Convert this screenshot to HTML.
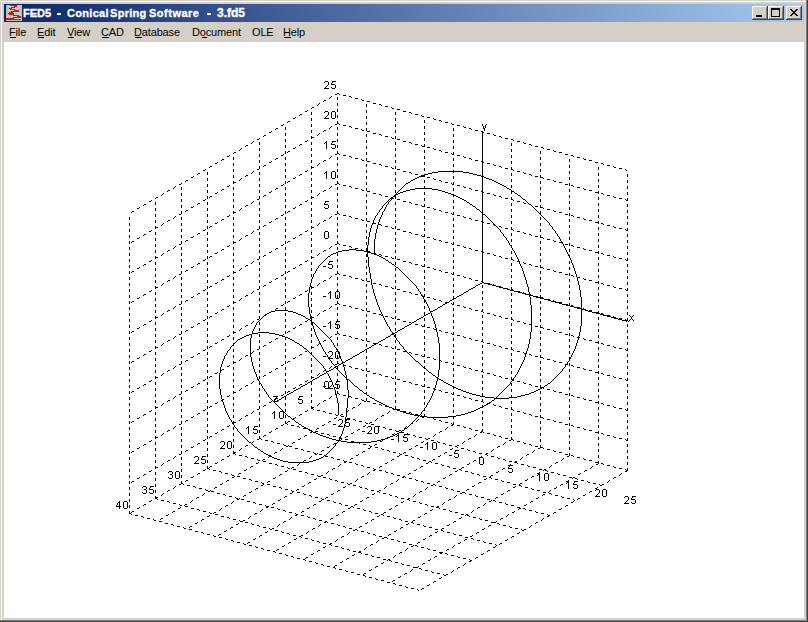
<!DOCTYPE html>
<html><head><meta charset="utf-8">
<style>
html,body{margin:0;padding:0;}
body{width:808px;height:622px;position:relative;overflow:hidden;background:#d4d0c8;font-family:"Liberation Sans",sans-serif;}
.abs{position:absolute;}
#frame{left:0;top:0;width:808px;height:622px;background:#d4d0c8;}
#title{left:4px;top:4px;width:800px;height:18px;background:linear-gradient(to right,#0a246a,#a6caf0);}
.tt{top:4px;height:18px;line-height:18px;color:#fff;font-weight:bold;font-size:11px;white-space:pre;-webkit-text-stroke:0.35px #fff;}
.btn{top:6px;width:16px;height:14px;background:#d4d0c8;box-sizing:border-box;}
#menu{left:4px;top:22px;width:800px;height:20px;background:#d4d0c8;}
.mi{top:22px;height:20px;line-height:20px;font-size:11px;color:#000;white-space:pre;letter-spacing:-0.15px;}
.mi u{text-decoration:none;border-bottom:1px solid #000;}
#client{left:4px;top:42px;width:800px;height:576px;background:#fff;}
svg{position:absolute;left:0;top:0;}
</style></head><body>
<div class="abs" id="frame"></div>
<svg width="808" height="622" shape-rendering="crispEdges">
<rect x="0" y="0" width="808" height="1" fill="#d4d0c8"/>
<rect x="1" y="1" width="805" height="1" fill="#fff"/>
<rect x="1" y="1" width="1" height="619" fill="#fff"/>
<rect x="806" y="0" width="1" height="621" fill="#808080"/>
<rect x="0" y="620" width="807" height="1" fill="#808080"/>
<rect x="807" y="0" width="1" height="622" fill="#404040"/>
<rect x="0" y="621" width="808" height="1" fill="#404040"/>
</svg>
<div class="abs" id="title"></div>
<svg width="808" height="622" shape-rendering="crispEdges" style="left:0;top:0">
<rect x="6" y="5" width="16" height="16" fill="#c0c0c0"/><rect x="8" y="6" width="6" height="1" fill="#b0dce0"/><rect x="12" y="8" width="7" height="1" fill="#b0dce0"/><rect x="8" y="10" width="6" height="1" fill="#b0dce0"/><rect x="13" y="12" width="6" height="1" fill="#b0dce0"/><rect x="14" y="14" width="5" height="1" fill="#b0dce0"/><rect x="9" y="16" width="8" height="1" fill="#b0dce0"/><rect x="14" y="18" width="6" height="1" fill="#b0dce0"/><rect x="10" y="5" width="7" height="1" fill="#ff0000"/><rect x="14" y="6" width="3" height="1" fill="#ff0000"/><rect x="11" y="7" width="4" height="1" fill="#ff0000"/><rect x="9" y="8" width="3" height="1" fill="#ff0000"/><rect x="10" y="9" width="5" height="1" fill="#ff0000"/><rect x="14" y="10" width="5" height="1" fill="#ff0000"/><rect x="11" y="11" width="8" height="1" fill="#ff0000"/><rect x="8" y="12" width="5" height="1" fill="#ff0000"/><rect x="8" y="13" width="6" height="1" fill="#ff0000"/><rect x="9" y="14" width="5" height="1" fill="#ff0000"/><rect x="13" y="15" width="6" height="1" fill="#ff0000"/><rect x="17" y="16" width="4" height="1" fill="#ff0000"/><rect x="13" y="17" width="8" height="1" fill="#ff0000"/><rect x="6" y="18" width="8" height="1" fill="#ff0000"/><rect x="6" y="19" width="15" height="1" fill="#ff0000"/><rect x="17" y="6" width="1" height="1" fill="#ffff00"/><rect x="9" y="9" width="1" height="1" fill="#ffff00"/><rect x="8" y="12" width="1" height="1" fill="#ffff00"/><rect x="19" y="14" width="1" height="1" fill="#ffff00"/><rect x="7" y="16" width="1" height="1" fill="#ffff00"/><rect x="20" y="18" width="1" height="1" fill="#ffff00"/>
</svg>
<div class="abs tt" style="left:23px">FED5</div>
<div class="abs" style="left:57px;top:13px;width:4px;height:2px;background:#fff"></div>
<div class="abs tt" style="left:67px;letter-spacing:0.3px">Conical</div><div class="abs tt" style="left:110px;letter-spacing:0.3px">Spring</div><div class="abs tt" style="left:149px;letter-spacing:0.5px">Software</div>
<div class="abs" style="left:207px;top:13px;width:4px;height:2px;background:#fff"></div>
<div class="abs tt" style="left:217px;font-size:12px">3.fd5</div>
<svg width="808" height="622" shape-rendering="crispEdges" style="position:absolute;left:0;top:0"><rect x="752" y="6" width="16" height="14" fill="#404040"/><rect x="752" y="6" width="15" height="13" fill="#fff"/><rect x="753" y="7" width="14" height="12" fill="#808080"/><rect x="753" y="7" width="13" height="11" fill="#d4d0c8"/><rect x="768" y="6" width="16" height="14" fill="#404040"/><rect x="768" y="6" width="15" height="13" fill="#fff"/><rect x="769" y="7" width="14" height="12" fill="#808080"/><rect x="769" y="7" width="13" height="11" fill="#d4d0c8"/><rect x="786" y="6" width="16" height="14" fill="#404040"/><rect x="786" y="6" width="15" height="13" fill="#fff"/><rect x="787" y="7" width="14" height="12" fill="#808080"/><rect x="787" y="7" width="13" height="11" fill="#d4d0c8"/><rect x="756" y="15" width="6" height="2" fill="#000"/><rect x="771" y="8" width="9" height="9" fill="#000"/><rect x="772" y="10" width="7" height="6" fill="#d4d0c8"/><rect x="790" y="9" width="1" height="1" fill="#000"/><rect x="791" y="9" width="1" height="1" fill="#000"/><rect x="796" y="9" width="1" height="1" fill="#000"/><rect x="797" y="9" width="1" height="1" fill="#000"/><rect x="791" y="10" width="1" height="1" fill="#000"/><rect x="792" y="10" width="1" height="1" fill="#000"/><rect x="795" y="10" width="1" height="1" fill="#000"/><rect x="796" y="10" width="1" height="1" fill="#000"/><rect x="792" y="11" width="1" height="1" fill="#000"/><rect x="793" y="11" width="1" height="1" fill="#000"/><rect x="794" y="11" width="1" height="1" fill="#000"/><rect x="795" y="11" width="1" height="1" fill="#000"/><rect x="793" y="12" width="1" height="1" fill="#000"/><rect x="794" y="12" width="1" height="1" fill="#000"/><rect x="792" y="13" width="1" height="1" fill="#000"/><rect x="793" y="13" width="1" height="1" fill="#000"/><rect x="794" y="13" width="1" height="1" fill="#000"/><rect x="795" y="13" width="1" height="1" fill="#000"/><rect x="791" y="14" width="1" height="1" fill="#000"/><rect x="792" y="14" width="1" height="1" fill="#000"/><rect x="795" y="14" width="1" height="1" fill="#000"/><rect x="796" y="14" width="1" height="1" fill="#000"/><rect x="790" y="15" width="1" height="1" fill="#000"/><rect x="791" y="15" width="1" height="1" fill="#000"/><rect x="796" y="15" width="1" height="1" fill="#000"/><rect x="797" y="15" width="1" height="1" fill="#000"/></svg>
<div class="abs" id="menu"></div>
<div class="abs mi" style="left:9px">File</div>
<div class="abs mi" style="left:37px">Edit</div>
<div class="abs mi" style="left:67px">View</div>
<div class="abs mi" style="left:101px">CAD</div>
<div class="abs mi" style="left:134px">Database</div>
<div class="abs mi" style="left:192px">Document</div>
<div class="abs mi" style="left:252px">OLE</div>
<div class="abs mi" style="left:283px">Help</div>
<div class="abs" style="left:10px;top:37px;width:6px;height:1px;background:#000"></div><div class="abs" style="left:38px;top:37px;width:6px;height:1px;background:#000"></div><div class="abs" style="left:68px;top:37px;width:6px;height:1px;background:#000"></div><div class="abs" style="left:102px;top:37px;width:7px;height:1px;background:#000"></div><div class="abs" style="left:135px;top:37px;width:7px;height:1px;background:#000"></div><div class="abs" style="left:202px;top:37px;width:5px;height:1px;background:#000"></div><div class="abs" style="left:284px;top:37px;width:7px;height:1px;background:#000"></div>
<div class="abs" id="client"></div>
<svg width="808" height="622" shape-rendering="crispEdges"><path fill="#000" d="M325 81h3v1h-3zM332 81h4v1h-4zM324 82h1v1h-1zM328 82h1v1h-1zM332 82h1v1h-1zM328 83h1v1h-1zM331 83h1v1h-1zM328 84h1v1h-1zM331 84h4v1h-4zM327 85h1v1h-1zM335 85h1v1h-1zM326 86h1v1h-1zM335 86h1v1h-1zM325 87h1v1h-1zM331 87h1v1h-1zM335 87h1v1h-1zM324 88h5v1h-5zM332 88h3v1h-3zM337 93h2v1h-2zM335 94h2v1h-2zM339 94h1v1h-1zM343 95h3v1h-3zM331 96h1v1h-1zM349 96h2v1h-2zM330 97h1v1h-1zM337 97h1v1h-1zM351 97h1v1h-1zM329 98h1v1h-1zM337 98h1v1h-1zM355 98h3v1h-3zM337 99h1v1h-1zM361 99h1v1h-1zM324 100h2v1h-2zM362 100h2v1h-2zM323 101h1v1h-1zM367 101h3v1h-3zM319 103h1v1h-1zM337 103h1v1h-1zM373 103h3v1h-3zM318 104h1v1h-1zM337 104h1v1h-1zM366 104h1v1h-1zM379 104h2v1h-2zM317 105h1v1h-1zM337 105h1v1h-1zM366 105h1v1h-1zM381 105h1v1h-1zM366 106h1v1h-1zM385 106h3v1h-3zM312 107h2v1h-2zM391 107h1v1h-1zM311 108h1v1h-1zM392 108h2v1h-2zM337 109h1v1h-1zM397 109h3v1h-3zM307 110h1v1h-1zM337 110h1v1h-1zM366 110h1v1h-1zM305 111h2v1h-2zM325 111h3v1h-3zM332 111h3v1h-3zM337 111h1v1h-1zM366 111h1v1h-1zM403 111h3v1h-3zM311 112h1v1h-1zM324 112h1v1h-1zM328 112h1v1h-1zM331 112h1v1h-1zM335 112h1v1h-1zM366 112h1v1h-1zM395 112h1v1h-1zM409 112h2v1h-2zM311 113h1v1h-1zM328 113h1v1h-1zM331 113h1v1h-1zM335 113h1v1h-1zM395 113h1v1h-1zM411 113h1v1h-1zM300 114h2v1h-2zM311 114h1v1h-1zM328 114h1v1h-1zM331 114h1v1h-1zM335 114h1v1h-1zM395 114h1v1h-1zM415 114h3v1h-3zM299 115h1v1h-1zM327 115h1v1h-1zM331 115h1v1h-1zM335 115h1v1h-1zM337 115h1v1h-1zM421 115h1v1h-1zM326 116h1v1h-1zM331 116h1v1h-1zM335 116h1v1h-1zM337 116h1v1h-1zM366 116h1v1h-1zM422 116h2v1h-2zM295 117h1v1h-1zM325 117h1v1h-1zM331 117h1v1h-1zM335 117h1v1h-1zM337 117h1v1h-1zM366 117h1v1h-1zM427 117h3v1h-3zM293 118h2v1h-2zM311 118h1v1h-1zM324 118h5v1h-5zM332 118h3v1h-3zM366 118h1v1h-1zM395 118h1v1h-1zM433 118h1v1h-1zM311 119h1v1h-1zM395 119h1v1h-1zM434 119h2v1h-2zM311 120h1v1h-1zM395 120h1v1h-1zM424 120h1v1h-1zM439 120h2v1h-2zM288 121h2v1h-2zM337 121h1v1h-1zM424 121h1v1h-1zM441 121h1v1h-1zM287 122h1v1h-1zM337 122h1v1h-1zM366 122h1v1h-1zM424 122h1v1h-1zM445 122h3v1h-3zM337 123h2v1h-2zM366 123h1v1h-1zM451 123h1v1h-1zM283 124h1v1h-1zM311 124h1v1h-1zM335 124h2v1h-2zM339 124h1v1h-1zM366 124h1v1h-1zM395 124h1v1h-1zM452 124h2v1h-2zM482 124h1v1h-1zM486 124h1v1h-1zM281 125h2v1h-2zM311 125h1v1h-1zM343 125h3v1h-3zM395 125h1v1h-1zM457 125h3v1h-3zM482 125h1v1h-1zM485 125h1v1h-1zM311 126h1v1h-1zM331 126h1v1h-1zM349 126h2v1h-2zM395 126h1v1h-1zM424 126h1v1h-1zM463 126h1v1h-1zM483 126h1v1h-1zM485 126h1v1h-1zM285 127h1v1h-1zM330 127h1v1h-1zM337 127h1v1h-1zM351 127h1v1h-1zM424 127h1v1h-1zM464 127h2v1h-2zM483 127h1v1h-1zM485 127h1v1h-1zM276 128h2v1h-2zM285 128h1v1h-1zM329 128h1v1h-1zM337 128h1v1h-1zM355 128h3v1h-3zM366 128h1v1h-1zM424 128h1v1h-1zM453 128h1v1h-1zM469 128h2v1h-2zM483 128h2v1h-2zM275 129h1v1h-1zM285 129h1v1h-1zM337 129h1v1h-1zM361 129h1v1h-1zM366 129h1v1h-1zM453 129h1v1h-1zM471 129h1v1h-1zM484 129h1v1h-1zM311 130h1v1h-1zM324 130h2v1h-2zM362 130h2v1h-2zM366 130h1v1h-1zM395 130h1v1h-1zM453 130h1v1h-1zM475 130h3v1h-3zM484 130h1v1h-1zM271 131h1v1h-1zM311 131h1v1h-1zM323 131h1v1h-1zM367 131h3v1h-3zM395 131h1v1h-1zM481 131h2v1h-2zM269 132h2v1h-2zM311 132h1v1h-1zM395 132h1v1h-1zM424 132h1v1h-1zM482 132h2v1h-2zM285 133h1v1h-1zM319 133h1v1h-1zM337 133h1v1h-1zM373 133h3v1h-3zM424 133h1v1h-1zM482 133h1v1h-1zM487 133h3v1h-3zM285 134h1v1h-1zM318 134h1v1h-1zM337 134h1v1h-1zM366 134h1v1h-1zM379 134h2v1h-2zM424 134h1v1h-1zM453 134h1v1h-1zM482 134h1v1h-1zM493 134h1v1h-1zM264 135h2v1h-2zM285 135h1v1h-1zM317 135h1v1h-1zM337 135h1v1h-1zM366 135h1v1h-1zM381 135h1v1h-1zM453 135h1v1h-1zM482 135h1v1h-1zM494 135h2v1h-2zM263 136h1v1h-1zM311 136h1v1h-1zM366 136h1v1h-1zM385 136h3v1h-3zM395 136h1v1h-1zM453 136h1v1h-1zM482 136h1v1h-1zM499 136h2v1h-2zM311 137h3v1h-3zM391 137h1v1h-1zM395 137h1v1h-1zM482 137h1v1h-1zM501 137h1v1h-1zM259 138h1v1h-1zM311 138h1v1h-1zM392 138h2v1h-2zM395 138h1v1h-1zM424 138h1v1h-1zM482 138h1v1h-1zM505 138h3v1h-3zM257 139h2v1h-2zM285 139h1v1h-1zM337 139h1v1h-1zM397 139h3v1h-3zM424 139h1v1h-1zM482 139h1v1h-1zM511 139h2v1h-2zM285 140h1v1h-1zM307 140h1v1h-1zM337 140h1v1h-1zM366 140h1v1h-1zM424 140h1v1h-1zM453 140h1v1h-1zM482 140h1v1h-1zM513 140h1v1h-1zM253 141h1v1h-1zM285 141h1v1h-1zM305 141h2v1h-2zM326 141h1v1h-1zM332 141h4v1h-4zM337 141h1v1h-1zM366 141h1v1h-1zM403 141h3v1h-3zM453 141h1v1h-1zM482 141h1v1h-1zM517 141h3v1h-3zM252 142h1v1h-1zM259 142h1v1h-1zM311 142h1v1h-1zM325 142h2v1h-2zM332 142h1v1h-1zM366 142h1v1h-1zM395 142h1v1h-1zM409 142h2v1h-2zM453 142h1v1h-1zM482 142h1v1h-1zM523 142h1v1h-1zM251 143h1v1h-1zM259 143h1v1h-1zM311 143h1v1h-1zM324 143h1v1h-1zM326 143h1v1h-1zM331 143h1v1h-1zM395 143h1v1h-1zM411 143h1v1h-1zM482 143h1v1h-1zM511 143h1v1h-1zM524 143h2v1h-2zM259 144h1v1h-1zM300 144h2v1h-2zM311 144h1v1h-1zM326 144h1v1h-1zM331 144h4v1h-4zM395 144h1v1h-1zM415 144h3v1h-3zM424 144h1v1h-1zM482 144h1v1h-1zM511 144h1v1h-1zM529 144h2v1h-2zM246 145h2v1h-2zM285 145h1v1h-1zM299 145h1v1h-1zM326 145h1v1h-1zM335 145h1v1h-1zM337 145h1v1h-1zM421 145h1v1h-1zM424 145h1v1h-1zM482 145h1v1h-1zM511 145h1v1h-1zM531 145h1v1h-1zM245 146h1v1h-1zM285 146h1v1h-1zM326 146h1v1h-1zM335 146h1v1h-1zM337 146h1v1h-1zM366 146h1v1h-1zM422 146h3v1h-3zM453 146h1v1h-1zM482 146h1v1h-1zM535 146h3v1h-3zM285 147h1v1h-1zM295 147h1v1h-1zM326 147h1v1h-1zM331 147h1v1h-1zM335 147h1v1h-1zM337 147h1v1h-1zM366 147h1v1h-1zM427 147h3v1h-3zM453 147h1v1h-1zM482 147h1v1h-1zM541 147h2v1h-2zM241 148h1v1h-1zM259 148h1v1h-1zM293 148h2v1h-2zM311 148h1v1h-1zM326 148h1v1h-1zM332 148h3v1h-3zM366 148h1v1h-1zM395 148h1v1h-1zM433 148h1v1h-1zM453 148h1v1h-1zM482 148h1v1h-1zM543 148h1v1h-1zM240 149h1v1h-1zM259 149h1v1h-1zM311 149h1v1h-1zM395 149h1v1h-1zM434 149h2v1h-2zM482 149h1v1h-1zM511 149h1v1h-1zM547 149h3v1h-3zM239 150h1v1h-1zM259 150h1v1h-1zM311 150h1v1h-1zM395 150h1v1h-1zM424 150h1v1h-1zM439 150h2v1h-2zM482 150h1v1h-1zM511 150h1v1h-1zM553 150h1v1h-1zM285 151h1v1h-1zM288 151h2v1h-2zM337 151h1v1h-1zM424 151h1v1h-1zM441 151h1v1h-1zM482 151h1v1h-1zM511 151h1v1h-1zM540 151h1v1h-1zM554 151h2v1h-2zM234 152h2v1h-2zM285 152h1v1h-1zM287 152h1v1h-1zM337 152h1v1h-1zM366 152h1v1h-1zM424 152h1v1h-1zM445 152h3v1h-3zM453 152h1v1h-1zM482 152h1v1h-1zM540 152h1v1h-1zM559 152h3v1h-3zM233 153h1v1h-1zM285 153h1v1h-1zM337 153h2v1h-2zM366 153h1v1h-1zM451 153h1v1h-1zM453 153h1v1h-1zM482 153h1v1h-1zM540 153h1v1h-1zM259 154h1v1h-1zM283 154h1v1h-1zM311 154h1v1h-1zM335 154h2v1h-2zM339 154h1v1h-1zM366 154h1v1h-1zM395 154h1v1h-1zM452 154h2v1h-2zM482 154h1v1h-1zM565 154h3v1h-3zM229 155h1v1h-1zM259 155h1v1h-1zM281 155h2v1h-2zM311 155h1v1h-1zM343 155h3v1h-3zM395 155h1v1h-1zM457 155h3v1h-3zM482 155h1v1h-1zM511 155h1v1h-1zM571 155h2v1h-2zM227 156h2v1h-2zM259 156h1v1h-1zM311 156h1v1h-1zM331 156h1v1h-1zM349 156h2v1h-2zM395 156h1v1h-1zM424 156h1v1h-1zM463 156h1v1h-1zM482 156h1v1h-1zM511 156h1v1h-1zM573 156h1v1h-1zM233 157h1v1h-1zM285 157h1v1h-1zM330 157h1v1h-1zM337 157h1v1h-1zM351 157h1v1h-1zM424 157h1v1h-1zM464 157h2v1h-2zM482 157h1v1h-1zM511 157h1v1h-1zM540 157h1v1h-1zM577 157h3v1h-3zM233 158h1v1h-1zM276 158h2v1h-2zM285 158h1v1h-1zM329 158h1v1h-1zM337 158h1v1h-1zM355 158h3v1h-3zM366 158h1v1h-1zM424 158h1v1h-1zM453 158h1v1h-1zM469 158h2v1h-2zM482 158h1v1h-1zM540 158h1v1h-1zM583 158h1v1h-1zM222 159h2v1h-2zM233 159h1v1h-1zM275 159h1v1h-1zM285 159h1v1h-1zM337 159h1v1h-1zM361 159h1v1h-1zM366 159h1v1h-1zM453 159h1v1h-1zM471 159h1v1h-1zM482 159h1v1h-1zM540 159h1v1h-1zM569 159h1v1h-1zM584 159h2v1h-2zM221 160h1v1h-1zM259 160h1v1h-1zM311 160h1v1h-1zM324 160h2v1h-2zM362 160h2v1h-2zM366 160h1v1h-1zM395 160h1v1h-1zM453 160h1v1h-1zM475 160h3v1h-3zM482 160h1v1h-1zM569 160h1v1h-1zM589 160h3v1h-3zM259 161h1v1h-1zM271 161h1v1h-1zM311 161h1v1h-1zM323 161h1v1h-1zM367 161h3v1h-3zM395 161h1v1h-1zM481 161h2v1h-2zM511 161h1v1h-1zM569 161h1v1h-1zM217 162h1v1h-1zM259 162h1v1h-1zM269 162h2v1h-2zM311 162h1v1h-1zM395 162h1v1h-1zM424 162h1v1h-1zM482 162h2v1h-2zM511 162h1v1h-1zM595 162h3v1h-3zM215 163h2v1h-2zM233 163h1v1h-1zM285 163h1v1h-1zM319 163h1v1h-1zM337 163h1v1h-1zM373 163h3v1h-3zM424 163h1v1h-1zM482 163h1v1h-1zM487 163h3v1h-3zM511 163h1v1h-1zM540 163h1v1h-1zM601 163h2v1h-2zM233 164h1v1h-1zM285 164h1v1h-1zM318 164h1v1h-1zM337 164h1v1h-1zM366 164h1v1h-1zM379 164h2v1h-2zM424 164h1v1h-1zM453 164h1v1h-1zM482 164h1v1h-1zM493 164h1v1h-1zM540 164h1v1h-1zM603 164h1v1h-1zM233 165h1v1h-1zM264 165h2v1h-2zM285 165h1v1h-1zM317 165h1v1h-1zM337 165h1v1h-1zM366 165h1v1h-1zM381 165h1v1h-1zM453 165h1v1h-1zM482 165h1v1h-1zM494 165h2v1h-2zM540 165h1v1h-1zM569 165h1v1h-1zM607 165h3v1h-3zM210 166h2v1h-2zM259 166h1v1h-1zM263 166h1v1h-1zM311 166h1v1h-1zM366 166h1v1h-1zM385 166h3v1h-3zM395 166h1v1h-1zM453 166h1v1h-1zM482 166h1v1h-1zM499 166h2v1h-2zM569 166h1v1h-1zM613 166h1v1h-1zM209 167h1v1h-1zM259 167h1v1h-1zM311 167h3v1h-3zM391 167h1v1h-1zM395 167h1v1h-1zM482 167h1v1h-1zM501 167h1v1h-1zM511 167h1v1h-1zM569 167h1v1h-1zM598 167h1v1h-1zM614 167h2v1h-2zM259 168h1v1h-1zM311 168h1v1h-1zM392 168h2v1h-2zM395 168h1v1h-1zM424 168h1v1h-1zM482 168h1v1h-1zM505 168h3v1h-3zM511 168h1v1h-1zM598 168h1v1h-1zM619 168h3v1h-3zM205 169h1v1h-1zM233 169h1v1h-1zM257 169h2v1h-2zM285 169h1v1h-1zM337 169h1v1h-1zM397 169h3v1h-3zM424 169h1v1h-1zM482 169h1v1h-1zM511 169h2v1h-2zM540 169h1v1h-1zM598 169h1v1h-1zM625 169h1v1h-1zM203 170h2v1h-2zM233 170h1v1h-1zM285 170h1v1h-1zM307 170h1v1h-1zM337 170h1v1h-1zM366 170h1v1h-1zM424 170h1v1h-1zM453 170h1v1h-1zM482 170h1v1h-1zM513 170h1v1h-1zM540 170h1v1h-1zM626 170h1v1h-1zM233 171h1v1h-1zM253 171h1v1h-1zM285 171h1v1h-1zM305 171h2v1h-2zM326 171h1v1h-1zM332 171h3v1h-3zM337 171h1v1h-1zM366 171h1v1h-1zM403 171h3v1h-3zM438 171h25v1h-25zM482 171h1v1h-1zM517 171h3v1h-3zM540 171h1v1h-1zM569 171h1v1h-1zM207 172h1v1h-1zM252 172h1v1h-1zM259 172h1v1h-1zM311 172h1v1h-1zM325 172h2v1h-2zM331 172h1v1h-1zM335 172h1v1h-1zM366 172h1v1h-1zM395 172h1v1h-1zM409 172h2v1h-2zM432 172h6v1h-6zM453 172h1v1h-1zM463 172h6v1h-6zM482 172h1v1h-1zM523 172h1v1h-1zM569 172h1v1h-1zM198 173h2v1h-2zM207 173h1v1h-1zM251 173h1v1h-1zM259 173h1v1h-1zM311 173h1v1h-1zM324 173h1v1h-1zM326 173h1v1h-1zM331 173h1v1h-1zM335 173h1v1h-1zM395 173h1v1h-1zM411 173h1v1h-1zM428 173h4v1h-4zM469 173h4v1h-4zM482 173h1v1h-1zM511 173h1v1h-1zM524 173h2v1h-2zM569 173h1v1h-1zM598 173h1v1h-1zM197 174h1v1h-1zM207 174h1v1h-1zM259 174h1v1h-1zM300 174h2v1h-2zM311 174h1v1h-1zM326 174h1v1h-1zM331 174h1v1h-1zM335 174h1v1h-1zM395 174h1v1h-1zM415 174h3v1h-3zM424 174h4v1h-4zM473 174h4v1h-4zM482 174h1v1h-1zM511 174h1v1h-1zM529 174h2v1h-2zM598 174h1v1h-1zM627 174h1v1h-1zM233 175h1v1h-1zM246 175h2v1h-2zM285 175h1v1h-1zM299 175h1v1h-1zM326 175h1v1h-1zM331 175h1v1h-1zM335 175h1v1h-1zM337 175h1v1h-1zM421 175h4v1h-4zM477 175h4v1h-4zM482 175h1v1h-1zM511 175h1v1h-1zM531 175h1v1h-1zM540 175h1v1h-1zM598 175h1v1h-1zM627 175h1v1h-1zM193 176h1v1h-1zM233 176h1v1h-1zM245 176h1v1h-1zM285 176h1v1h-1zM326 176h1v1h-1zM331 176h1v1h-1zM335 176h1v1h-1zM337 176h1v1h-1zM366 176h1v1h-1zM419 176h6v1h-6zM453 176h1v1h-1zM481 176h3v1h-3zM535 176h3v1h-3zM540 176h1v1h-1zM627 176h1v1h-1zM191 177h2v1h-2zM233 177h1v1h-1zM285 177h1v1h-1zM295 177h1v1h-1zM326 177h1v1h-1zM331 177h1v1h-1zM335 177h1v1h-1zM337 177h1v1h-1zM366 177h1v1h-1zM417 177h2v1h-2zM427 177h3v1h-3zM453 177h1v1h-1zM482 177h1v1h-1zM484 177h2v1h-2zM540 177h3v1h-3zM569 177h1v1h-1zM207 178h1v1h-1zM241 178h1v1h-1zM259 178h1v1h-1zM293 178h2v1h-2zM311 178h1v1h-1zM326 178h1v1h-1zM332 178h3v1h-3zM366 178h1v1h-1zM395 178h1v1h-1zM415 178h2v1h-2zM433 178h1v1h-1zM453 178h1v1h-1zM482 178h1v1h-1zM486 178h3v1h-3zM543 178h1v1h-1zM569 178h1v1h-1zM207 179h1v1h-1zM240 179h1v1h-1zM259 179h1v1h-1zM311 179h1v1h-1zM395 179h1v1h-1zM413 179h2v1h-2zM434 179h2v1h-2zM482 179h1v1h-1zM489 179h3v1h-3zM511 179h1v1h-1zM547 179h3v1h-3zM569 179h1v1h-1zM598 179h1v1h-1zM186 180h2v1h-2zM207 180h1v1h-1zM239 180h1v1h-1zM259 180h1v1h-1zM311 180h1v1h-1zM395 180h1v1h-1zM411 180h2v1h-2zM424 180h1v1h-1zM439 180h2v1h-2zM482 180h1v1h-1zM492 180h2v1h-2zM511 180h1v1h-1zM553 180h1v1h-1zM598 180h1v1h-1zM627 180h1v1h-1zM185 181h1v1h-1zM233 181h1v1h-1zM285 181h1v1h-1zM288 181h2v1h-2zM337 181h1v1h-1zM410 181h1v1h-1zM424 181h1v1h-1zM441 181h1v1h-1zM482 181h1v1h-1zM494 181h2v1h-2zM511 181h1v1h-1zM540 181h1v1h-1zM554 181h2v1h-2zM598 181h1v1h-1zM627 181h1v1h-1zM233 182h3v1h-3zM285 182h1v1h-1zM287 182h1v1h-1zM337 182h1v1h-1zM366 182h1v1h-1zM408 182h2v1h-2zM424 182h1v1h-1zM445 182h3v1h-3zM453 182h1v1h-1zM482 182h1v1h-1zM496 182h2v1h-2zM540 182h1v1h-1zM559 182h3v1h-3zM627 182h1v1h-1zM181 183h1v1h-1zM233 183h1v1h-1zM285 183h1v1h-1zM337 183h2v1h-2zM366 183h1v1h-1zM406 183h2v1h-2zM451 183h1v1h-1zM453 183h1v1h-1zM482 183h1v1h-1zM498 183h2v1h-2zM540 183h1v1h-1zM569 183h1v1h-1zM179 184h2v1h-2zM207 184h1v1h-1zM259 184h1v1h-1zM283 184h1v1h-1zM311 184h1v1h-1zM335 184h2v1h-2zM339 184h1v1h-1zM366 184h1v1h-1zM395 184h1v1h-1zM405 184h1v1h-1zM452 184h2v1h-2zM482 184h1v1h-1zM500 184h2v1h-2zM565 184h3v1h-3zM569 184h1v1h-1zM207 185h1v1h-1zM229 185h1v1h-1zM259 185h1v1h-1zM281 185h2v1h-2zM311 185h1v1h-1zM343 185h3v1h-3zM395 185h1v1h-1zM404 185h1v1h-1zM457 185h3v1h-3zM482 185h1v1h-1zM502 185h2v1h-2zM511 185h1v1h-1zM569 185h1v1h-1zM571 185h2v1h-2zM598 185h1v1h-1zM175 186h1v1h-1zM207 186h1v1h-1zM227 186h2v1h-2zM259 186h1v1h-1zM311 186h1v1h-1zM331 186h1v1h-1zM349 186h2v1h-2zM395 186h1v1h-1zM403 186h1v1h-1zM424 186h1v1h-1zM463 186h1v1h-1zM482 186h1v1h-1zM504 186h2v1h-2zM511 186h1v1h-1zM573 186h1v1h-1zM598 186h1v1h-1zM627 186h1v1h-1zM174 187h1v1h-1zM181 187h1v1h-1zM233 187h1v1h-1zM285 187h1v1h-1zM330 187h1v1h-1zM337 187h1v1h-1zM351 187h1v1h-1zM402 187h1v1h-1zM424 187h1v1h-1zM464 187h2v1h-2zM482 187h1v1h-1zM506 187h1v1h-1zM511 187h1v1h-1zM540 187h1v1h-1zM577 187h3v1h-3zM598 187h1v1h-1zM627 187h1v1h-1zM173 188h1v1h-1zM181 188h1v1h-1zM233 188h1v1h-1zM276 188h2v1h-2zM285 188h1v1h-1zM329 188h1v1h-1zM337 188h1v1h-1zM355 188h3v1h-3zM366 188h1v1h-1zM401 188h1v1h-1zM415 188h17v1h-17zM453 188h1v1h-1zM469 188h2v1h-2zM482 188h1v1h-1zM507 188h2v1h-2zM540 188h1v1h-1zM583 188h1v1h-1zM627 188h1v1h-1zM181 189h1v1h-1zM222 189h2v1h-2zM233 189h1v1h-1zM275 189h1v1h-1zM285 189h1v1h-1zM337 189h1v1h-1zM361 189h1v1h-1zM366 189h1v1h-1zM400 189h1v1h-1zM410 189h5v1h-5zM432 189h6v1h-6zM453 189h1v1h-1zM471 189h1v1h-1zM482 189h1v1h-1zM509 189h2v1h-2zM540 189h1v1h-1zM569 189h1v1h-1zM584 189h2v1h-2zM168 190h2v1h-2zM207 190h1v1h-1zM221 190h1v1h-1zM259 190h1v1h-1zM311 190h1v1h-1zM324 190h2v1h-2zM362 190h2v1h-2zM366 190h1v1h-1zM395 190h1v1h-1zM399 190h1v1h-1zM406 190h4v1h-4zM438 190h4v1h-4zM453 190h1v1h-1zM475 190h3v1h-3zM482 190h1v1h-1zM511 190h1v1h-1zM569 190h1v1h-1zM589 190h3v1h-3zM167 191h1v1h-1zM207 191h1v1h-1zM259 191h1v1h-1zM271 191h1v1h-1zM311 191h1v1h-1zM323 191h1v1h-1zM367 191h3v1h-3zM395 191h1v1h-1zM398 191h1v1h-1zM403 191h3v1h-3zM442 191h3v1h-3zM481 191h2v1h-2zM511 191h3v1h-3zM569 191h1v1h-1zM598 191h1v1h-1zM207 192h1v1h-1zM217 192h1v1h-1zM259 192h1v1h-1zM269 192h2v1h-2zM311 192h1v1h-1zM395 192h1v1h-1zM397 192h1v1h-1zM400 192h3v1h-3zM424 192h1v1h-1zM445 192h3v1h-3zM482 192h2v1h-2zM511 192h1v1h-1zM514 192h1v1h-1zM595 192h4v1h-4zM627 192h1v1h-1zM163 193h1v1h-1zM181 193h1v1h-1zM215 193h2v1h-2zM233 193h1v1h-1zM285 193h1v1h-1zM319 193h1v1h-1zM337 193h1v1h-1zM373 193h3v1h-3zM396 193h1v1h-1zM398 193h2v1h-2zM424 193h1v1h-1zM448 193h3v1h-3zM482 193h1v1h-1zM487 193h3v1h-3zM511 193h1v1h-1zM515 193h2v1h-2zM540 193h1v1h-1zM598 193h1v1h-1zM601 193h2v1h-2zM627 193h1v1h-1zM162 194h1v1h-1zM181 194h1v1h-1zM233 194h1v1h-1zM285 194h1v1h-1zM318 194h1v1h-1zM337 194h1v1h-1zM366 194h1v1h-1zM379 194h2v1h-2zM395 194h3v1h-3zM424 194h1v1h-1zM451 194h3v1h-3zM482 194h1v1h-1zM493 194h1v1h-1zM517 194h1v1h-1zM540 194h1v1h-1zM603 194h1v1h-1zM627 194h1v1h-1zM161 195h1v1h-1zM181 195h1v1h-1zM233 195h1v1h-1zM264 195h2v1h-2zM285 195h1v1h-1zM317 195h1v1h-1zM337 195h1v1h-1zM366 195h1v1h-1zM381 195h1v1h-1zM394 195h2v1h-2zM453 195h3v1h-3zM482 195h1v1h-1zM494 195h2v1h-2zM518 195h2v1h-2zM540 195h1v1h-1zM569 195h1v1h-1zM607 195h3v1h-3zM207 196h1v1h-1zM210 196h2v1h-2zM259 196h1v1h-1zM263 196h1v1h-1zM311 196h1v1h-1zM366 196h1v1h-1zM385 196h3v1h-3zM393 196h3v1h-3zM453 196h1v1h-1zM456 196h2v1h-2zM482 196h1v1h-1zM499 196h2v1h-2zM520 196h1v1h-1zM569 196h1v1h-1zM613 196h1v1h-1zM156 197h2v1h-2zM207 197h1v1h-1zM209 197h1v1h-1zM259 197h1v1h-1zM311 197h3v1h-3zM391 197h2v1h-2zM395 197h1v1h-1zM458 197h2v1h-2zM482 197h1v1h-1zM501 197h1v1h-1zM511 197h1v1h-1zM521 197h1v1h-1zM569 197h1v1h-1zM598 197h1v1h-1zM614 197h2v1h-2zM155 198h1v1h-1zM207 198h1v1h-1zM259 198h1v1h-1zM311 198h1v1h-1zM390 198h4v1h-4zM395 198h1v1h-1zM424 198h1v1h-1zM460 198h2v1h-2zM482 198h1v1h-1zM505 198h3v1h-3zM511 198h1v1h-1zM522 198h1v1h-1zM598 198h1v1h-1zM619 198h3v1h-3zM627 198h1v1h-1zM181 199h1v1h-1zM205 199h1v1h-1zM233 199h1v1h-1zM257 199h2v1h-2zM285 199h1v1h-1zM337 199h1v1h-1zM389 199h1v1h-1zM391 199h1v1h-1zM397 199h3v1h-3zM424 199h1v1h-1zM462 199h2v1h-2zM482 199h1v1h-1zM511 199h2v1h-2zM523 199h2v1h-2zM540 199h1v1h-1zM598 199h1v1h-1zM625 199h1v1h-1zM627 199h1v1h-1zM151 200h1v1h-1zM181 200h1v1h-1zM203 200h2v1h-2zM233 200h1v1h-1zM285 200h1v1h-1zM307 200h1v1h-1zM337 200h1v1h-1zM366 200h1v1h-1zM388 200h1v1h-1zM390 200h1v1h-1zM424 200h1v1h-1zM453 200h1v1h-1zM464 200h2v1h-2zM482 200h1v1h-1zM513 200h1v1h-1zM525 200h1v1h-1zM540 200h1v1h-1zM626 200h2v1h-2zM149 201h2v1h-2zM181 201h1v1h-1zM233 201h1v1h-1zM253 201h1v1h-1zM285 201h1v1h-1zM305 201h2v1h-2zM325 201h4v1h-4zM337 201h1v1h-1zM366 201h1v1h-1zM387 201h1v1h-1zM389 201h1v1h-1zM403 201h3v1h-3zM453 201h1v1h-1zM466 201h1v1h-1zM482 201h1v1h-1zM517 201h3v1h-3zM526 201h1v1h-1zM540 201h1v1h-1zM569 201h1v1h-1zM155 202h1v1h-1zM207 202h1v1h-1zM252 202h1v1h-1zM259 202h1v1h-1zM311 202h1v1h-1zM325 202h1v1h-1zM366 202h1v1h-1zM386 202h1v1h-1zM388 202h1v1h-1zM395 202h1v1h-1zM409 202h2v1h-2zM453 202h1v1h-1zM467 202h2v1h-2zM482 202h1v1h-1zM523 202h1v1h-1zM527 202h1v1h-1zM569 202h1v1h-1zM155 203h1v1h-1zM198 203h2v1h-2zM207 203h1v1h-1zM251 203h1v1h-1zM259 203h1v1h-1zM311 203h1v1h-1zM324 203h1v1h-1zM385 203h1v1h-1zM388 203h1v1h-1zM395 203h1v1h-1zM411 203h1v1h-1zM469 203h1v1h-1zM482 203h1v1h-1zM511 203h1v1h-1zM524 203h2v1h-2zM528 203h1v1h-1zM569 203h1v1h-1zM598 203h1v1h-1zM144 204h2v1h-2zM155 204h1v1h-1zM197 204h1v1h-1zM207 204h1v1h-1zM259 204h1v1h-1zM300 204h2v1h-2zM311 204h1v1h-1zM324 204h4v1h-4zM384 204h1v1h-1zM387 204h1v1h-1zM395 204h1v1h-1zM415 204h3v1h-3zM424 204h1v1h-1zM470 204h2v1h-2zM482 204h1v1h-1zM511 204h1v1h-1zM529 204h2v1h-2zM598 204h1v1h-1zM627 204h1v1h-1zM143 205h1v1h-1zM181 205h1v1h-1zM233 205h1v1h-1zM246 205h2v1h-2zM285 205h1v1h-1zM299 205h1v1h-1zM328 205h1v1h-1zM337 205h1v1h-1zM383 205h1v1h-1zM386 205h1v1h-1zM421 205h1v1h-1zM424 205h1v1h-1zM472 205h1v1h-1zM482 205h1v1h-1zM511 205h1v1h-1zM531 205h1v1h-1zM540 205h1v1h-1zM598 205h1v1h-1zM627 205h1v1h-1zM181 206h1v1h-1zM193 206h1v1h-1zM233 206h1v1h-1zM245 206h1v1h-1zM285 206h1v1h-1zM328 206h1v1h-1zM337 206h1v1h-1zM366 206h1v1h-1zM382 206h1v1h-1zM386 206h1v1h-1zM422 206h3v1h-3zM453 206h1v1h-1zM473 206h2v1h-2zM482 206h1v1h-1zM532 206h1v1h-1zM535 206h3v1h-3zM540 206h1v1h-1zM627 206h1v1h-1zM139 207h1v1h-1zM181 207h1v1h-1zM191 207h2v1h-2zM233 207h1v1h-1zM285 207h1v1h-1zM295 207h1v1h-1zM324 207h1v1h-1zM328 207h1v1h-1zM337 207h1v1h-1zM366 207h1v1h-1zM382 207h1v1h-1zM385 207h1v1h-1zM427 207h3v1h-3zM453 207h1v1h-1zM475 207h1v1h-1zM482 207h1v1h-1zM533 207h1v1h-1zM540 207h3v1h-3zM569 207h1v1h-1zM137 208h2v1h-2zM155 208h1v1h-1zM207 208h1v1h-1zM241 208h1v1h-1zM259 208h1v1h-1zM293 208h2v1h-2zM311 208h1v1h-1zM325 208h3v1h-3zM366 208h1v1h-1zM381 208h1v1h-1zM385 208h1v1h-1zM395 208h1v1h-1zM433 208h1v1h-1zM453 208h1v1h-1zM476 208h1v1h-1zM482 208h1v1h-1zM534 208h1v1h-1zM543 208h1v1h-1zM569 208h1v1h-1zM155 209h1v1h-1zM207 209h1v1h-1zM240 209h1v1h-1zM259 209h1v1h-1zM311 209h1v1h-1zM380 209h1v1h-1zM384 209h1v1h-1zM395 209h1v1h-1zM434 209h2v1h-2zM477 209h2v1h-2zM482 209h1v1h-1zM511 209h1v1h-1zM535 209h1v1h-1zM547 209h3v1h-3zM569 209h1v1h-1zM598 209h1v1h-1zM155 210h1v1h-1zM186 210h2v1h-2zM207 210h1v1h-1zM239 210h1v1h-1zM259 210h1v1h-1zM311 210h1v1h-1zM379 210h1v1h-1zM384 210h1v1h-1zM395 210h1v1h-1zM424 210h1v1h-1zM439 210h2v1h-2zM479 210h1v1h-1zM482 210h1v1h-1zM511 210h1v1h-1zM536 210h1v1h-1zM553 210h1v1h-1zM598 210h1v1h-1zM627 210h1v1h-1zM132 211h2v1h-2zM181 211h1v1h-1zM185 211h1v1h-1zM233 211h1v1h-1zM285 211h1v1h-1zM288 211h2v1h-2zM337 211h1v1h-1zM379 211h1v1h-1zM383 211h1v1h-1zM424 211h1v1h-1zM441 211h1v1h-1zM480 211h1v1h-1zM482 211h1v1h-1zM511 211h1v1h-1zM537 211h1v1h-1zM540 211h1v1h-1zM554 211h2v1h-2zM598 211h1v1h-1zM627 211h1v1h-1zM131 212h1v1h-1zM181 212h1v1h-1zM233 212h3v1h-3zM285 212h1v1h-1zM287 212h1v1h-1zM337 212h1v1h-1zM366 212h1v1h-1zM378 212h1v1h-1zM382 212h1v1h-1zM424 212h1v1h-1zM445 212h3v1h-3zM453 212h1v1h-1zM481 212h2v1h-2zM538 212h1v1h-1zM540 212h1v1h-1zM559 212h3v1h-3zM627 212h1v1h-1zM181 213h1v1h-1zM233 213h1v1h-1zM285 213h1v1h-1zM337 213h2v1h-2zM366 213h1v1h-1zM377 213h1v1h-1zM382 213h1v1h-1zM451 213h1v1h-1zM453 213h1v1h-1zM482 213h1v1h-1zM539 213h2v1h-2zM569 213h1v1h-1zM155 214h1v1h-1zM179 214h2v1h-2zM207 214h1v1h-1zM259 214h1v1h-1zM283 214h1v1h-1zM311 214h1v1h-1zM335 214h2v1h-2zM339 214h1v1h-1zM366 214h1v1h-1zM377 214h1v1h-1zM382 214h1v1h-1zM395 214h1v1h-1zM452 214h2v1h-2zM482 214h3v1h-3zM540 214h1v1h-1zM565 214h3v1h-3zM569 214h1v1h-1zM155 215h1v1h-1zM207 215h1v1h-1zM229 215h1v1h-1zM259 215h1v1h-1zM281 215h2v1h-2zM311 215h1v1h-1zM343 215h3v1h-3zM376 215h1v1h-1zM381 215h1v1h-1zM395 215h1v1h-1zM457 215h3v1h-3zM482 215h1v1h-1zM485 215h1v1h-1zM511 215h1v1h-1zM541 215h1v1h-1zM569 215h1v1h-1zM571 215h2v1h-2zM598 215h1v1h-1zM155 216h1v1h-1zM175 216h1v1h-1zM207 216h1v1h-1zM227 216h2v1h-2zM259 216h1v1h-1zM311 216h1v1h-1zM331 216h1v1h-1zM349 216h2v1h-2zM375 216h1v1h-1zM381 216h1v1h-1zM395 216h1v1h-1zM424 216h1v1h-1zM463 216h1v1h-1zM482 216h1v1h-1zM486 216h1v1h-1zM511 216h1v1h-1zM542 216h1v1h-1zM573 216h1v1h-1zM598 216h1v1h-1zM627 216h1v1h-1zM129 217h1v1h-1zM174 217h1v1h-1zM181 217h1v1h-1zM233 217h1v1h-1zM285 217h1v1h-1zM330 217h1v1h-1zM337 217h1v1h-1zM351 217h1v1h-1zM375 217h1v1h-1zM380 217h1v1h-1zM424 217h1v1h-1zM464 217h2v1h-2zM482 217h1v1h-1zM487 217h1v1h-1zM511 217h1v1h-1zM540 217h1v1h-1zM543 217h1v1h-1zM577 217h3v1h-3zM598 217h1v1h-1zM627 217h1v1h-1zM129 218h1v1h-1zM173 218h1v1h-1zM181 218h1v1h-1zM233 218h1v1h-1zM276 218h2v1h-2zM285 218h1v1h-1zM329 218h1v1h-1zM337 218h1v1h-1zM355 218h3v1h-3zM366 218h1v1h-1zM374 218h1v1h-1zM380 218h1v1h-1zM424 218h1v1h-1zM453 218h1v1h-1zM469 218h2v1h-2zM482 218h1v1h-1zM488 218h1v1h-1zM540 218h1v1h-1zM544 218h1v1h-1zM583 218h1v1h-1zM627 218h1v1h-1zM129 219h1v1h-1zM181 219h1v1h-1zM222 219h2v1h-2zM233 219h1v1h-1zM275 219h1v1h-1zM285 219h1v1h-1zM337 219h1v1h-1zM361 219h1v1h-1zM366 219h1v1h-1zM374 219h1v1h-1zM379 219h1v1h-1zM453 219h1v1h-1zM471 219h1v1h-1zM482 219h1v1h-1zM489 219h1v1h-1zM540 219h1v1h-1zM545 219h1v1h-1zM569 219h1v1h-1zM584 219h2v1h-2zM155 220h1v1h-1zM168 220h2v1h-2zM207 220h1v1h-1zM221 220h1v1h-1zM259 220h1v1h-1zM311 220h1v1h-1zM324 220h2v1h-2zM362 220h2v1h-2zM366 220h1v1h-1zM373 220h1v1h-1zM379 220h1v1h-1zM395 220h1v1h-1zM453 220h1v1h-1zM475 220h3v1h-3zM482 220h1v1h-1zM490 220h1v1h-1zM546 220h1v1h-1zM569 220h1v1h-1zM589 220h3v1h-3zM155 221h1v1h-1zM167 221h1v1h-1zM207 221h1v1h-1zM259 221h1v1h-1zM271 221h1v1h-1zM311 221h1v1h-1zM323 221h1v1h-1zM367 221h3v1h-3zM373 221h1v1h-1zM379 221h1v1h-1zM395 221h1v1h-1zM481 221h2v1h-2zM491 221h1v1h-1zM511 221h1v1h-1zM547 221h1v1h-1zM569 221h1v1h-1zM598 221h1v1h-1zM155 222h1v1h-1zM207 222h1v1h-1zM217 222h1v1h-1zM259 222h1v1h-1zM269 222h2v1h-2zM311 222h1v1h-1zM373 222h1v1h-1zM378 222h1v1h-1zM395 222h1v1h-1zM424 222h1v1h-1zM482 222h2v1h-2zM492 222h1v1h-1zM511 222h1v1h-1zM548 222h1v1h-1zM595 222h4v1h-4zM627 222h1v1h-1zM129 223h1v1h-1zM163 223h1v1h-1zM181 223h1v1h-1zM215 223h2v1h-2zM233 223h1v1h-1zM285 223h1v1h-1zM319 223h1v1h-1zM337 223h1v1h-1zM372 223h4v1h-4zM378 223h1v1h-1zM424 223h1v1h-1zM482 223h1v1h-1zM487 223h3v1h-3zM493 223h1v1h-1zM511 223h1v1h-1zM540 223h1v1h-1zM549 223h1v1h-1zM598 223h1v1h-1zM601 223h2v1h-2zM627 223h1v1h-1zM129 224h1v1h-1zM162 224h1v1h-1zM181 224h1v1h-1zM233 224h1v1h-1zM285 224h1v1h-1zM318 224h1v1h-1zM337 224h1v1h-1zM366 224h1v1h-1zM372 224h1v1h-1zM378 224h3v1h-3zM424 224h1v1h-1zM453 224h1v1h-1zM482 224h1v1h-1zM493 224h2v1h-2zM540 224h1v1h-1zM549 224h1v1h-1zM603 224h1v1h-1zM627 224h1v1h-1zM129 225h1v1h-1zM161 225h1v1h-1zM181 225h1v1h-1zM233 225h1v1h-1zM264 225h2v1h-2zM285 225h1v1h-1zM317 225h1v1h-1zM337 225h1v1h-1zM366 225h1v1h-1zM371 225h1v1h-1zM377 225h1v1h-1zM381 225h1v1h-1zM453 225h1v1h-1zM482 225h1v1h-1zM494 225h2v1h-2zM540 225h1v1h-1zM550 225h1v1h-1zM569 225h1v1h-1zM607 225h3v1h-3zM155 226h1v1h-1zM207 226h1v1h-1zM210 226h2v1h-2zM259 226h1v1h-1zM263 226h1v1h-1zM311 226h1v1h-1zM366 226h1v1h-1zM371 226h1v1h-1zM377 226h1v1h-1zM385 226h3v1h-3zM395 226h1v1h-1zM453 226h1v1h-1zM482 226h1v1h-1zM496 226h1v1h-1zM499 226h2v1h-2zM551 226h1v1h-1zM569 226h1v1h-1zM613 226h1v1h-1zM155 227h3v1h-3zM207 227h1v1h-1zM209 227h1v1h-1zM259 227h1v1h-1zM311 227h3v1h-3zM371 227h1v1h-1zM377 227h1v1h-1zM391 227h1v1h-1zM395 227h1v1h-1zM482 227h1v1h-1zM497 227h1v1h-1zM501 227h1v1h-1zM511 227h1v1h-1zM552 227h1v1h-1zM569 227h1v1h-1zM598 227h1v1h-1zM614 227h2v1h-2zM155 228h1v1h-1zM207 228h1v1h-1zM259 228h1v1h-1zM311 228h1v1h-1zM370 228h1v1h-1zM377 228h1v1h-1zM392 228h2v1h-2zM395 228h1v1h-1zM424 228h1v1h-1zM482 228h1v1h-1zM498 228h1v1h-1zM505 228h3v1h-3zM511 228h1v1h-1zM552 228h1v1h-1zM598 228h1v1h-1zM619 228h3v1h-3zM627 228h1v1h-1zM129 229h1v1h-1zM181 229h1v1h-1zM205 229h1v1h-1zM233 229h1v1h-1zM257 229h2v1h-2zM285 229h1v1h-1zM337 229h1v1h-1zM370 229h1v1h-1zM376 229h1v1h-1zM397 229h3v1h-3zM424 229h1v1h-1zM482 229h1v1h-1zM499 229h1v1h-1zM511 229h2v1h-2zM540 229h1v1h-1zM553 229h1v1h-1zM598 229h1v1h-1zM625 229h1v1h-1zM627 229h1v1h-1zM129 230h1v1h-1zM151 230h1v1h-1zM181 230h1v1h-1zM203 230h2v1h-2zM233 230h1v1h-1zM285 230h1v1h-1zM307 230h1v1h-1zM337 230h1v1h-1zM366 230h1v1h-1zM370 230h1v1h-1zM376 230h1v1h-1zM424 230h1v1h-1zM453 230h1v1h-1zM482 230h1v1h-1zM500 230h1v1h-1zM513 230h1v1h-1zM540 230h1v1h-1zM554 230h1v1h-1zM626 230h2v1h-2zM129 231h1v1h-1zM149 231h2v1h-2zM181 231h1v1h-1zM233 231h1v1h-1zM253 231h1v1h-1zM285 231h1v1h-1zM305 231h2v1h-2zM325 231h3v1h-3zM337 231h1v1h-1zM366 231h1v1h-1zM370 231h1v1h-1zM376 231h1v1h-1zM403 231h3v1h-3zM453 231h1v1h-1zM482 231h1v1h-1zM500 231h1v1h-1zM517 231h3v1h-3zM540 231h1v1h-1zM555 231h1v1h-1zM569 231h1v1h-1zM155 232h1v1h-1zM207 232h1v1h-1zM252 232h1v1h-1zM259 232h1v1h-1zM311 232h1v1h-1zM324 232h1v1h-1zM328 232h1v1h-1zM366 232h1v1h-1zM369 232h1v1h-1zM376 232h1v1h-1zM395 232h1v1h-1zM409 232h2v1h-2zM453 232h1v1h-1zM482 232h1v1h-1zM501 232h1v1h-1zM523 232h1v1h-1zM555 232h1v1h-1zM569 232h1v1h-1zM155 233h1v1h-1zM198 233h2v1h-2zM207 233h1v1h-1zM251 233h1v1h-1zM259 233h1v1h-1zM311 233h1v1h-1zM324 233h1v1h-1zM328 233h1v1h-1zM369 233h1v1h-1zM375 233h1v1h-1zM395 233h1v1h-1zM411 233h1v1h-1zM482 233h1v1h-1zM502 233h1v1h-1zM511 233h1v1h-1zM524 233h2v1h-2zM556 233h1v1h-1zM569 233h1v1h-1zM598 233h1v1h-1zM144 234h2v1h-2zM155 234h1v1h-1zM197 234h1v1h-1zM207 234h1v1h-1zM259 234h1v1h-1zM300 234h2v1h-2zM311 234h1v1h-1zM324 234h1v1h-1zM328 234h1v1h-1zM369 234h1v1h-1zM375 234h1v1h-1zM395 234h1v1h-1zM415 234h3v1h-3zM424 234h1v1h-1zM482 234h1v1h-1zM503 234h1v1h-1zM511 234h1v1h-1zM529 234h2v1h-2zM557 234h1v1h-1zM598 234h1v1h-1zM627 234h1v1h-1zM129 235h1v1h-1zM143 235h1v1h-1zM181 235h1v1h-1zM233 235h1v1h-1zM246 235h2v1h-2zM285 235h1v1h-1zM299 235h1v1h-1zM324 235h1v1h-1zM328 235h1v1h-1zM337 235h1v1h-1zM369 235h1v1h-1zM375 235h1v1h-1zM421 235h1v1h-1zM424 235h1v1h-1zM482 235h1v1h-1zM503 235h1v1h-1zM511 235h1v1h-1zM531 235h1v1h-1zM540 235h1v1h-1zM557 235h1v1h-1zM598 235h1v1h-1zM627 235h1v1h-1zM129 236h1v1h-1zM181 236h1v1h-1zM193 236h1v1h-1zM233 236h1v1h-1zM245 236h1v1h-1zM285 236h1v1h-1zM324 236h1v1h-1zM328 236h1v1h-1zM337 236h1v1h-1zM366 236h1v1h-1zM369 236h1v1h-1zM375 236h1v1h-1zM422 236h3v1h-3zM453 236h1v1h-1zM482 236h1v1h-1zM504 236h1v1h-1zM535 236h3v1h-3zM540 236h1v1h-1zM558 236h1v1h-1zM627 236h1v1h-1zM129 237h1v1h-1zM139 237h1v1h-1zM181 237h1v1h-1zM191 237h2v1h-2zM233 237h1v1h-1zM285 237h1v1h-1zM295 237h1v1h-1zM324 237h1v1h-1zM328 237h1v1h-1zM337 237h1v1h-1zM366 237h1v1h-1zM368 237h1v1h-1zM375 237h1v1h-1zM427 237h3v1h-3zM453 237h1v1h-1zM482 237h1v1h-1zM505 237h1v1h-1zM540 237h3v1h-3zM559 237h1v1h-1zM569 237h1v1h-1zM137 238h2v1h-2zM155 238h1v1h-1zM207 238h1v1h-1zM241 238h1v1h-1zM259 238h1v1h-1zM293 238h2v1h-2zM311 238h1v1h-1zM325 238h3v1h-3zM366 238h1v1h-1zM368 238h1v1h-1zM375 238h1v1h-1zM395 238h1v1h-1zM433 238h1v1h-1zM453 238h1v1h-1zM482 238h1v1h-1zM506 238h1v1h-1zM543 238h1v1h-1zM559 238h1v1h-1zM569 238h1v1h-1zM155 239h1v1h-1zM207 239h1v1h-1zM240 239h1v1h-1zM259 239h1v1h-1zM311 239h1v1h-1zM368 239h1v1h-1zM374 239h1v1h-1zM395 239h1v1h-1zM434 239h2v1h-2zM482 239h1v1h-1zM506 239h1v1h-1zM511 239h1v1h-1zM547 239h3v1h-3zM560 239h1v1h-1zM569 239h1v1h-1zM598 239h1v1h-1zM155 240h1v1h-1zM186 240h2v1h-2zM207 240h1v1h-1zM239 240h1v1h-1zM259 240h1v1h-1zM311 240h1v1h-1zM368 240h1v1h-1zM374 240h1v1h-1zM395 240h1v1h-1zM424 240h1v1h-1zM439 240h2v1h-2zM482 240h1v1h-1zM507 240h1v1h-1zM511 240h1v1h-1zM553 240h1v1h-1zM560 240h1v1h-1zM598 240h1v1h-1zM627 240h1v1h-1zM129 241h1v1h-1zM132 241h2v1h-2zM181 241h1v1h-1zM185 241h1v1h-1zM233 241h1v1h-1zM285 241h1v1h-1zM288 241h2v1h-2zM337 241h1v1h-1zM368 241h1v1h-1zM374 241h1v1h-1zM424 241h1v1h-1zM441 241h1v1h-1zM482 241h1v1h-1zM508 241h1v1h-1zM511 241h1v1h-1zM540 241h1v1h-1zM554 241h2v1h-2zM561 241h1v1h-1zM598 241h1v1h-1zM627 241h1v1h-1zM129 242h1v1h-1zM131 242h1v1h-1zM181 242h1v1h-1zM233 242h3v1h-3zM285 242h1v1h-1zM287 242h1v1h-1zM337 242h1v1h-1zM366 242h1v1h-1zM368 242h1v1h-1zM374 242h1v1h-1zM424 242h1v1h-1zM445 242h3v1h-3zM453 242h1v1h-1zM482 242h1v1h-1zM508 242h1v1h-1zM540 242h1v1h-1zM559 242h4v1h-4zM627 242h1v1h-1zM129 243h1v1h-1zM181 243h1v1h-1zM233 243h1v1h-1zM285 243h1v1h-1zM337 243h2v1h-2zM366 243h1v1h-1zM368 243h1v1h-1zM374 243h1v1h-1zM451 243h1v1h-1zM453 243h1v1h-1zM482 243h1v1h-1zM509 243h1v1h-1zM540 243h1v1h-1zM562 243h1v1h-1zM569 243h1v1h-1zM155 244h1v1h-1zM179 244h2v1h-2zM207 244h1v1h-1zM259 244h1v1h-1zM283 244h1v1h-1zM311 244h1v1h-1zM335 244h2v1h-2zM339 244h1v1h-1zM366 244h1v1h-1zM368 244h1v1h-1zM374 244h1v1h-1zM395 244h1v1h-1zM452 244h2v1h-2zM482 244h1v1h-1zM509 244h1v1h-1zM563 244h1v1h-1zM565 244h3v1h-3zM569 244h1v1h-1zM155 245h1v1h-1zM207 245h1v1h-1zM229 245h1v1h-1zM259 245h1v1h-1zM281 245h2v1h-2zM311 245h1v1h-1zM343 245h3v1h-3zM367 245h1v1h-1zM374 245h1v1h-1zM395 245h1v1h-1zM457 245h3v1h-3zM482 245h1v1h-1zM510 245h2v1h-2zM563 245h1v1h-1zM569 245h1v1h-1zM571 245h2v1h-2zM598 245h1v1h-1zM155 246h1v1h-1zM175 246h1v1h-1zM207 246h1v1h-1zM227 246h2v1h-2zM259 246h1v1h-1zM311 246h1v1h-1zM331 246h1v1h-1zM349 246h2v1h-2zM367 246h1v1h-1zM374 246h1v1h-1zM395 246h1v1h-1zM424 246h1v1h-1zM463 246h1v1h-1zM482 246h1v1h-1zM511 246h1v1h-1zM564 246h1v1h-1zM573 246h1v1h-1zM598 246h1v1h-1zM627 246h1v1h-1zM129 247h1v1h-1zM174 247h1v1h-1zM181 247h1v1h-1zM233 247h1v1h-1zM285 247h1v1h-1zM330 247h1v1h-1zM337 247h1v1h-1zM351 247h1v1h-1zM367 247h1v1h-1zM374 247h1v1h-1zM424 247h1v1h-1zM464 247h2v1h-2zM482 247h1v1h-1zM511 247h1v1h-1zM540 247h1v1h-1zM564 247h1v1h-1zM577 247h3v1h-3zM598 247h1v1h-1zM627 247h1v1h-1zM129 248h1v1h-1zM173 248h1v1h-1zM181 248h1v1h-1zM233 248h1v1h-1zM276 248h2v1h-2zM285 248h1v1h-1zM329 248h1v1h-1zM337 248h1v1h-1zM355 248h3v1h-3zM366 248h2v1h-2zM374 248h1v1h-1zM424 248h1v1h-1zM453 248h1v1h-1zM469 248h2v1h-2zM482 248h1v1h-1zM512 248h1v1h-1zM540 248h1v1h-1zM565 248h1v1h-1zM583 248h1v1h-1zM627 248h1v1h-1zM129 249h1v1h-1zM181 249h1v1h-1zM222 249h2v1h-2zM233 249h1v1h-1zM275 249h1v1h-1zM285 249h1v1h-1zM337 249h1v1h-1zM349 249h7v1h-7zM361 249h1v1h-1zM366 249h2v1h-2zM374 249h1v1h-1zM453 249h1v1h-1zM471 249h1v1h-1zM482 249h1v1h-1zM512 249h1v1h-1zM540 249h1v1h-1zM565 249h1v1h-1zM569 249h1v1h-1zM584 249h2v1h-2zM155 250h1v1h-1zM168 250h2v1h-2zM207 250h1v1h-1zM221 250h1v1h-1zM259 250h1v1h-1zM311 250h1v1h-1zM324 250h2v1h-2zM342 250h7v1h-7zM356 250h8v1h-8zM366 250h2v1h-2zM374 250h1v1h-1zM395 250h1v1h-1zM453 250h1v1h-1zM475 250h3v1h-3zM482 250h1v1h-1zM513 250h1v1h-1zM566 250h1v1h-1zM569 250h1v1h-1zM589 250h3v1h-3zM155 251h1v1h-1zM167 251h1v1h-1zM207 251h1v1h-1zM259 251h1v1h-1zM271 251h1v1h-1zM311 251h1v1h-1zM323 251h1v1h-1zM338 251h4v1h-4zM364 251h6v1h-6zM374 251h1v1h-1zM395 251h1v1h-1zM481 251h2v1h-2zM511 251h1v1h-1zM514 251h1v1h-1zM566 251h1v1h-1zM569 251h1v1h-1zM598 251h1v1h-1zM155 252h1v1h-1zM207 252h1v1h-1zM217 252h1v1h-1zM259 252h1v1h-1zM269 252h2v1h-2zM311 252h1v1h-1zM336 252h2v1h-2zM367 252h4v1h-4zM374 252h1v1h-1zM395 252h1v1h-1zM424 252h1v1h-1zM482 252h2v1h-2zM511 252h1v1h-1zM514 252h1v1h-1zM567 252h1v1h-1zM595 252h4v1h-4zM627 252h1v1h-1zM129 253h1v1h-1zM163 253h1v1h-1zM181 253h1v1h-1zM215 253h2v1h-2zM233 253h1v1h-1zM285 253h1v1h-1zM319 253h1v1h-1zM333 253h3v1h-3zM337 253h1v1h-1zM367 253h1v1h-1zM371 253h5v1h-5zM424 253h1v1h-1zM482 253h1v1h-1zM487 253h3v1h-3zM511 253h1v1h-1zM515 253h1v1h-1zM540 253h1v1h-1zM567 253h1v1h-1zM598 253h1v1h-1zM601 253h2v1h-2zM627 253h1v1h-1zM129 254h1v1h-1zM162 254h1v1h-1zM181 254h1v1h-1zM233 254h1v1h-1zM285 254h1v1h-1zM318 254h1v1h-1zM331 254h2v1h-2zM337 254h1v1h-1zM366 254h2v1h-2zM374 254h3v1h-3zM379 254h2v1h-2zM424 254h1v1h-1zM453 254h1v1h-1zM482 254h1v1h-1zM493 254h1v1h-1zM515 254h1v1h-1zM540 254h1v1h-1zM568 254h1v1h-1zM603 254h1v1h-1zM627 254h1v1h-1zM129 255h1v1h-1zM161 255h1v1h-1zM181 255h1v1h-1zM233 255h1v1h-1zM264 255h2v1h-2zM285 255h1v1h-1zM317 255h1v1h-1zM330 255h1v1h-1zM337 255h1v1h-1zM366 255h2v1h-2zM377 255h2v1h-2zM381 255h1v1h-1zM453 255h1v1h-1zM482 255h1v1h-1zM494 255h2v1h-2zM516 255h1v1h-1zM540 255h1v1h-1zM568 255h2v1h-2zM607 255h3v1h-3zM155 256h1v1h-1zM207 256h1v1h-1zM210 256h2v1h-2zM259 256h1v1h-1zM263 256h1v1h-1zM311 256h1v1h-1zM328 256h2v1h-2zM366 256h2v1h-2zM379 256h2v1h-2zM385 256h3v1h-3zM395 256h1v1h-1zM453 256h1v1h-1zM482 256h1v1h-1zM499 256h2v1h-2zM516 256h1v1h-1zM569 256h1v1h-1zM613 256h1v1h-1zM155 257h3v1h-3zM207 257h1v1h-1zM209 257h1v1h-1zM259 257h1v1h-1zM311 257h3v1h-3zM327 257h1v1h-1zM368 257h1v1h-1zM381 257h2v1h-2zM391 257h1v1h-1zM395 257h1v1h-1zM482 257h1v1h-1zM501 257h1v1h-1zM511 257h1v1h-1zM517 257h1v1h-1zM569 257h1v1h-1zM598 257h1v1h-1zM614 257h2v1h-2zM155 258h1v1h-1zM207 258h1v1h-1zM259 258h1v1h-1zM311 258h1v1h-1zM326 258h1v1h-1zM368 258h1v1h-1zM383 258h2v1h-2zM392 258h2v1h-2zM395 258h1v1h-1zM424 258h1v1h-1zM482 258h1v1h-1zM505 258h3v1h-3zM511 258h1v1h-1zM517 258h1v1h-1zM570 258h1v1h-1zM598 258h1v1h-1zM619 258h3v1h-3zM627 258h1v1h-1zM129 259h1v1h-1zM181 259h1v1h-1zM205 259h1v1h-1zM233 259h1v1h-1zM257 259h2v1h-2zM285 259h1v1h-1zM325 259h1v1h-1zM337 259h1v1h-1zM368 259h1v1h-1zM385 259h1v1h-1zM397 259h3v1h-3zM424 259h1v1h-1zM482 259h1v1h-1zM511 259h2v1h-2zM518 259h1v1h-1zM540 259h1v1h-1zM570 259h1v1h-1zM598 259h1v1h-1zM625 259h1v1h-1zM627 259h1v1h-1zM129 260h1v1h-1zM151 260h1v1h-1zM181 260h1v1h-1zM203 260h2v1h-2zM233 260h1v1h-1zM285 260h1v1h-1zM307 260h1v1h-1zM324 260h1v1h-1zM337 260h1v1h-1zM366 260h1v1h-1zM368 260h1v1h-1zM386 260h2v1h-2zM424 260h1v1h-1zM453 260h1v1h-1zM482 260h1v1h-1zM513 260h1v1h-1zM518 260h1v1h-1zM540 260h1v1h-1zM571 260h1v1h-1zM626 260h2v1h-2zM129 261h1v1h-1zM149 261h2v1h-2zM181 261h1v1h-1zM233 261h1v1h-1zM253 261h1v1h-1zM285 261h1v1h-1zM305 261h2v1h-2zM323 261h1v1h-1zM329 261h4v1h-4zM337 261h1v1h-1zM366 261h1v1h-1zM368 261h1v1h-1zM388 261h1v1h-1zM403 261h3v1h-3zM453 261h1v1h-1zM482 261h1v1h-1zM517 261h3v1h-3zM540 261h1v1h-1zM569 261h1v1h-1zM571 261h1v1h-1zM155 262h1v1h-1zM207 262h1v1h-1zM252 262h1v1h-1zM259 262h1v1h-1zM311 262h1v1h-1zM322 262h1v1h-1zM329 262h1v1h-1zM366 262h1v1h-1zM368 262h1v1h-1zM389 262h2v1h-2zM395 262h1v1h-1zM409 262h2v1h-2zM453 262h1v1h-1zM482 262h1v1h-1zM519 262h1v1h-1zM523 262h1v1h-1zM569 262h1v1h-1zM571 262h1v1h-1zM155 263h1v1h-1zM198 263h2v1h-2zM207 263h1v1h-1zM251 263h1v1h-1zM259 263h1v1h-1zM311 263h1v1h-1zM321 263h1v1h-1zM328 263h1v1h-1zM368 263h1v1h-1zM391 263h1v1h-1zM395 263h1v1h-1zM411 263h1v1h-1zM482 263h1v1h-1zM511 263h1v1h-1zM519 263h1v1h-1zM524 263h2v1h-2zM569 263h1v1h-1zM572 263h1v1h-1zM598 263h1v1h-1zM144 264h2v1h-2zM155 264h1v1h-1zM197 264h1v1h-1zM207 264h1v1h-1zM259 264h1v1h-1zM300 264h2v1h-2zM311 264h1v1h-1zM320 264h1v1h-1zM328 264h4v1h-4zM368 264h1v1h-1zM392 264h2v1h-2zM395 264h1v1h-1zM415 264h3v1h-3zM424 264h1v1h-1zM482 264h1v1h-1zM511 264h1v1h-1zM520 264h1v1h-1zM529 264h2v1h-2zM572 264h1v1h-1zM598 264h1v1h-1zM627 264h1v1h-1zM129 265h1v1h-1zM143 265h1v1h-1zM181 265h1v1h-1zM233 265h1v1h-1zM246 265h2v1h-2zM285 265h1v1h-1zM299 265h1v1h-1zM319 265h1v1h-1zM332 265h1v1h-1zM337 265h1v1h-1zM368 265h1v1h-1zM394 265h1v1h-1zM421 265h1v1h-1zM424 265h1v1h-1zM482 265h1v1h-1zM511 265h1v1h-1zM520 265h1v1h-1zM531 265h1v1h-1zM540 265h1v1h-1zM573 265h1v1h-1zM598 265h1v1h-1zM627 265h1v1h-1zM129 266h1v1h-1zM181 266h1v1h-1zM193 266h1v1h-1zM233 266h1v1h-1zM245 266h1v1h-1zM285 266h1v1h-1zM318 266h1v1h-1zM323 266h3v1h-3zM332 266h1v1h-1zM337 266h1v1h-1zM366 266h1v1h-1zM368 266h1v1h-1zM395 266h1v1h-1zM422 266h3v1h-3zM453 266h1v1h-1zM482 266h1v1h-1zM521 266h1v1h-1zM535 266h3v1h-3zM540 266h1v1h-1zM573 266h1v1h-1zM627 266h1v1h-1zM129 267h1v1h-1zM139 267h1v1h-1zM181 267h1v1h-1zM191 267h2v1h-2zM233 267h1v1h-1zM285 267h1v1h-1zM295 267h1v1h-1zM318 267h1v1h-1zM328 267h1v1h-1zM332 267h1v1h-1zM337 267h1v1h-1zM366 267h1v1h-1zM369 267h1v1h-1zM396 267h2v1h-2zM427 267h3v1h-3zM453 267h1v1h-1zM482 267h1v1h-1zM521 267h1v1h-1zM540 267h3v1h-3zM569 267h1v1h-1zM573 267h1v1h-1zM137 268h2v1h-2zM155 268h1v1h-1zM207 268h1v1h-1zM241 268h1v1h-1zM259 268h1v1h-1zM293 268h2v1h-2zM311 268h1v1h-1zM317 268h1v1h-1zM329 268h3v1h-3zM366 268h1v1h-1zM369 268h1v1h-1zM395 268h1v1h-1zM398 268h1v1h-1zM433 268h1v1h-1zM453 268h1v1h-1zM482 268h1v1h-1zM522 268h1v1h-1zM543 268h1v1h-1zM569 268h1v1h-1zM574 268h1v1h-1zM155 269h1v1h-1zM207 269h1v1h-1zM240 269h1v1h-1zM259 269h1v1h-1zM311 269h1v1h-1zM316 269h1v1h-1zM369 269h1v1h-1zM395 269h1v1h-1zM399 269h1v1h-1zM434 269h2v1h-2zM482 269h1v1h-1zM511 269h1v1h-1zM522 269h1v1h-1zM547 269h3v1h-3zM569 269h1v1h-1zM574 269h1v1h-1zM598 269h1v1h-1zM155 270h1v1h-1zM186 270h2v1h-2zM207 270h1v1h-1zM239 270h1v1h-1zM259 270h1v1h-1zM311 270h1v1h-1zM316 270h1v1h-1zM369 270h1v1h-1zM395 270h1v1h-1zM400 270h1v1h-1zM424 270h1v1h-1zM439 270h2v1h-2zM482 270h1v1h-1zM511 270h1v1h-1zM522 270h1v1h-1zM553 270h1v1h-1zM574 270h1v1h-1zM598 270h1v1h-1zM627 270h1v1h-1zM129 271h1v1h-1zM132 271h2v1h-2zM181 271h1v1h-1zM185 271h1v1h-1zM233 271h1v1h-1zM285 271h1v1h-1zM288 271h2v1h-2zM315 271h1v1h-1zM337 271h1v1h-1zM369 271h1v1h-1zM401 271h1v1h-1zM424 271h1v1h-1zM441 271h1v1h-1zM482 271h1v1h-1zM511 271h1v1h-1zM523 271h1v1h-1zM540 271h1v1h-1zM554 271h2v1h-2zM575 271h1v1h-1zM598 271h1v1h-1zM627 271h1v1h-1zM129 272h1v1h-1zM131 272h1v1h-1zM181 272h1v1h-1zM233 272h3v1h-3zM285 272h1v1h-1zM287 272h1v1h-1zM315 272h1v1h-1zM337 272h1v1h-1zM366 272h1v1h-1zM369 272h1v1h-1zM402 272h1v1h-1zM424 272h1v1h-1zM445 272h3v1h-3zM453 272h1v1h-1zM482 272h1v1h-1zM523 272h1v1h-1zM540 272h1v1h-1zM559 272h3v1h-3zM575 272h1v1h-1zM627 272h1v1h-1zM129 273h1v1h-1zM181 273h1v1h-1zM233 273h1v1h-1zM285 273h1v1h-1zM314 273h1v1h-1zM337 273h2v1h-2zM366 273h1v1h-1zM370 273h1v1h-1zM403 273h1v1h-1zM451 273h1v1h-1zM453 273h1v1h-1zM482 273h1v1h-1zM523 273h1v1h-1zM540 273h1v1h-1zM569 273h1v1h-1zM575 273h1v1h-1zM155 274h1v1h-1zM179 274h2v1h-2zM207 274h1v1h-1zM259 274h1v1h-1zM283 274h1v1h-1zM311 274h1v1h-1zM313 274h1v1h-1zM335 274h2v1h-2zM339 274h1v1h-1zM366 274h1v1h-1zM370 274h1v1h-1zM395 274h1v1h-1zM404 274h1v1h-1zM452 274h2v1h-2zM482 274h1v1h-1zM524 274h1v1h-1zM565 274h3v1h-3zM569 274h1v1h-1zM576 274h1v1h-1zM155 275h1v1h-1zM207 275h1v1h-1zM229 275h1v1h-1zM259 275h1v1h-1zM281 275h2v1h-2zM311 275h1v1h-1zM313 275h1v1h-1zM343 275h3v1h-3zM370 275h1v1h-1zM395 275h1v1h-1zM405 275h1v1h-1zM457 275h3v1h-3zM482 275h1v1h-1zM511 275h1v1h-1zM524 275h1v1h-1zM569 275h1v1h-1zM571 275h2v1h-2zM576 275h1v1h-1zM598 275h1v1h-1zM155 276h1v1h-1zM175 276h1v1h-1zM207 276h1v1h-1zM227 276h2v1h-2zM259 276h1v1h-1zM311 276h1v1h-1zM313 276h1v1h-1zM331 276h1v1h-1zM349 276h2v1h-2zM370 276h1v1h-1zM395 276h1v1h-1zM406 276h1v1h-1zM424 276h1v1h-1zM463 276h1v1h-1zM482 276h1v1h-1zM511 276h1v1h-1zM524 276h1v1h-1zM573 276h1v1h-1zM576 276h1v1h-1zM598 276h1v1h-1zM627 276h1v1h-1zM129 277h1v1h-1zM174 277h1v1h-1zM181 277h1v1h-1zM233 277h1v1h-1zM285 277h1v1h-1zM312 277h1v1h-1zM330 277h1v1h-1zM337 277h1v1h-1zM351 277h1v1h-1zM370 277h1v1h-1zM407 277h1v1h-1zM424 277h1v1h-1zM464 277h2v1h-2zM482 277h1v1h-1zM511 277h1v1h-1zM525 277h1v1h-1zM540 277h1v1h-1zM577 277h3v1h-3zM598 277h1v1h-1zM627 277h1v1h-1zM129 278h1v1h-1zM173 278h1v1h-1zM181 278h1v1h-1zM233 278h1v1h-1zM276 278h2v1h-2zM285 278h1v1h-1zM312 278h1v1h-1zM329 278h1v1h-1zM337 278h1v1h-1zM355 278h3v1h-3zM366 278h1v1h-1zM370 278h1v1h-1zM408 278h1v1h-1zM424 278h1v1h-1zM453 278h1v1h-1zM469 278h2v1h-2zM482 278h1v1h-1zM525 278h1v1h-1zM540 278h1v1h-1zM577 278h1v1h-1zM583 278h1v1h-1zM627 278h1v1h-1zM129 279h1v1h-1zM181 279h1v1h-1zM222 279h2v1h-2zM233 279h1v1h-1zM275 279h1v1h-1zM285 279h1v1h-1zM311 279h1v1h-1zM337 279h1v1h-1zM361 279h1v1h-1zM366 279h1v1h-1zM371 279h1v1h-1zM409 279h1v1h-1zM453 279h1v1h-1zM471 279h1v1h-1zM482 279h1v1h-1zM525 279h1v1h-1zM540 279h1v1h-1zM569 279h1v1h-1zM577 279h1v1h-1zM584 279h2v1h-2zM155 280h1v1h-1zM168 280h2v1h-2zM207 280h1v1h-1zM221 280h1v1h-1zM259 280h1v1h-1zM311 280h1v1h-1zM324 280h2v1h-2zM362 280h2v1h-2zM366 280h1v1h-1zM371 280h1v1h-1zM395 280h1v1h-1zM410 280h1v1h-1zM453 280h1v1h-1zM475 280h3v1h-3zM482 280h1v1h-1zM526 280h1v1h-1zM569 280h1v1h-1zM577 280h1v1h-1zM589 280h3v1h-3zM155 281h1v1h-1zM167 281h1v1h-1zM207 281h1v1h-1zM259 281h1v1h-1zM271 281h1v1h-1zM311 281h1v1h-1zM323 281h1v1h-1zM367 281h3v1h-3zM371 281h1v1h-1zM395 281h1v1h-1zM411 281h1v1h-1zM481 281h2v1h-2zM511 281h1v1h-1zM526 281h1v1h-1zM569 281h1v1h-1zM578 281h1v1h-1zM598 281h1v1h-1zM155 282h1v1h-1zM207 282h1v1h-1zM217 282h1v1h-1zM259 282h1v1h-1zM269 282h2v1h-2zM311 282h1v1h-1zM371 282h1v1h-1zM395 282h1v1h-1zM412 282h1v1h-1zM424 282h1v1h-1zM482 282h2v1h-2zM511 282h1v1h-1zM526 282h1v1h-1zM578 282h1v1h-1zM595 282h4v1h-4zM627 282h1v1h-1zM129 283h1v1h-1zM163 283h1v1h-1zM181 283h1v1h-1zM215 283h2v1h-2zM233 283h1v1h-1zM285 283h1v1h-1zM310 283h1v1h-1zM319 283h1v1h-1zM337 283h1v1h-1zM371 283h1v1h-1zM373 283h3v1h-3zM413 283h1v1h-1zM424 283h1v1h-1zM480 283h2v1h-2zM484 283h6v1h-6zM511 283h1v1h-1zM526 283h1v1h-1zM540 283h1v1h-1zM578 283h1v1h-1zM598 283h1v1h-1zM601 283h2v1h-2zM627 283h1v1h-1zM129 284h1v1h-1zM162 284h1v1h-1zM181 284h1v1h-1zM233 284h1v1h-1zM285 284h1v1h-1zM310 284h1v1h-1zM318 284h1v1h-1zM337 284h1v1h-1zM366 284h1v1h-1zM371 284h1v1h-1zM379 284h2v1h-2zM414 284h1v1h-1zM424 284h1v1h-1zM453 284h1v1h-1zM478 284h2v1h-2zM488 284h4v1h-4zM493 284h1v1h-1zM527 284h1v1h-1zM540 284h1v1h-1zM578 284h1v1h-1zM603 284h1v1h-1zM627 284h1v1h-1zM129 285h1v1h-1zM161 285h1v1h-1zM181 285h1v1h-1zM233 285h1v1h-1zM264 285h2v1h-2zM285 285h1v1h-1zM310 285h1v1h-1zM317 285h1v1h-1zM337 285h1v1h-1zM366 285h1v1h-1zM372 285h1v1h-1zM381 285h1v1h-1zM415 285h1v1h-1zM453 285h1v1h-1zM476 285h2v1h-2zM482 285h1v1h-1zM492 285h4v1h-4zM527 285h1v1h-1zM540 285h1v1h-1zM569 285h1v1h-1zM579 285h1v1h-1zM607 285h3v1h-3zM155 286h1v1h-1zM207 286h1v1h-1zM210 286h2v1h-2zM259 286h1v1h-1zM263 286h1v1h-1zM310 286h2v1h-2zM366 286h1v1h-1zM372 286h1v1h-1zM385 286h3v1h-3zM395 286h1v1h-1zM416 286h1v1h-1zM453 286h1v1h-1zM475 286h1v1h-1zM482 286h1v1h-1zM496 286h5v1h-5zM527 286h1v1h-1zM569 286h1v1h-1zM579 286h1v1h-1zM613 286h1v1h-1zM155 287h3v1h-3zM207 287h1v1h-1zM209 287h1v1h-1zM259 287h1v1h-1zM309 287h1v1h-1zM311 287h3v1h-3zM372 287h1v1h-1zM391 287h1v1h-1zM395 287h1v1h-1zM416 287h1v1h-1zM473 287h2v1h-2zM482 287h1v1h-1zM499 287h4v1h-4zM511 287h1v1h-1zM528 287h1v1h-1zM569 287h1v1h-1zM579 287h1v1h-1zM598 287h1v1h-1zM614 287h2v1h-2zM155 288h1v1h-1zM207 288h1v1h-1zM259 288h1v1h-1zM309 288h1v1h-1zM311 288h1v1h-1zM372 288h1v1h-1zM392 288h2v1h-2zM395 288h1v1h-1zM417 288h1v1h-1zM424 288h1v1h-1zM471 288h2v1h-2zM503 288h5v1h-5zM511 288h1v1h-1zM528 288h1v1h-1zM579 288h1v1h-1zM598 288h1v1h-1zM619 288h3v1h-3zM627 288h1v1h-1zM129 289h1v1h-1zM181 289h1v1h-1zM205 289h1v1h-1zM233 289h1v1h-1zM257 289h2v1h-2zM285 289h1v1h-1zM309 289h1v1h-1zM337 289h1v1h-1zM373 289h1v1h-1zM397 289h3v1h-3zM418 289h1v1h-1zM424 289h1v1h-1zM469 289h2v1h-2zM507 289h3v1h-3zM511 289h2v1h-2zM528 289h1v1h-1zM540 289h1v1h-1zM579 289h1v1h-1zM598 289h1v1h-1zM625 289h1v1h-1zM627 289h1v1h-1zM129 290h1v1h-1zM151 290h1v1h-1zM181 290h1v1h-1zM203 290h2v1h-2zM233 290h1v1h-1zM285 290h1v1h-1zM307 290h1v1h-1zM309 290h1v1h-1zM337 290h1v1h-1zM366 290h1v1h-1zM373 290h1v1h-1zM418 290h1v1h-1zM424 290h1v1h-1zM453 290h1v1h-1zM468 290h1v1h-1zM510 290h4v1h-4zM528 290h1v1h-1zM540 290h1v1h-1zM580 290h1v1h-1zM626 290h2v1h-2zM129 291h1v1h-1zM149 291h2v1h-2zM181 291h1v1h-1zM233 291h1v1h-1zM253 291h1v1h-1zM285 291h1v1h-1zM305 291h2v1h-2zM309 291h1v1h-1zM330 291h1v1h-1zM336 291h3v1h-3zM366 291h1v1h-1zM373 291h1v1h-1zM403 291h3v1h-3zM419 291h1v1h-1zM453 291h1v1h-1zM466 291h2v1h-2zM482 291h1v1h-1zM514 291h6v1h-6zM528 291h1v1h-1zM540 291h1v1h-1zM569 291h1v1h-1zM580 291h1v1h-1zM155 292h1v1h-1zM207 292h1v1h-1zM252 292h1v1h-1zM259 292h1v1h-1zM309 292h1v1h-1zM311 292h1v1h-1zM329 292h2v1h-2zM335 292h1v1h-1zM339 292h1v1h-1zM366 292h1v1h-1zM373 292h1v1h-1zM395 292h1v1h-1zM409 292h2v1h-2zM420 292h1v1h-1zM453 292h1v1h-1zM464 292h2v1h-2zM482 292h1v1h-1zM518 292h4v1h-4zM523 292h1v1h-1zM529 292h1v1h-1zM569 292h1v1h-1zM580 292h1v1h-1zM155 293h1v1h-1zM198 293h2v1h-2zM207 293h1v1h-1zM251 293h1v1h-1zM259 293h1v1h-1zM308 293h1v1h-1zM311 293h1v1h-1zM328 293h1v1h-1zM330 293h1v1h-1zM335 293h1v1h-1zM339 293h1v1h-1zM374 293h1v1h-1zM395 293h1v1h-1zM411 293h1v1h-1zM420 293h1v1h-1zM463 293h1v1h-1zM482 293h1v1h-1zM511 293h1v1h-1zM522 293h4v1h-4zM529 293h1v1h-1zM569 293h1v1h-1zM580 293h1v1h-1zM598 293h1v1h-1zM144 294h2v1h-2zM155 294h1v1h-1zM197 294h1v1h-1zM207 294h1v1h-1zM259 294h1v1h-1zM300 294h2v1h-2zM308 294h1v1h-1zM311 294h1v1h-1zM330 294h1v1h-1zM335 294h1v1h-1zM339 294h1v1h-1zM374 294h1v1h-1zM395 294h1v1h-1zM415 294h3v1h-3zM421 294h1v1h-1zM424 294h1v1h-1zM461 294h2v1h-2zM511 294h1v1h-1zM525 294h6v1h-6zM580 294h1v1h-1zM598 294h1v1h-1zM627 294h1v1h-1zM129 295h1v1h-1zM143 295h1v1h-1zM181 295h1v1h-1zM233 295h1v1h-1zM246 295h2v1h-2zM285 295h1v1h-1zM299 295h1v1h-1zM308 295h1v1h-1zM330 295h1v1h-1zM335 295h1v1h-1zM337 295h1v1h-1zM339 295h1v1h-1zM374 295h1v1h-1zM421 295h2v1h-2zM424 295h1v1h-1zM459 295h2v1h-2zM511 295h1v1h-1zM529 295h4v1h-4zM540 295h1v1h-1zM580 295h1v1h-1zM598 295h1v1h-1zM627 295h1v1h-1zM129 296h1v1h-1zM181 296h1v1h-1zM193 296h1v1h-1zM233 296h1v1h-1zM245 296h1v1h-1zM285 296h1v1h-1zM308 296h1v1h-1zM323 296h3v1h-3zM330 296h1v1h-1zM335 296h1v1h-1zM337 296h1v1h-1zM339 296h1v1h-1zM366 296h1v1h-1zM375 296h1v1h-1zM422 296h3v1h-3zM453 296h1v1h-1zM457 296h2v1h-2zM529 296h1v1h-1zM533 296h5v1h-5zM540 296h1v1h-1zM580 296h1v1h-1zM627 296h1v1h-1zM129 297h1v1h-1zM139 297h1v1h-1zM181 297h1v1h-1zM191 297h2v1h-2zM233 297h1v1h-1zM285 297h1v1h-1zM295 297h1v1h-1zM308 297h1v1h-1zM330 297h1v1h-1zM335 297h1v1h-1zM337 297h1v1h-1zM339 297h1v1h-1zM366 297h1v1h-1zM375 297h1v1h-1zM423 297h1v1h-1zM427 297h3v1h-3zM453 297h1v1h-1zM456 297h1v1h-1zM482 297h1v1h-1zM530 297h1v1h-1zM536 297h7v1h-7zM569 297h1v1h-1zM581 297h1v1h-1zM137 298h2v1h-2zM155 298h1v1h-1zM207 298h1v1h-1zM241 298h1v1h-1zM259 298h1v1h-1zM293 298h2v1h-2zM308 298h1v1h-1zM311 298h1v1h-1zM330 298h1v1h-1zM336 298h3v1h-3zM366 298h1v1h-1zM375 298h1v1h-1zM395 298h1v1h-1zM423 298h1v1h-1zM433 298h1v1h-1zM453 298h3v1h-3zM482 298h1v1h-1zM530 298h1v1h-1zM540 298h4v1h-4zM569 298h1v1h-1zM581 298h1v1h-1zM155 299h1v1h-1zM207 299h1v1h-1zM240 299h1v1h-1zM259 299h1v1h-1zM308 299h1v1h-1zM311 299h1v1h-1zM376 299h1v1h-1zM395 299h1v1h-1zM424 299h1v1h-1zM434 299h2v1h-2zM452 299h2v1h-2zM482 299h1v1h-1zM511 299h1v1h-1zM530 299h1v1h-1zM544 299h6v1h-6zM569 299h1v1h-1zM581 299h1v1h-1zM598 299h1v1h-1zM155 300h1v1h-1zM186 300h2v1h-2zM207 300h1v1h-1zM239 300h1v1h-1zM259 300h1v1h-1zM308 300h1v1h-1zM311 300h1v1h-1zM376 300h1v1h-1zM395 300h1v1h-1zM424 300h2v1h-2zM439 300h2v1h-2zM450 300h2v1h-2zM511 300h1v1h-1zM530 300h1v1h-1zM548 300h3v1h-3zM553 300h1v1h-1zM581 300h1v1h-1zM598 300h1v1h-1zM627 300h1v1h-1zM129 301h1v1h-1zM132 301h2v1h-2zM181 301h1v1h-1zM185 301h1v1h-1zM233 301h1v1h-1zM285 301h1v1h-1zM288 301h2v1h-2zM308 301h1v1h-1zM337 301h1v1h-1zM376 301h1v1h-1zM424 301h2v1h-2zM441 301h1v1h-1zM449 301h1v1h-1zM511 301h1v1h-1zM530 301h1v1h-1zM540 301h1v1h-1zM551 301h5v1h-5zM581 301h1v1h-1zM598 301h1v1h-1zM627 301h1v1h-1zM129 302h1v1h-1zM131 302h1v1h-1zM181 302h1v1h-1zM233 302h3v1h-3zM285 302h1v1h-1zM287 302h1v1h-1zM308 302h1v1h-1zM337 302h1v1h-1zM366 302h1v1h-1zM377 302h1v1h-1zM424 302h1v1h-1zM426 302h1v1h-1zM445 302h4v1h-4zM453 302h1v1h-1zM530 302h1v1h-1zM540 302h1v1h-1zM555 302h7v1h-7zM581 302h1v1h-1zM627 302h1v1h-1zM129 303h1v1h-1zM181 303h1v1h-1zM233 303h1v1h-1zM285 303h1v1h-1zM308 303h1v1h-1zM337 303h2v1h-2zM366 303h1v1h-1zM377 303h1v1h-1zM426 303h1v1h-1zM445 303h2v1h-2zM451 303h1v1h-1zM453 303h1v1h-1zM482 303h1v1h-1zM530 303h1v1h-1zM540 303h1v1h-1zM559 303h3v1h-3zM569 303h1v1h-1zM581 303h1v1h-1zM155 304h1v1h-1zM179 304h2v1h-2zM207 304h1v1h-1zM259 304h1v1h-1zM283 304h1v1h-1zM308 304h1v1h-1zM311 304h1v1h-1zM335 304h2v1h-2zM339 304h1v1h-1zM366 304h1v1h-1zM377 304h1v1h-1zM395 304h1v1h-1zM427 304h1v1h-1zM443 304h2v1h-2zM452 304h2v1h-2zM482 304h1v1h-1zM530 304h1v1h-1zM562 304h6v1h-6zM569 304h1v1h-1zM581 304h1v1h-1zM155 305h1v1h-1zM207 305h1v1h-1zM229 305h1v1h-1zM259 305h1v1h-1zM281 305h2v1h-2zM308 305h1v1h-1zM311 305h1v1h-1zM343 305h3v1h-3zM378 305h1v1h-1zM395 305h1v1h-1zM427 305h1v1h-1zM442 305h1v1h-1zM457 305h3v1h-3zM482 305h1v1h-1zM511 305h1v1h-1zM531 305h1v1h-1zM566 305h4v1h-4zM571 305h2v1h-2zM581 305h1v1h-1zM598 305h1v1h-1zM155 306h1v1h-1zM175 306h1v1h-1zM207 306h1v1h-1zM227 306h2v1h-2zM259 306h1v1h-1zM308 306h1v1h-1zM311 306h1v1h-1zM331 306h1v1h-1zM349 306h2v1h-2zM378 306h1v1h-1zM395 306h1v1h-1zM424 306h1v1h-1zM428 306h1v1h-1zM440 306h2v1h-2zM463 306h1v1h-1zM511 306h1v1h-1zM531 306h1v1h-1zM570 306h4v1h-4zM581 306h1v1h-1zM598 306h1v1h-1zM627 306h1v1h-1zM129 307h1v1h-1zM174 307h1v1h-1zM181 307h1v1h-1zM233 307h1v1h-1zM285 307h1v1h-1zM309 307h1v1h-1zM330 307h1v1h-1zM337 307h1v1h-1zM351 307h1v1h-1zM379 307h1v1h-1zM424 307h1v1h-1zM428 307h1v1h-1zM438 307h2v1h-2zM464 307h2v1h-2zM511 307h1v1h-1zM531 307h1v1h-1zM540 307h1v1h-1zM574 307h6v1h-6zM581 307h1v1h-1zM598 307h1v1h-1zM627 307h1v1h-1zM129 308h1v1h-1zM173 308h1v1h-1zM181 308h1v1h-1zM233 308h1v1h-1zM276 308h2v1h-2zM285 308h1v1h-1zM309 308h1v1h-1zM329 308h1v1h-1zM337 308h1v1h-1zM355 308h3v1h-3zM366 308h1v1h-1zM379 308h1v1h-1zM424 308h1v1h-1zM429 308h1v1h-1zM437 308h1v1h-1zM453 308h1v1h-1zM469 308h2v1h-2zM531 308h1v1h-1zM540 308h1v1h-1zM577 308h5v1h-5zM583 308h1v1h-1zM627 308h1v1h-1zM129 309h1v1h-1zM181 309h1v1h-1zM222 309h2v1h-2zM233 309h1v1h-1zM275 309h1v1h-1zM285 309h1v1h-1zM309 309h1v1h-1zM337 309h1v1h-1zM361 309h1v1h-1zM366 309h1v1h-1zM379 309h1v1h-1zM429 309h1v1h-1zM435 309h2v1h-2zM453 309h1v1h-1zM471 309h1v1h-1zM482 309h1v1h-1zM531 309h1v1h-1zM540 309h1v1h-1zM569 309h1v1h-1zM581 309h5v1h-5zM155 310h1v1h-1zM168 310h2v1h-2zM207 310h1v1h-1zM221 310h1v1h-1zM259 310h1v1h-1zM275 310h13v1h-13zM309 310h1v1h-1zM311 310h1v1h-1zM324 310h2v1h-2zM362 310h2v1h-2zM366 310h1v1h-1zM380 310h1v1h-1zM395 310h1v1h-1zM429 310h1v1h-1zM433 310h2v1h-2zM453 310h1v1h-1zM475 310h3v1h-3zM482 310h1v1h-1zM531 310h1v1h-1zM569 310h1v1h-1zM581 310h1v1h-1zM585 310h3v1h-3zM589 310h3v1h-3zM155 311h1v1h-1zM167 311h1v1h-1zM207 311h1v1h-1zM259 311h1v1h-1zM271 311h4v1h-4zM288 311h5v1h-5zM309 311h1v1h-1zM311 311h1v1h-1zM323 311h1v1h-1zM367 311h3v1h-3zM380 311h1v1h-1zM395 311h1v1h-1zM430 311h3v1h-3zM481 311h2v1h-2zM511 311h1v1h-1zM531 311h1v1h-1zM569 311h1v1h-1zM581 311h1v1h-1zM588 311h4v1h-4zM598 311h1v1h-1zM155 312h1v1h-1zM207 312h1v1h-1zM217 312h1v1h-1zM259 312h1v1h-1zM269 312h2v1h-2zM293 312h3v1h-3zM309 312h1v1h-1zM311 312h1v1h-1zM381 312h1v1h-1zM395 312h1v1h-1zM424 312h1v1h-1zM430 312h1v1h-1zM483 312h1v1h-1zM511 312h1v1h-1zM531 312h1v1h-1zM581 312h1v1h-1zM592 312h7v1h-7zM627 312h1v1h-1zM129 313h1v1h-1zM163 313h1v1h-1zM181 313h1v1h-1zM215 313h2v1h-2zM233 313h1v1h-1zM267 313h2v1h-2zM285 313h1v1h-1zM296 313h2v1h-2zM309 313h1v1h-1zM319 313h1v1h-1zM337 313h1v1h-1zM373 313h3v1h-3zM381 313h1v1h-1zM424 313h1v1h-1zM428 313h2v1h-2zM431 313h1v1h-1zM487 313h3v1h-3zM511 313h1v1h-1zM531 313h1v1h-1zM540 313h1v1h-1zM581 313h1v1h-1zM596 313h4v1h-4zM601 313h2v1h-2zM627 313h1v1h-1zM129 314h1v1h-1zM162 314h1v1h-1zM181 314h1v1h-1zM233 314h1v1h-1zM265 314h2v1h-2zM285 314h1v1h-1zM298 314h3v1h-3zM310 314h1v1h-1zM318 314h1v1h-1zM337 314h1v1h-1zM366 314h1v1h-1zM379 314h2v1h-2zM382 314h1v1h-1zM424 314h1v1h-1zM426 314h2v1h-2zM431 314h1v1h-1zM453 314h1v1h-1zM493 314h1v1h-1zM531 314h1v1h-1zM540 314h1v1h-1zM581 314h1v1h-1zM600 314h4v1h-4zM627 314h1v1h-1zM129 315h1v1h-1zM161 315h1v1h-1zM181 315h1v1h-1zM233 315h1v1h-1zM264 315h2v1h-2zM285 315h1v1h-1zM301 315h2v1h-2zM310 315h1v1h-1zM317 315h1v1h-1zM337 315h1v1h-1zM366 315h1v1h-1zM381 315h2v1h-2zM424 315h2v1h-2zM431 315h1v1h-1zM453 315h1v1h-1zM482 315h1v1h-1zM494 315h2v1h-2zM531 315h1v1h-1zM540 315h1v1h-1zM569 315h1v1h-1zM581 315h1v1h-1zM603 315h7v1h-7zM629 315h1v1h-1zM633 315h1v1h-1zM155 316h1v1h-1zM207 316h1v1h-1zM210 316h2v1h-2zM259 316h1v1h-1zM263 316h1v1h-1zM303 316h2v1h-2zM310 316h2v1h-2zM366 316h1v1h-1zM383 316h1v1h-1zM385 316h3v1h-3zM395 316h1v1h-1zM423 316h1v1h-1zM432 316h1v1h-1zM453 316h1v1h-1zM482 316h1v1h-1zM499 316h2v1h-2zM531 316h1v1h-1zM569 316h1v1h-1zM581 316h1v1h-1zM607 316h4v1h-4zM613 316h1v1h-1zM630 316h1v1h-1zM632 316h1v1h-1zM155 317h3v1h-3zM207 317h1v1h-1zM209 317h1v1h-1zM259 317h1v1h-1zM262 317h1v1h-1zM305 317h1v1h-1zM310 317h4v1h-4zM383 317h1v1h-1zM391 317h1v1h-1zM395 317h1v1h-1zM421 317h2v1h-2zM432 317h1v1h-1zM482 317h1v1h-1zM501 317h1v1h-1zM511 317h1v1h-1zM531 317h1v1h-1zM569 317h1v1h-1zM581 317h1v1h-1zM598 317h1v1h-1zM611 317h5v1h-5zM631 317h1v1h-1zM155 318h1v1h-1zM207 318h1v1h-1zM259 318h1v1h-1zM261 318h1v1h-1zM306 318h2v1h-2zM310 318h2v1h-2zM384 318h1v1h-1zM392 318h2v1h-2zM395 318h1v1h-1zM419 318h2v1h-2zM424 318h1v1h-1zM433 318h1v1h-1zM505 318h3v1h-3zM511 318h1v1h-1zM531 318h1v1h-1zM581 318h1v1h-1zM598 318h1v1h-1zM614 318h4v1h-4zM619 318h3v1h-3zM627 318h1v1h-1zM631 318h1v1h-1zM129 319h1v1h-1zM181 319h1v1h-1zM205 319h1v1h-1zM233 319h1v1h-1zM257 319h2v1h-2zM260 319h1v1h-1zM285 319h1v1h-1zM308 319h2v1h-2zM311 319h1v1h-1zM337 319h1v1h-1zM384 319h1v1h-1zM397 319h3v1h-3zM417 319h2v1h-2zM424 319h1v1h-1zM433 319h1v1h-1zM511 319h2v1h-2zM531 319h1v1h-1zM540 319h1v1h-1zM581 319h1v1h-1zM598 319h1v1h-1zM618 319h4v1h-4zM625 319h1v1h-1zM627 319h1v1h-1zM630 319h1v1h-1zM632 319h1v1h-1zM129 320h1v1h-1zM151 320h1v1h-1zM181 320h1v1h-1zM203 320h2v1h-2zM233 320h1v1h-1zM259 320h1v1h-1zM285 320h1v1h-1zM307 320h1v1h-1zM310 320h2v1h-2zM337 320h1v1h-1zM366 320h1v1h-1zM385 320h1v1h-1zM416 320h1v1h-1zM424 320h1v1h-1zM433 320h1v1h-1zM453 320h1v1h-1zM513 320h1v1h-1zM531 320h1v1h-1zM540 320h1v1h-1zM581 320h1v1h-1zM622 320h6v1h-6zM629 320h1v1h-1zM633 320h1v1h-1zM129 321h1v1h-1zM149 321h2v1h-2zM181 321h1v1h-1zM233 321h1v1h-1zM253 321h1v1h-1zM258 321h1v1h-1zM285 321h1v1h-1zM305 321h2v1h-2zM311 321h1v1h-1zM330 321h1v1h-1zM336 321h4v1h-4zM366 321h1v1h-1zM385 321h1v1h-1zM403 321h3v1h-3zM414 321h2v1h-2zM434 321h1v1h-1zM453 321h1v1h-1zM482 321h1v1h-1zM517 321h3v1h-3zM531 321h1v1h-1zM540 321h1v1h-1zM569 321h1v1h-1zM581 321h1v1h-1zM626 321h1v1h-1zM628 321h1v1h-1zM155 322h1v1h-1zM207 322h1v1h-1zM252 322h1v1h-1zM257 322h1v1h-1zM259 322h1v1h-1zM311 322h3v1h-3zM329 322h2v1h-2zM336 322h1v1h-1zM366 322h1v1h-1zM386 322h1v1h-1zM395 322h1v1h-1zM409 322h2v1h-2zM412 322h2v1h-2zM434 322h1v1h-1zM453 322h1v1h-1zM482 322h1v1h-1zM523 322h1v1h-1zM531 322h1v1h-1zM569 322h1v1h-1zM581 322h1v1h-1zM155 323h1v1h-1zM198 323h2v1h-2zM207 323h1v1h-1zM251 323h1v1h-1zM256 323h1v1h-1zM259 323h1v1h-1zM311 323h2v1h-2zM314 323h1v1h-1zM328 323h1v1h-1zM330 323h1v1h-1zM335 323h1v1h-1zM386 323h1v1h-1zM395 323h1v1h-1zM411 323h1v1h-1zM434 323h1v1h-1zM482 323h1v1h-1zM511 323h1v1h-1zM524 323h2v1h-2zM531 323h1v1h-1zM569 323h1v1h-1zM581 323h1v1h-1zM598 323h1v1h-1zM144 324h2v1h-2zM155 324h1v1h-1zM197 324h1v1h-1zM207 324h1v1h-1zM256 324h1v1h-1zM259 324h1v1h-1zM300 324h2v1h-2zM311 324h2v1h-2zM315 324h1v1h-1zM330 324h1v1h-1zM335 324h4v1h-4zM387 324h1v1h-1zM395 324h1v1h-1zM409 324h2v1h-2zM415 324h3v1h-3zM424 324h1v1h-1zM435 324h1v1h-1zM511 324h1v1h-1zM529 324h3v1h-3zM581 324h1v1h-1zM598 324h1v1h-1zM627 324h1v1h-1zM129 325h1v1h-1zM143 325h1v1h-1zM181 325h1v1h-1zM233 325h1v1h-1zM246 325h2v1h-2zM255 325h1v1h-1zM285 325h1v1h-1zM299 325h1v1h-1zM312 325h1v1h-1zM316 325h1v1h-1zM330 325h1v1h-1zM337 325h1v1h-1zM339 325h1v1h-1zM387 325h1v1h-1zM407 325h2v1h-2zM421 325h1v1h-1zM424 325h1v1h-1zM435 325h1v1h-1zM511 325h1v1h-1zM531 325h1v1h-1zM540 325h1v1h-1zM581 325h1v1h-1zM598 325h1v1h-1zM627 325h1v1h-1zM129 326h1v1h-1zM181 326h1v1h-1zM193 326h1v1h-1zM233 326h1v1h-1zM245 326h1v1h-1zM255 326h1v1h-1zM285 326h1v1h-1zM313 326h1v1h-1zM317 326h1v1h-1zM323 326h3v1h-3zM330 326h1v1h-1zM337 326h1v1h-1zM339 326h1v1h-1zM366 326h1v1h-1zM388 326h1v1h-1zM405 326h2v1h-2zM422 326h3v1h-3zM435 326h1v1h-1zM453 326h1v1h-1zM531 326h1v1h-1zM535 326h3v1h-3zM540 326h1v1h-1zM580 326h1v1h-1zM627 326h1v1h-1zM129 327h1v1h-1zM139 327h1v1h-1zM181 327h1v1h-1zM191 327h2v1h-2zM233 327h1v1h-1zM254 327h1v1h-1zM285 327h1v1h-1zM295 327h1v1h-1zM313 327h1v1h-1zM318 327h1v1h-1zM330 327h1v1h-1zM335 327h1v1h-1zM337 327h1v1h-1zM339 327h1v1h-1zM366 327h1v1h-1zM389 327h1v1h-1zM404 327h1v1h-1zM427 327h3v1h-3zM435 327h1v1h-1zM453 327h1v1h-1zM482 327h1v1h-1zM531 327h1v1h-1zM540 327h3v1h-3zM569 327h1v1h-1zM580 327h1v1h-1zM137 328h2v1h-2zM155 328h1v1h-1zM207 328h1v1h-1zM241 328h1v1h-1zM254 328h1v1h-1zM259 328h1v1h-1zM293 328h2v1h-2zM311 328h1v1h-1zM313 328h1v1h-1zM319 328h1v1h-1zM330 328h1v1h-1zM336 328h3v1h-3zM366 328h1v1h-1zM389 328h1v1h-1zM395 328h1v1h-1zM402 328h2v1h-2zM433 328h1v1h-1zM436 328h1v1h-1zM453 328h1v1h-1zM482 328h1v1h-1zM531 328h1v1h-1zM543 328h1v1h-1zM569 328h1v1h-1zM580 328h1v1h-1zM155 329h1v1h-1zM207 329h1v1h-1zM240 329h1v1h-1zM253 329h1v1h-1zM259 329h1v1h-1zM311 329h1v1h-1zM314 329h1v1h-1zM320 329h1v1h-1zM390 329h1v1h-1zM395 329h1v1h-1zM400 329h2v1h-2zM434 329h3v1h-3zM482 329h1v1h-1zM511 329h1v1h-1zM531 329h1v1h-1zM547 329h3v1h-3zM569 329h1v1h-1zM580 329h1v1h-1zM598 329h1v1h-1zM155 330h1v1h-1zM186 330h2v1h-2zM207 330h1v1h-1zM239 330h1v1h-1zM253 330h1v1h-1zM259 330h1v1h-1zM311 330h1v1h-1zM314 330h1v1h-1zM321 330h1v1h-1zM390 330h1v1h-1zM395 330h1v1h-1zM398 330h2v1h-2zM424 330h1v1h-1zM436 330h1v1h-1zM439 330h2v1h-2zM511 330h1v1h-1zM531 330h1v1h-1zM553 330h1v1h-1zM580 330h1v1h-1zM598 330h1v1h-1zM627 330h1v1h-1zM129 331h1v1h-1zM132 331h2v1h-2zM181 331h1v1h-1zM185 331h1v1h-1zM233 331h1v1h-1zM252 331h1v1h-1zM285 331h1v1h-1zM288 331h2v1h-2zM314 331h1v1h-1zM322 331h1v1h-1zM337 331h1v1h-1zM391 331h1v1h-1zM397 331h1v1h-1zM424 331h1v1h-1zM436 331h1v1h-1zM441 331h1v1h-1zM511 331h1v1h-1zM531 331h1v1h-1zM540 331h1v1h-1zM554 331h2v1h-2zM580 331h1v1h-1zM598 331h1v1h-1zM627 331h1v1h-1zM129 332h1v1h-1zM131 332h1v1h-1zM181 332h1v1h-1zM233 332h3v1h-3zM252 332h1v1h-1zM258 332h11v1h-11zM285 332h1v1h-1zM287 332h1v1h-1zM315 332h1v1h-1zM323 332h1v1h-1zM337 332h1v1h-1zM366 332h1v1h-1zM392 332h1v1h-1zM395 332h2v1h-2zM424 332h1v1h-1zM437 332h1v1h-1zM445 332h3v1h-3zM453 332h1v1h-1zM530 332h1v1h-1zM540 332h1v1h-1zM559 332h3v1h-3zM579 332h1v1h-1zM627 332h1v1h-1zM129 333h1v1h-1zM181 333h1v1h-1zM233 333h1v1h-1zM252 333h6v1h-6zM269 333h6v1h-6zM285 333h1v1h-1zM315 333h1v1h-1zM324 333h1v1h-1zM337 333h2v1h-2zM366 333h1v1h-1zM392 333h3v1h-3zM437 333h1v1h-1zM451 333h1v1h-1zM453 333h1v1h-1zM482 333h1v1h-1zM530 333h1v1h-1zM540 333h1v1h-1zM569 333h1v1h-1zM579 333h1v1h-1zM155 334h1v1h-1zM179 334h2v1h-2zM207 334h1v1h-1zM249 334h3v1h-3zM259 334h1v1h-1zM275 334h4v1h-4zM283 334h1v1h-1zM311 334h1v1h-1zM315 334h1v1h-1zM325 334h1v1h-1zM335 334h2v1h-2zM339 334h1v1h-1zM366 334h1v1h-1zM391 334h3v1h-3zM395 334h1v1h-1zM437 334h1v1h-1zM452 334h2v1h-2zM482 334h1v1h-1zM530 334h1v1h-1zM565 334h3v1h-3zM569 334h1v1h-1zM579 334h1v1h-1zM155 335h1v1h-1zM207 335h1v1h-1zM229 335h1v1h-1zM246 335h3v1h-3zM251 335h1v1h-1zM259 335h1v1h-1zM279 335h4v1h-4zM311 335h1v1h-1zM316 335h1v1h-1zM326 335h1v1h-1zM343 335h3v1h-3zM390 335h1v1h-1zM394 335h2v1h-2zM437 335h1v1h-1zM457 335h3v1h-3zM482 335h1v1h-1zM511 335h1v1h-1zM530 335h1v1h-1zM569 335h1v1h-1zM571 335h2v1h-2zM579 335h1v1h-1zM598 335h1v1h-1zM155 336h1v1h-1zM175 336h1v1h-1zM207 336h1v1h-1zM227 336h2v1h-2zM244 336h2v1h-2zM251 336h1v1h-1zM259 336h1v1h-1zM282 336h3v1h-3zM311 336h1v1h-1zM316 336h1v1h-1zM327 336h1v1h-1zM331 336h1v1h-1zM349 336h2v1h-2zM388 336h2v1h-2zM394 336h2v1h-2zM424 336h1v1h-1zM437 336h1v1h-1zM463 336h1v1h-1zM511 336h1v1h-1zM530 336h1v1h-1zM573 336h1v1h-1zM578 336h1v1h-1zM598 336h1v1h-1zM627 336h1v1h-1zM129 337h1v1h-1zM174 337h1v1h-1zM181 337h1v1h-1zM233 337h1v1h-1zM242 337h2v1h-2zM251 337h1v1h-1zM285 337h3v1h-3zM317 337h1v1h-1zM328 337h1v1h-1zM330 337h1v1h-1zM337 337h1v1h-1zM351 337h1v1h-1zM386 337h2v1h-2zM395 337h1v1h-1zM424 337h1v1h-1zM438 337h1v1h-1zM464 337h2v1h-2zM511 337h1v1h-1zM530 337h1v1h-1zM540 337h1v1h-1zM577 337h3v1h-3zM598 337h1v1h-1zM627 337h1v1h-1zM129 338h1v1h-1zM173 338h1v1h-1zM181 338h1v1h-1zM233 338h1v1h-1zM240 338h2v1h-2zM250 338h1v1h-1zM276 338h2v1h-2zM285 338h1v1h-1zM288 338h2v1h-2zM317 338h1v1h-1zM329 338h1v1h-1zM337 338h1v1h-1zM355 338h3v1h-3zM366 338h1v1h-1zM385 338h1v1h-1zM396 338h1v1h-1zM424 338h1v1h-1zM438 338h1v1h-1zM453 338h1v1h-1zM469 338h2v1h-2zM530 338h1v1h-1zM540 338h1v1h-1zM578 338h1v1h-1zM583 338h1v1h-1zM627 338h1v1h-1zM129 339h1v1h-1zM181 339h1v1h-1zM222 339h2v1h-2zM233 339h1v1h-1zM238 339h2v1h-2zM250 339h1v1h-1zM275 339h1v1h-1zM285 339h1v1h-1zM290 339h2v1h-2zM318 339h1v1h-1zM330 339h1v1h-1zM337 339h1v1h-1zM361 339h1v1h-1zM366 339h1v1h-1zM383 339h2v1h-2zM396 339h1v1h-1zM438 339h1v1h-1zM453 339h1v1h-1zM471 339h1v1h-1zM482 339h1v1h-1zM529 339h1v1h-1zM540 339h1v1h-1zM569 339h1v1h-1zM578 339h1v1h-1zM584 339h2v1h-2zM155 340h1v1h-1zM168 340h2v1h-2zM207 340h1v1h-1zM221 340h1v1h-1zM237 340h1v1h-1zM250 340h1v1h-1zM259 340h1v1h-1zM292 340h2v1h-2zM311 340h1v1h-1zM318 340h1v1h-1zM324 340h2v1h-2zM331 340h1v1h-1zM362 340h2v1h-2zM366 340h1v1h-1zM381 340h2v1h-2zM395 340h1v1h-1zM397 340h1v1h-1zM438 340h1v1h-1zM453 340h1v1h-1zM475 340h3v1h-3zM482 340h1v1h-1zM529 340h1v1h-1zM569 340h1v1h-1zM577 340h1v1h-1zM589 340h3v1h-3zM155 341h1v1h-1zM167 341h1v1h-1zM207 341h1v1h-1zM236 341h1v1h-1zM250 341h1v1h-1zM259 341h1v1h-1zM271 341h1v1h-1zM294 341h1v1h-1zM311 341h1v1h-1zM319 341h1v1h-1zM323 341h1v1h-1zM331 341h1v1h-1zM367 341h3v1h-3zM379 341h2v1h-2zM395 341h1v1h-1zM398 341h1v1h-1zM438 341h1v1h-1zM481 341h2v1h-2zM511 341h1v1h-1zM529 341h1v1h-1zM569 341h1v1h-1zM577 341h1v1h-1zM598 341h1v1h-1zM155 342h1v1h-1zM207 342h1v1h-1zM217 342h1v1h-1zM235 342h1v1h-1zM250 342h1v1h-1zM259 342h1v1h-1zM269 342h2v1h-2zM295 342h2v1h-2zM311 342h1v1h-1zM319 342h1v1h-1zM332 342h1v1h-1zM378 342h1v1h-1zM395 342h1v1h-1zM399 342h1v1h-1zM424 342h1v1h-1zM438 342h1v1h-1zM483 342h1v1h-1zM511 342h1v1h-1zM529 342h1v1h-1zM577 342h1v1h-1zM595 342h4v1h-4zM627 342h1v1h-1zM129 343h1v1h-1zM163 343h1v1h-1zM181 343h1v1h-1zM215 343h2v1h-2zM233 343h2v1h-2zM250 343h1v1h-1zM285 343h1v1h-1zM297 343h2v1h-2zM319 343h2v1h-2zM333 343h1v1h-1zM337 343h1v1h-1zM373 343h5v1h-5zM399 343h1v1h-1zM424 343h1v1h-1zM439 343h1v1h-1zM487 343h3v1h-3zM511 343h1v1h-1zM529 343h1v1h-1zM540 343h1v1h-1zM576 343h1v1h-1zM598 343h1v1h-1zM601 343h2v1h-2zM627 343h1v1h-1zM129 344h1v1h-1zM162 344h1v1h-1zM181 344h1v1h-1zM233 344h1v1h-1zM250 344h1v1h-1zM285 344h1v1h-1zM299 344h1v1h-1zM318 344h1v1h-1zM320 344h1v1h-1zM333 344h1v1h-1zM337 344h1v1h-1zM366 344h1v1h-1zM374 344h2v1h-2zM379 344h2v1h-2zM400 344h1v1h-1zM424 344h1v1h-1zM439 344h1v1h-1zM453 344h1v1h-1zM493 344h1v1h-1zM528 344h1v1h-1zM540 344h1v1h-1zM576 344h1v1h-1zM603 344h1v1h-1zM627 344h1v1h-1zM129 345h1v1h-1zM161 345h1v1h-1zM181 345h1v1h-1zM232 345h2v1h-2zM250 345h1v1h-1zM264 345h2v1h-2zM285 345h1v1h-1zM300 345h2v1h-2zM317 345h1v1h-1zM321 345h1v1h-1zM334 345h1v1h-1zM337 345h1v1h-1zM366 345h1v1h-1zM372 345h2v1h-2zM381 345h1v1h-1zM401 345h1v1h-1zM439 345h1v1h-1zM453 345h1v1h-1zM482 345h1v1h-1zM494 345h2v1h-2zM528 345h1v1h-1zM540 345h1v1h-1zM569 345h1v1h-1zM576 345h1v1h-1zM607 345h3v1h-3zM155 346h1v1h-1zM207 346h1v1h-1zM210 346h2v1h-2zM231 346h1v1h-1zM250 346h1v1h-1zM259 346h1v1h-1zM263 346h1v1h-1zM302 346h1v1h-1zM311 346h1v1h-1zM321 346h1v1h-1zM334 346h1v1h-1zM366 346h1v1h-1zM371 346h1v1h-1zM385 346h3v1h-3zM395 346h1v1h-1zM402 346h1v1h-1zM439 346h1v1h-1zM453 346h1v1h-1zM482 346h1v1h-1zM499 346h2v1h-2zM528 346h1v1h-1zM569 346h1v1h-1zM575 346h1v1h-1zM613 346h1v1h-1zM155 347h3v1h-3zM207 347h1v1h-1zM209 347h1v1h-1zM230 347h1v1h-1zM250 347h1v1h-1zM259 347h1v1h-1zM303 347h1v1h-1zM311 347h3v1h-3zM322 347h1v1h-1zM335 347h1v1h-1zM369 347h2v1h-2zM391 347h1v1h-1zM395 347h1v1h-1zM403 347h1v1h-1zM439 347h1v1h-1zM482 347h1v1h-1zM501 347h1v1h-1zM511 347h1v1h-1zM528 347h1v1h-1zM569 347h1v1h-1zM575 347h1v1h-1zM598 347h1v1h-1zM614 347h2v1h-2zM155 348h1v1h-1zM207 348h1v1h-1zM230 348h1v1h-1zM250 348h1v1h-1zM259 348h1v1h-1zM304 348h2v1h-2zM311 348h1v1h-1zM322 348h1v1h-1zM336 348h1v1h-1zM367 348h2v1h-2zM392 348h2v1h-2zM395 348h1v1h-1zM403 348h1v1h-1zM424 348h1v1h-1zM439 348h1v1h-1zM505 348h3v1h-3zM511 348h1v1h-1zM527 348h1v1h-1zM575 348h1v1h-1zM598 348h1v1h-1zM619 348h3v1h-3zM627 348h1v1h-1zM129 349h1v1h-1zM181 349h1v1h-1zM205 349h1v1h-1zM229 349h1v1h-1zM233 349h1v1h-1zM250 349h1v1h-1zM257 349h2v1h-2zM285 349h1v1h-1zM306 349h1v1h-1zM323 349h1v1h-1zM336 349h2v1h-2zM365 349h2v1h-2zM397 349h3v1h-3zM404 349h1v1h-1zM424 349h1v1h-1zM439 349h1v1h-1zM511 349h2v1h-2zM527 349h1v1h-1zM540 349h1v1h-1zM574 349h1v1h-1zM598 349h1v1h-1zM625 349h1v1h-1zM627 349h1v1h-1zM129 350h1v1h-1zM151 350h1v1h-1zM181 350h1v1h-1zM203 350h2v1h-2zM228 350h1v1h-1zM233 350h1v1h-1zM250 350h1v1h-1zM285 350h1v1h-1zM307 350h1v1h-1zM323 350h1v1h-1zM337 350h1v1h-1zM364 350h1v1h-1zM366 350h1v1h-1zM405 350h1v1h-1zM424 350h1v1h-1zM439 350h1v1h-1zM453 350h1v1h-1zM513 350h1v1h-1zM527 350h1v1h-1zM540 350h1v1h-1zM574 350h1v1h-1zM626 350h2v1h-2zM129 351h1v1h-1zM149 351h2v1h-2zM181 351h1v1h-1zM227 351h1v1h-1zM233 351h1v1h-1zM250 351h1v1h-1zM253 351h1v1h-1zM285 351h1v1h-1zM305 351h2v1h-2zM308 351h1v1h-1zM324 351h1v1h-1zM329 351h3v1h-3zM336 351h3v1h-3zM362 351h2v1h-2zM366 351h1v1h-1zM403 351h4v1h-4zM439 351h1v1h-1zM453 351h1v1h-1zM482 351h1v1h-1zM517 351h3v1h-3zM526 351h1v1h-1zM540 351h1v1h-1zM569 351h1v1h-1zM573 351h1v1h-1zM155 352h1v1h-1zM207 352h1v1h-1zM227 352h1v1h-1zM250 352h1v1h-1zM252 352h1v1h-1zM259 352h1v1h-1zM309 352h1v1h-1zM311 352h1v1h-1zM325 352h1v1h-1zM328 352h1v1h-1zM332 352h1v1h-1zM335 352h1v1h-1zM338 352h2v1h-2zM360 352h2v1h-2zM366 352h1v1h-1zM395 352h1v1h-1zM407 352h1v1h-1zM409 352h2v1h-2zM439 352h1v1h-1zM453 352h1v1h-1zM482 352h1v1h-1zM523 352h1v1h-1zM526 352h1v1h-1zM569 352h1v1h-1zM573 352h1v1h-1zM155 353h1v1h-1zM198 353h2v1h-2zM207 353h1v1h-1zM226 353h1v1h-1zM250 353h2v1h-2zM259 353h1v1h-1zM310 353h2v1h-2zM325 353h1v1h-1zM332 353h1v1h-1zM335 353h1v1h-1zM338 353h2v1h-2zM359 353h1v1h-1zM395 353h1v1h-1zM408 353h1v1h-1zM411 353h1v1h-1zM439 353h1v1h-1zM482 353h1v1h-1zM511 353h1v1h-1zM524 353h3v1h-3zM569 353h1v1h-1zM572 353h1v1h-1zM598 353h1v1h-1zM144 354h2v1h-2zM155 354h1v1h-1zM197 354h1v1h-1zM207 354h1v1h-1zM226 354h1v1h-1zM250 354h1v1h-1zM259 354h1v1h-1zM300 354h2v1h-2zM311 354h1v1h-1zM326 354h1v1h-1zM332 354h1v1h-1zM335 354h1v1h-1zM339 354h1v1h-1zM357 354h2v1h-2zM395 354h1v1h-1zM409 354h1v1h-1zM415 354h3v1h-3zM424 354h1v1h-1zM439 354h1v1h-1zM511 354h1v1h-1zM525 354h1v1h-1zM529 354h2v1h-2zM572 354h1v1h-1zM598 354h1v1h-1zM627 354h1v1h-1zM129 355h1v1h-1zM143 355h1v1h-1zM181 355h1v1h-1zM225 355h1v1h-1zM233 355h1v1h-1zM246 355h2v1h-2zM250 355h1v1h-1zM285 355h1v1h-1zM299 355h1v1h-1zM312 355h1v1h-1zM327 355h1v1h-1zM331 355h1v1h-1zM335 355h1v1h-1zM337 355h1v1h-1zM339 355h1v1h-1zM355 355h2v1h-2zM410 355h1v1h-1zM421 355h1v1h-1zM424 355h1v1h-1zM439 355h1v1h-1zM511 355h1v1h-1zM525 355h1v1h-1zM531 355h1v1h-1zM540 355h1v1h-1zM571 355h1v1h-1zM598 355h1v1h-1zM627 355h1v1h-1zM129 356h1v1h-1zM181 356h1v1h-1zM193 356h1v1h-1zM224 356h1v1h-1zM233 356h1v1h-1zM245 356h1v1h-1zM250 356h1v1h-1zM285 356h1v1h-1zM313 356h1v1h-1zM323 356h3v1h-3zM327 356h1v1h-1zM330 356h1v1h-1zM335 356h1v1h-1zM337 356h1v1h-1zM339 356h2v1h-2zM353 356h2v1h-2zM366 356h1v1h-1zM411 356h1v1h-1zM422 356h3v1h-3zM439 356h1v1h-1zM453 356h1v1h-1zM525 356h1v1h-1zM535 356h3v1h-3zM540 356h1v1h-1zM571 356h1v1h-1zM627 356h1v1h-1zM129 357h1v1h-1zM139 357h1v1h-1zM181 357h1v1h-1zM191 357h2v1h-2zM224 357h1v1h-1zM233 357h1v1h-1zM251 357h1v1h-1zM285 357h1v1h-1zM295 357h1v1h-1zM314 357h1v1h-1zM328 357h2v1h-2zM335 357h1v1h-1zM337 357h1v1h-1zM339 357h2v1h-2zM352 357h1v1h-1zM366 357h1v1h-1zM412 357h1v1h-1zM427 357h3v1h-3zM439 357h1v1h-1zM453 357h1v1h-1zM482 357h1v1h-1zM524 357h1v1h-1zM540 357h3v1h-3zM569 357h2v1h-2zM137 358h2v1h-2zM155 358h1v1h-1zM207 358h1v1h-1zM224 358h1v1h-1zM241 358h1v1h-1zM251 358h1v1h-1zM259 358h1v1h-1zM293 358h2v1h-2zM311 358h1v1h-1zM315 358h1v1h-1zM328 358h5v1h-5zM336 358h3v1h-3zM340 358h1v1h-1zM350 358h2v1h-2zM366 358h1v1h-1zM395 358h1v1h-1zM413 358h1v1h-1zM433 358h1v1h-1zM439 358h1v1h-1zM453 358h1v1h-1zM482 358h1v1h-1zM524 358h1v1h-1zM543 358h1v1h-1zM569 358h2v1h-2zM155 359h1v1h-1zM207 359h1v1h-1zM223 359h1v1h-1zM240 359h1v1h-1zM251 359h1v1h-1zM259 359h1v1h-1zM311 359h1v1h-1zM316 359h1v1h-1zM329 359h1v1h-1zM341 359h1v1h-1zM348 359h2v1h-2zM395 359h1v1h-1zM414 359h1v1h-1zM434 359h2v1h-2zM439 359h1v1h-1zM482 359h1v1h-1zM511 359h1v1h-1zM524 359h1v1h-1zM547 359h3v1h-3zM569 359h1v1h-1zM598 359h1v1h-1zM155 360h1v1h-1zM186 360h2v1h-2zM207 360h1v1h-1zM223 360h1v1h-1zM239 360h1v1h-1zM251 360h1v1h-1zM259 360h1v1h-1zM311 360h1v1h-1zM317 360h1v1h-1zM330 360h1v1h-1zM341 360h1v1h-1zM346 360h2v1h-2zM395 360h1v1h-1zM415 360h1v1h-1zM424 360h1v1h-1zM439 360h2v1h-2zM511 360h1v1h-1zM523 360h1v1h-1zM553 360h1v1h-1zM569 360h1v1h-1zM598 360h1v1h-1zM627 360h1v1h-1zM129 361h1v1h-1zM132 361h2v1h-2zM181 361h1v1h-1zM185 361h1v1h-1zM222 361h1v1h-1zM233 361h1v1h-1zM251 361h1v1h-1zM285 361h1v1h-1zM288 361h2v1h-2zM318 361h1v1h-1zM331 361h1v1h-1zM337 361h1v1h-1zM342 361h1v1h-1zM345 361h1v1h-1zM416 361h2v1h-2zM424 361h1v1h-1zM439 361h1v1h-1zM441 361h1v1h-1zM511 361h1v1h-1zM523 361h1v1h-1zM540 361h1v1h-1zM554 361h2v1h-2zM568 361h1v1h-1zM598 361h1v1h-1zM627 361h1v1h-1zM129 362h1v1h-1zM131 362h1v1h-1zM181 362h1v1h-1zM222 362h1v1h-1zM233 362h3v1h-3zM252 362h1v1h-1zM285 362h1v1h-1zM287 362h1v1h-1zM319 362h1v1h-1zM331 362h1v1h-1zM337 362h1v1h-1zM342 362h3v1h-3zM366 362h1v1h-1zM418 362h1v1h-1zM424 362h1v1h-1zM439 362h1v1h-1zM445 362h3v1h-3zM453 362h1v1h-1zM522 362h1v1h-1zM540 362h1v1h-1zM559 362h3v1h-3zM567 362h1v1h-1zM627 362h1v1h-1zM129 363h1v1h-1zM181 363h1v1h-1zM222 363h1v1h-1zM233 363h1v1h-1zM252 363h1v1h-1zM285 363h1v1h-1zM320 363h1v1h-1zM332 363h1v1h-1zM337 363h2v1h-2zM341 363h2v1h-2zM366 363h1v1h-1zM419 363h1v1h-1zM439 363h1v1h-1zM451 363h1v1h-1zM453 363h1v1h-1zM482 363h1v1h-1zM522 363h1v1h-1zM540 363h1v1h-1zM567 363h1v1h-1zM569 363h1v1h-1zM155 364h1v1h-1zM179 364h2v1h-2zM207 364h1v1h-1zM221 364h1v1h-1zM252 364h1v1h-1zM259 364h1v1h-1zM283 364h1v1h-1zM311 364h1v1h-1zM321 364h1v1h-1zM333 364h1v1h-1zM335 364h2v1h-2zM339 364h2v1h-2zM343 364h1v1h-1zM366 364h1v1h-1zM395 364h1v1h-1zM420 364h1v1h-1zM439 364h1v1h-1zM452 364h2v1h-2zM482 364h1v1h-1zM521 364h1v1h-1zM565 364h3v1h-3zM569 364h1v1h-1zM155 365h1v1h-1zM207 365h1v1h-1zM221 365h1v1h-1zM229 365h1v1h-1zM252 365h1v1h-1zM259 365h1v1h-1zM281 365h2v1h-2zM311 365h1v1h-1zM322 365h1v1h-1zM334 365h1v1h-1zM338 365h1v1h-1zM343 365h3v1h-3zM395 365h1v1h-1zM421 365h1v1h-1zM439 365h1v1h-1zM457 365h3v1h-3zM482 365h1v1h-1zM511 365h1v1h-1zM521 365h1v1h-1zM565 365h1v1h-1zM569 365h1v1h-1zM571 365h2v1h-2zM598 365h1v1h-1zM155 366h1v1h-1zM175 366h1v1h-1zM207 366h1v1h-1zM221 366h1v1h-1zM227 366h2v1h-2zM253 366h1v1h-1zM259 366h1v1h-1zM311 366h1v1h-1zM323 366h1v1h-1zM331 366h1v1h-1zM335 366h3v1h-3zM343 366h1v1h-1zM349 366h2v1h-2zM395 366h1v1h-1zM422 366h1v1h-1zM424 366h1v1h-1zM439 366h1v1h-1zM463 366h1v1h-1zM511 366h1v1h-1zM520 366h1v1h-1zM565 366h1v1h-1zM573 366h1v1h-1zM598 366h1v1h-1zM627 366h1v1h-1zM129 367h1v1h-1zM174 367h1v1h-1zM181 367h1v1h-1zM220 367h1v1h-1zM233 367h1v1h-1zM253 367h1v1h-1zM285 367h1v1h-1zM323 367h1v1h-1zM330 367h1v1h-1zM334 367h2v1h-2zM337 367h1v1h-1zM344 367h1v1h-1zM351 367h1v1h-1zM423 367h2v1h-2zM439 367h1v1h-1zM464 367h2v1h-2zM511 367h1v1h-1zM520 367h1v1h-1zM540 367h1v1h-1zM564 367h1v1h-1zM577 367h3v1h-3zM598 367h1v1h-1zM627 367h1v1h-1zM129 368h1v1h-1zM173 368h1v1h-1zM181 368h1v1h-1zM220 368h1v1h-1zM233 368h1v1h-1zM253 368h1v1h-1zM276 368h2v1h-2zM285 368h1v1h-1zM324 368h1v1h-1zM329 368h1v1h-1zM333 368h1v1h-1zM336 368h2v1h-2zM344 368h1v1h-1zM355 368h3v1h-3zM366 368h1v1h-1zM424 368h2v1h-2zM439 368h1v1h-1zM453 368h1v1h-1zM469 368h2v1h-2zM519 368h1v1h-1zM540 368h1v1h-1zM563 368h1v1h-1zM583 368h1v1h-1zM627 368h1v1h-1zM129 369h1v1h-1zM181 369h1v1h-1zM220 369h1v1h-1zM222 369h2v1h-2zM233 369h1v1h-1zM254 369h1v1h-1zM275 369h1v1h-1zM285 369h1v1h-1zM325 369h1v1h-1zM331 369h2v1h-2zM337 369h1v1h-1zM344 369h1v1h-1zM361 369h1v1h-1zM366 369h1v1h-1zM426 369h1v1h-1zM439 369h1v1h-1zM453 369h1v1h-1zM471 369h1v1h-1zM482 369h1v1h-1zM519 369h1v1h-1zM540 369h1v1h-1zM562 369h1v1h-1zM569 369h1v1h-1zM584 369h2v1h-2zM155 370h1v1h-1zM168 370h2v1h-2zM207 370h1v1h-1zM220 370h2v1h-2zM254 370h1v1h-1zM259 370h1v1h-1zM311 370h1v1h-1zM324 370h2v1h-2zM329 370h2v1h-2zM338 370h1v1h-1zM344 370h1v1h-1zM362 370h2v1h-2zM366 370h1v1h-1zM395 370h1v1h-1zM427 370h1v1h-1zM438 370h1v1h-1zM453 370h1v1h-1zM475 370h3v1h-3zM482 370h1v1h-1zM518 370h1v1h-1zM562 370h1v1h-1zM569 370h1v1h-1zM589 370h3v1h-3zM155 371h1v1h-1zM167 371h1v1h-1zM207 371h1v1h-1zM220 371h1v1h-1zM254 371h1v1h-1zM259 371h1v1h-1zM271 371h1v1h-1zM311 371h1v1h-1zM323 371h1v1h-1zM326 371h3v1h-3zM339 371h1v1h-1zM345 371h1v1h-1zM367 371h3v1h-3zM395 371h1v1h-1zM428 371h1v1h-1zM438 371h1v1h-1zM481 371h2v1h-2zM511 371h1v1h-1zM518 371h1v1h-1zM561 371h1v1h-1zM569 371h1v1h-1zM598 371h1v1h-1zM155 372h1v1h-1zM207 372h1v1h-1zM217 372h1v1h-1zM220 372h1v1h-1zM255 372h1v1h-1zM259 372h1v1h-1zM269 372h2v1h-2zM311 372h1v1h-1zM326 372h1v1h-1zM340 372h1v1h-1zM345 372h1v1h-1zM395 372h1v1h-1zM424 372h1v1h-1zM429 372h2v1h-2zM438 372h1v1h-1zM483 372h1v1h-1zM511 372h1v1h-1zM517 372h1v1h-1zM560 372h1v1h-1zM595 372h4v1h-4zM627 372h1v1h-1zM129 373h1v1h-1zM163 373h1v1h-1zM181 373h1v1h-1zM215 373h2v1h-2zM219 373h1v1h-1zM233 373h1v1h-1zM255 373h1v1h-1zM285 373h1v1h-1zM319 373h1v1h-1zM324 373h2v1h-2zM327 373h1v1h-1zM337 373h1v1h-1zM341 373h1v1h-1zM345 373h1v1h-1zM373 373h3v1h-3zM424 373h1v1h-1zM431 373h1v1h-1zM438 373h1v1h-1zM487 373h3v1h-3zM511 373h1v1h-1zM517 373h1v1h-1zM540 373h1v1h-1zM559 373h1v1h-1zM598 373h1v1h-1zM601 373h2v1h-2zM627 373h1v1h-1zM129 374h1v1h-1zM162 374h1v1h-1zM181 374h1v1h-1zM219 374h1v1h-1zM233 374h1v1h-1zM256 374h1v1h-1zM285 374h1v1h-1zM318 374h1v1h-1zM322 374h2v1h-2zM328 374h1v1h-1zM337 374h1v1h-1zM342 374h1v1h-1zM345 374h1v1h-1zM366 374h1v1h-1zM379 374h2v1h-2zM424 374h1v1h-1zM432 374h1v1h-1zM438 374h1v1h-1zM453 374h1v1h-1zM493 374h1v1h-1zM516 374h1v1h-1zM540 374h1v1h-1zM558 374h1v1h-1zM603 374h1v1h-1zM627 374h1v1h-1zM129 375h1v1h-1zM161 375h1v1h-1zM181 375h1v1h-1zM219 375h1v1h-1zM233 375h1v1h-1zM256 375h1v1h-1zM264 375h2v1h-2zM285 375h1v1h-1zM317 375h1v1h-1zM320 375h2v1h-2zM328 375h1v1h-1zM337 375h1v1h-1zM343 375h1v1h-1zM346 375h1v1h-1zM366 375h1v1h-1zM381 375h1v1h-1zM433 375h2v1h-2zM438 375h1v1h-1zM453 375h1v1h-1zM482 375h1v1h-1zM494 375h2v1h-2zM515 375h1v1h-1zM540 375h1v1h-1zM557 375h1v1h-1zM569 375h1v1h-1zM607 375h3v1h-3zM155 376h1v1h-1zM207 376h1v1h-1zM210 376h2v1h-2zM219 376h1v1h-1zM256 376h1v1h-1zM259 376h1v1h-1zM263 376h1v1h-1zM311 376h1v1h-1zM319 376h1v1h-1zM329 376h1v1h-1zM344 376h1v1h-1zM346 376h1v1h-1zM366 376h1v1h-1zM385 376h3v1h-3zM395 376h1v1h-1zM435 376h1v1h-1zM438 376h1v1h-1zM453 376h1v1h-1zM482 376h1v1h-1zM499 376h2v1h-2zM515 376h1v1h-1zM556 376h1v1h-1zM569 376h1v1h-1zM613 376h1v1h-1zM155 377h3v1h-3zM207 377h1v1h-1zM209 377h1v1h-1zM219 377h1v1h-1zM257 377h1v1h-1zM259 377h1v1h-1zM311 377h3v1h-3zM317 377h2v1h-2zM329 377h1v1h-1zM345 377h2v1h-2zM391 377h1v1h-1zM395 377h1v1h-1zM436 377h2v1h-2zM482 377h1v1h-1zM501 377h1v1h-1zM511 377h1v1h-1zM514 377h1v1h-1zM555 377h1v1h-1zM569 377h1v1h-1zM598 377h1v1h-1zM614 377h2v1h-2zM155 378h1v1h-1zM207 378h1v1h-1zM219 378h1v1h-1zM257 378h1v1h-1zM259 378h1v1h-1zM311 378h1v1h-1zM315 378h2v1h-2zM330 378h1v1h-1zM346 378h1v1h-1zM392 378h2v1h-2zM395 378h1v1h-1zM424 378h1v1h-1zM437 378h2v1h-2zM505 378h3v1h-3zM511 378h1v1h-1zM513 378h1v1h-1zM554 378h1v1h-1zM598 378h1v1h-1zM619 378h3v1h-3zM627 378h1v1h-1zM129 379h1v1h-1zM181 379h1v1h-1zM205 379h1v1h-1zM219 379h1v1h-1zM233 379h1v1h-1zM257 379h2v1h-2zM285 379h1v1h-1zM313 379h2v1h-2zM330 379h1v1h-1zM337 379h1v1h-1zM346 379h3v1h-3zM397 379h3v1h-3zM424 379h1v1h-1zM437 379h1v1h-1zM439 379h2v1h-2zM511 379h3v1h-3zM540 379h1v1h-1zM553 379h1v1h-1zM598 379h1v1h-1zM625 379h1v1h-1zM627 379h1v1h-1zM129 380h1v1h-1zM151 380h1v1h-1zM181 380h1v1h-1zM203 380h2v1h-2zM219 380h1v1h-1zM233 380h1v1h-1zM258 380h1v1h-1zM285 380h1v1h-1zM307 380h1v1h-1zM312 380h1v1h-1zM331 380h1v1h-1zM337 380h1v1h-1zM347 380h1v1h-1zM349 380h1v1h-1zM366 380h1v1h-1zM424 380h1v1h-1zM437 380h1v1h-1zM441 380h2v1h-2zM453 380h1v1h-1zM512 380h2v1h-2zM540 380h1v1h-1zM552 380h1v1h-1zM626 380h2v1h-2zM129 381h1v1h-1zM149 381h2v1h-2zM181 381h1v1h-1zM219 381h1v1h-1zM233 381h1v1h-1zM253 381h1v1h-1zM259 381h1v1h-1zM285 381h1v1h-1zM305 381h2v1h-2zM310 381h2v1h-2zM325 381h3v1h-3zM329 381h3v1h-3zM336 381h4v1h-4zM347 381h1v1h-1zM350 381h1v1h-1zM366 381h1v1h-1zM403 381h3v1h-3zM436 381h1v1h-1zM443 381h1v1h-1zM453 381h1v1h-1zM482 381h1v1h-1zM511 381h1v1h-1zM517 381h3v1h-3zM540 381h1v1h-1zM551 381h1v1h-1zM569 381h1v1h-1zM155 382h1v1h-1zM207 382h1v1h-1zM219 382h1v1h-1zM252 382h1v1h-1zM259 382h1v1h-1zM308 382h2v1h-2zM311 382h1v1h-1zM324 382h1v1h-1zM328 382h1v1h-1zM332 382h1v1h-1zM336 382h1v1h-1zM347 382h1v1h-1zM351 382h1v1h-1zM366 382h1v1h-1zM395 382h1v1h-1zM409 382h2v1h-2zM436 382h1v1h-1zM444 382h2v1h-2zM453 382h1v1h-1zM482 382h1v1h-1zM510 382h1v1h-1zM523 382h1v1h-1zM550 382h1v1h-1zM569 382h1v1h-1zM155 383h1v1h-1zM198 383h2v1h-2zM207 383h1v1h-1zM219 383h1v1h-1zM251 383h1v1h-1zM259 383h2v1h-2zM307 383h1v1h-1zM311 383h1v1h-1zM324 383h1v1h-1zM328 383h1v1h-1zM332 383h1v1h-1zM335 383h1v1h-1zM347 383h1v1h-1zM352 383h1v1h-1zM395 383h1v1h-1zM411 383h1v1h-1zM436 383h1v1h-1zM446 383h2v1h-2zM482 383h1v1h-1zM510 383h2v1h-2zM524 383h2v1h-2zM548 383h2v1h-2zM569 383h1v1h-1zM598 383h1v1h-1zM144 384h2v1h-2zM155 384h1v1h-1zM197 384h1v1h-1zM207 384h1v1h-1zM219 384h1v1h-1zM259 384h1v1h-1zM261 384h1v1h-1zM300 384h2v1h-2zM305 384h2v1h-2zM311 384h1v1h-1zM324 384h1v1h-1zM328 384h1v1h-1zM332 384h1v1h-1zM335 384h4v1h-4zM347 384h1v1h-1zM353 384h1v1h-1zM395 384h1v1h-1zM415 384h3v1h-3zM424 384h1v1h-1zM436 384h1v1h-1zM448 384h2v1h-2zM509 384h1v1h-1zM511 384h1v1h-1zM529 384h2v1h-2zM547 384h1v1h-1zM598 384h1v1h-1zM627 384h1v1h-1zM129 385h1v1h-1zM143 385h1v1h-1zM181 385h1v1h-1zM219 385h1v1h-1zM233 385h1v1h-1zM246 385h2v1h-2zM261 385h1v1h-1zM285 385h1v1h-1zM299 385h1v1h-1zM303 385h2v1h-2zM324 385h1v1h-1zM328 385h1v1h-1zM331 385h1v1h-1zM333 385h1v1h-1zM337 385h1v1h-1zM339 385h1v1h-1zM347 385h1v1h-1zM354 385h1v1h-1zM421 385h1v1h-1zM424 385h1v1h-1zM435 385h1v1h-1zM450 385h2v1h-2zM508 385h1v1h-1zM511 385h1v1h-1zM531 385h1v1h-1zM540 385h1v1h-1zM545 385h2v1h-2zM598 385h1v1h-1zM627 385h1v1h-1zM129 386h1v1h-1zM181 386h1v1h-1zM193 386h1v1h-1zM219 386h1v1h-1zM233 386h1v1h-1zM245 386h1v1h-1zM262 386h1v1h-1zM285 386h1v1h-1zM301 386h2v1h-2zM323 386h3v1h-3zM328 386h1v1h-1zM330 386h1v1h-1zM333 386h1v1h-1zM337 386h1v1h-1zM339 386h1v1h-1zM347 386h1v1h-1zM355 386h2v1h-2zM366 386h1v1h-1zM422 386h3v1h-3zM435 386h1v1h-1zM452 386h2v1h-2zM507 386h1v1h-1zM535 386h3v1h-3zM540 386h1v1h-1zM544 386h1v1h-1zM627 386h1v1h-1zM129 387h1v1h-1zM139 387h1v1h-1zM181 387h1v1h-1zM191 387h2v1h-2zM219 387h1v1h-1zM233 387h1v1h-1zM262 387h1v1h-1zM285 387h1v1h-1zM295 387h1v1h-1zM300 387h1v1h-1zM324 387h1v1h-1zM328 387h2v1h-2zM334 387h2v1h-2zM337 387h1v1h-1zM339 387h1v1h-1zM347 387h1v1h-1zM357 387h1v1h-1zM366 387h1v1h-1zM427 387h3v1h-3zM435 387h1v1h-1zM453 387h3v1h-3zM482 387h1v1h-1zM506 387h1v1h-1zM540 387h4v1h-4zM569 387h1v1h-1zM137 388h2v1h-2zM155 388h1v1h-1zM207 388h1v1h-1zM219 388h1v1h-1zM241 388h1v1h-1zM259 388h1v1h-1zM263 388h1v1h-1zM293 388h2v1h-2zM298 388h2v1h-2zM311 388h1v1h-1zM325 388h8v1h-8zM334 388h1v1h-1zM336 388h3v1h-3zM347 388h1v1h-1zM358 388h1v1h-1zM366 388h1v1h-1zM395 388h1v1h-1zM433 388h2v1h-2zM453 388h1v1h-1zM456 388h2v1h-2zM482 388h1v1h-1zM505 388h1v1h-1zM540 388h2v1h-2zM543 388h1v1h-1zM569 388h1v1h-1zM155 389h1v1h-1zM207 389h1v1h-1zM220 389h1v1h-1zM240 389h1v1h-1zM259 389h1v1h-1zM264 389h1v1h-1zM296 389h2v1h-2zM311 389h1v1h-1zM334 389h1v1h-1zM347 389h1v1h-1zM359 389h1v1h-1zM395 389h1v1h-1zM434 389h2v1h-2zM458 389h3v1h-3zM482 389h1v1h-1zM504 389h1v1h-1zM511 389h1v1h-1zM538 389h2v1h-2zM547 389h3v1h-3zM569 389h1v1h-1zM598 389h1v1h-1zM155 390h1v1h-1zM186 390h2v1h-2zM207 390h1v1h-1zM220 390h1v1h-1zM239 390h1v1h-1zM259 390h1v1h-1zM264 390h1v1h-1zM294 390h2v1h-2zM311 390h1v1h-1zM335 390h1v1h-1zM348 390h1v1h-1zM360 390h2v1h-2zM395 390h1v1h-1zM424 390h1v1h-1zM434 390h1v1h-1zM439 390h2v1h-2zM461 390h2v1h-2zM503 390h1v1h-1zM511 390h1v1h-1zM536 390h2v1h-2zM553 390h1v1h-1zM598 390h1v1h-1zM627 390h1v1h-1zM129 391h1v1h-1zM132 391h2v1h-2zM181 391h1v1h-1zM185 391h1v1h-1zM220 391h1v1h-1zM233 391h1v1h-1zM265 391h1v1h-1zM285 391h1v1h-1zM288 391h2v1h-2zM293 391h1v1h-1zM335 391h1v1h-1zM337 391h1v1h-1zM348 391h1v1h-1zM362 391h1v1h-1zM424 391h1v1h-1zM433 391h1v1h-1zM441 391h1v1h-1zM463 391h3v1h-3zM502 391h1v1h-1zM511 391h1v1h-1zM534 391h2v1h-2zM540 391h1v1h-1zM554 391h2v1h-2zM598 391h1v1h-1zM627 391h1v1h-1zM129 392h1v1h-1zM131 392h1v1h-1zM181 392h1v1h-1zM220 392h1v1h-1zM233 392h3v1h-3zM266 392h1v1h-1zM285 392h1v1h-1zM287 392h1v1h-1zM291 392h2v1h-2zM335 392h1v1h-1zM337 392h1v1h-1zM348 392h1v1h-1zM363 392h1v1h-1zM366 392h1v1h-1zM424 392h1v1h-1zM433 392h1v1h-1zM445 392h3v1h-3zM453 392h1v1h-1zM466 392h3v1h-3zM501 392h1v1h-1zM531 392h3v1h-3zM540 392h1v1h-1zM559 392h3v1h-3zM627 392h1v1h-1zM129 393h1v1h-1zM181 393h1v1h-1zM220 393h1v1h-1zM233 393h1v1h-1zM266 393h1v1h-1zM285 393h1v1h-1zM289 393h2v1h-2zM335 393h1v1h-1zM337 393h2v1h-2zM348 393h1v1h-1zM364 393h3v1h-3zM432 393h1v1h-1zM451 393h1v1h-1zM453 393h1v1h-1zM469 393h3v1h-3zM482 393h1v1h-1zM500 393h1v1h-1zM529 393h2v1h-2zM540 393h1v1h-1zM569 393h1v1h-1zM155 394h1v1h-1zM179 394h2v1h-2zM207 394h1v1h-1zM220 394h1v1h-1zM259 394h1v1h-1zM267 394h1v1h-1zM283 394h1v1h-1zM287 394h2v1h-2zM311 394h1v1h-1zM335 394h2v1h-2zM339 394h1v1h-1zM348 394h1v1h-1zM366 394h1v1h-1zM395 394h1v1h-1zM432 394h1v1h-1zM452 394h2v1h-2zM472 394h4v1h-4zM482 394h1v1h-1zM499 394h1v1h-1zM525 394h4v1h-4zM565 394h3v1h-3zM569 394h1v1h-1zM155 395h1v1h-1zM207 395h1v1h-1zM221 395h1v1h-1zM229 395h1v1h-1zM259 395h1v1h-1zM268 395h1v1h-1zM281 395h2v1h-2zM286 395h1v1h-1zM311 395h1v1h-1zM336 395h1v1h-1zM343 395h3v1h-3zM348 395h1v1h-1zM367 395h2v1h-2zM395 395h1v1h-1zM432 395h1v1h-1zM457 395h3v1h-3zM476 395h4v1h-4zM482 395h1v1h-1zM498 395h1v1h-1zM511 395h1v1h-1zM521 395h4v1h-4zM569 395h1v1h-1zM571 395h2v1h-2zM598 395h1v1h-1zM155 396h1v1h-1zM175 396h1v1h-1zM207 396h1v1h-1zM221 396h1v1h-1zM227 396h2v1h-2zM259 396h1v1h-1zM268 396h1v1h-1zM273 396h5v1h-5zM284 396h2v1h-2zM299 396h4v1h-4zM311 396h1v1h-1zM331 396h1v1h-1zM336 396h1v1h-1zM348 396h3v1h-3zM369 396h1v1h-1zM395 396h1v1h-1zM424 396h1v1h-1zM431 396h1v1h-1zM463 396h1v1h-1zM480 396h5v1h-5zM497 396h1v1h-1zM511 396h1v1h-1zM517 396h4v1h-4zM573 396h1v1h-1zM598 396h1v1h-1zM627 396h1v1h-1zM129 397h1v1h-1zM174 397h1v1h-1zM181 397h1v1h-1zM221 397h1v1h-1zM233 397h1v1h-1zM269 397h1v1h-1zM276 397h1v1h-1zM282 397h2v1h-2zM285 397h1v1h-1zM299 397h1v1h-1zM330 397h1v1h-1zM336 397h1v1h-1zM348 397h1v1h-1zM351 397h1v1h-1zM370 397h2v1h-2zM424 397h1v1h-1zM431 397h1v1h-1zM464 397h2v1h-2zM485 397h9v1h-9zM496 397h1v1h-1zM509 397h8v1h-8zM540 397h1v1h-1zM577 397h3v1h-3zM598 397h1v1h-1zM627 397h1v1h-1zM129 398h1v1h-1zM173 398h1v1h-1zM181 398h1v1h-1zM221 398h1v1h-1zM233 398h1v1h-1zM270 398h1v1h-1zM275 398h3v1h-3zM281 398h1v1h-1zM285 398h1v1h-1zM298 398h1v1h-1zM329 398h1v1h-1zM337 398h1v1h-1zM347 398h1v1h-1zM355 398h3v1h-3zM366 398h1v1h-1zM372 398h2v1h-2zM424 398h1v1h-1zM430 398h1v1h-1zM453 398h1v1h-1zM469 398h2v1h-2zM494 398h15v1h-15zM540 398h1v1h-1zM583 398h1v1h-1zM627 398h1v1h-1zM129 399h1v1h-1zM181 399h1v1h-1zM222 399h2v1h-2zM233 399h1v1h-1zM271 399h1v1h-1zM274 399h2v1h-2zM279 399h2v1h-2zM285 399h1v1h-1zM298 399h4v1h-4zM337 399h1v1h-1zM347 399h1v1h-1zM361 399h1v1h-1zM366 399h1v1h-1zM374 399h1v1h-1zM430 399h1v1h-1zM453 399h1v1h-1zM471 399h1v1h-1zM482 399h1v1h-1zM494 399h1v1h-1zM540 399h1v1h-1zM569 399h1v1h-1zM584 399h2v1h-2zM155 400h1v1h-1zM168 400h2v1h-2zM207 400h1v1h-1zM221 400h2v1h-2zM259 400h1v1h-1zM272 400h1v1h-1zM274 400h1v1h-1zM277 400h2v1h-2zM302 400h1v1h-1zM311 400h1v1h-1zM324 400h2v1h-2zM337 400h1v1h-1zM347 400h1v1h-1zM362 400h2v1h-2zM366 400h1v1h-1zM375 400h2v1h-2zM395 400h1v1h-1zM429 400h1v1h-1zM453 400h1v1h-1zM475 400h3v1h-3zM482 400h1v1h-1zM492 400h2v1h-2zM569 400h1v1h-1zM589 400h3v1h-3zM155 401h1v1h-1zM167 401h1v1h-1zM207 401h1v1h-1zM222 401h1v1h-1zM259 401h1v1h-1zM271 401h1v1h-1zM273 401h5v1h-5zM302 401h1v1h-1zM311 401h1v1h-1zM323 401h1v1h-1zM337 401h1v1h-1zM347 401h1v1h-1zM364 401h2v1h-2zM367 401h3v1h-3zM377 401h2v1h-2zM395 401h1v1h-1zM429 401h1v1h-1zM481 401h2v1h-2zM491 401h1v1h-1zM511 401h1v1h-1zM569 401h1v1h-1zM598 401h1v1h-1zM155 402h1v1h-1zM207 402h1v1h-1zM217 402h1v1h-1zM223 402h1v1h-1zM259 402h1v1h-1zM269 402h2v1h-2zM274 402h1v1h-1zM298 402h1v1h-1zM302 402h1v1h-1zM311 402h1v1h-1zM337 402h1v1h-1zM347 402h1v1h-1zM379 402h2v1h-2zM395 402h1v1h-1zM424 402h1v1h-1zM428 402h1v1h-1zM483 402h1v1h-1zM489 402h2v1h-2zM511 402h1v1h-1zM595 402h4v1h-4zM627 402h1v1h-1zM129 403h1v1h-1zM163 403h1v1h-1zM181 403h1v1h-1zM215 403h2v1h-2zM223 403h1v1h-1zM233 403h1v1h-1zM275 403h1v1h-1zM285 403h1v1h-1zM299 403h3v1h-3zM319 403h1v1h-1zM338 403h1v1h-1zM347 403h1v1h-1zM360 403h1v1h-1zM373 403h3v1h-3zM381 403h2v1h-2zM424 403h1v1h-1zM427 403h1v1h-1zM487 403h3v1h-3zM511 403h1v1h-1zM540 403h1v1h-1zM598 403h1v1h-1zM601 403h2v1h-2zM627 403h1v1h-1zM129 404h1v1h-1zM162 404h1v1h-1zM181 404h1v1h-1zM223 404h1v1h-1zM233 404h1v1h-1zM276 404h1v1h-1zM285 404h1v1h-1zM318 404h1v1h-1zM338 404h1v1h-1zM347 404h1v1h-1zM359 404h1v1h-1zM379 404h2v1h-2zM383 404h2v1h-2zM424 404h1v1h-1zM427 404h1v1h-1zM453 404h1v1h-1zM486 404h2v1h-2zM493 404h1v1h-1zM540 404h1v1h-1zM603 404h1v1h-1zM627 404h1v1h-1zM129 405h1v1h-1zM161 405h1v1h-1zM181 405h1v1h-1zM224 405h1v1h-1zM233 405h1v1h-1zM264 405h2v1h-2zM277 405h1v1h-1zM285 405h1v1h-1zM317 405h1v1h-1zM338 405h1v1h-1zM347 405h1v1h-1zM358 405h1v1h-1zM381 405h1v1h-1zM385 405h2v1h-2zM426 405h1v1h-1zM453 405h1v1h-1zM482 405h1v1h-1zM484 405h2v1h-2zM494 405h2v1h-2zM540 405h1v1h-1zM569 405h1v1h-1zM607 405h3v1h-3zM155 406h1v1h-1zM207 406h1v1h-1zM210 406h2v1h-2zM224 406h1v1h-1zM259 406h1v1h-1zM263 406h1v1h-1zM278 406h1v1h-1zM311 406h1v1h-1zM338 406h1v1h-1zM347 406h1v1h-1zM385 406h4v1h-4zM395 406h1v1h-1zM426 406h1v1h-1zM453 406h1v1h-1zM482 406h2v1h-2zM499 406h2v1h-2zM569 406h1v1h-1zM613 406h1v1h-1zM155 407h3v1h-3zM207 407h1v1h-1zM209 407h1v1h-1zM224 407h1v1h-1zM259 407h1v1h-1zM279 407h1v1h-1zM311 407h3v1h-3zM338 407h1v1h-1zM347 407h1v1h-1zM353 407h2v1h-2zM389 407h3v1h-3zM395 407h1v1h-1zM425 407h1v1h-1zM480 407h3v1h-3zM501 407h1v1h-1zM511 407h1v1h-1zM569 407h1v1h-1zM598 407h1v1h-1zM614 407h2v1h-2zM155 408h1v1h-1zM207 408h1v1h-1zM225 408h1v1h-1zM259 408h1v1h-1zM280 408h1v1h-1zM311 408h2v1h-2zM338 408h1v1h-1zM346 408h1v1h-1zM352 408h1v1h-1zM392 408h2v1h-2zM395 408h1v1h-1zM424 408h1v1h-1zM478 408h2v1h-2zM505 408h3v1h-3zM511 408h1v1h-1zM598 408h1v1h-1zM619 408h3v1h-3zM627 408h1v1h-1zM129 409h1v1h-1zM181 409h1v1h-1zM205 409h1v1h-1zM225 409h1v1h-1zM233 409h1v1h-1zM257 409h2v1h-2zM281 409h1v1h-1zM285 409h1v1h-1zM313 409h1v1h-1zM338 409h1v1h-1zM346 409h1v1h-1zM393 409h7v1h-7zM424 409h1v1h-1zM476 409h2v1h-2zM511 409h2v1h-2zM540 409h1v1h-1zM598 409h1v1h-1zM625 409h1v1h-1zM627 409h1v1h-1zM129 410h1v1h-1zM151 410h1v1h-1zM181 410h1v1h-1zM203 410h2v1h-2zM225 410h1v1h-1zM233 410h1v1h-1zM282 410h1v1h-1zM285 410h1v1h-1zM307 410h1v1h-1zM317 410h3v1h-3zM338 410h1v1h-1zM346 410h1v1h-1zM348 410h1v1h-1zM397 410h3v1h-3zM423 410h2v1h-2zM453 410h1v1h-1zM474 410h2v1h-2zM513 410h1v1h-1zM540 410h1v1h-1zM626 410h2v1h-2zM129 411h1v1h-1zM149 411h2v1h-2zM181 411h1v1h-1zM226 411h1v1h-1zM233 411h1v1h-1zM253 411h1v1h-1zM274 411h1v1h-1zM280 411h4v1h-4zM285 411h1v1h-1zM305 411h2v1h-2zM323 411h2v1h-2zM338 411h1v1h-1zM346 411h2v1h-2zM389 411h1v1h-1zM400 411h6v1h-6zM422 411h1v1h-1zM453 411h1v1h-1zM471 411h3v1h-3zM482 411h1v1h-1zM517 411h3v1h-3zM540 411h1v1h-1zM569 411h1v1h-1zM155 412h1v1h-1zM207 412h1v1h-1zM226 412h1v1h-1zM252 412h1v1h-1zM259 412h1v1h-1zM273 412h2v1h-2zM279 412h1v1h-1zM283 412h2v1h-2zM325 412h1v1h-1zM338 412h1v1h-1zM346 412h1v1h-1zM388 412h1v1h-1zM403 412h3v1h-3zM409 412h2v1h-2zM421 412h1v1h-1zM453 412h1v1h-1zM468 412h3v1h-3zM482 412h1v1h-1zM523 412h1v1h-1zM569 412h1v1h-1zM155 413h1v1h-1zM198 413h2v1h-2zM207 413h1v1h-1zM227 413h1v1h-1zM251 413h1v1h-1zM259 413h1v1h-1zM272 413h1v1h-1zM274 413h1v1h-1zM279 413h1v1h-1zM283 413h1v1h-1zM285 413h1v1h-1zM329 413h3v1h-3zM338 413h1v1h-1zM346 413h1v1h-1zM387 413h1v1h-1zM406 413h4v1h-4zM411 413h1v1h-1zM421 413h1v1h-1zM465 413h3v1h-3zM482 413h1v1h-1zM511 413h1v1h-1zM524 413h2v1h-2zM569 413h1v1h-1zM598 413h1v1h-1zM144 414h2v1h-2zM155 414h1v1h-1zM197 414h1v1h-1zM207 414h1v1h-1zM227 414h1v1h-1zM259 414h1v1h-1zM274 414h1v1h-1zM279 414h1v1h-1zM283 414h1v1h-1zM286 414h1v1h-1zM300 414h2v1h-2zM335 414h1v1h-1zM338 414h1v1h-1zM341 414h2v1h-2zM346 414h1v1h-1zM410 414h4v1h-4zM415 414h3v1h-3zM420 414h1v1h-1zM424 414h1v1h-1zM461 414h4v1h-4zM511 414h1v1h-1zM529 414h2v1h-2zM598 414h1v1h-1zM627 414h1v1h-1zM129 415h1v1h-1zM143 415h1v1h-1zM181 415h1v1h-1zM228 415h1v1h-1zM233 415h1v1h-1zM246 415h2v1h-2zM274 415h1v1h-1zM279 415h1v1h-1zM283 415h1v1h-1zM285 415h1v1h-1zM287 415h1v1h-1zM299 415h1v1h-1zM336 415h2v1h-2zM340 415h1v1h-1zM346 415h1v1h-1zM382 415h2v1h-2zM414 415h6v1h-6zM421 415h1v1h-1zM424 415h1v1h-1zM456 415h5v1h-5zM511 415h1v1h-1zM531 415h1v1h-1zM540 415h1v1h-1zM598 415h1v1h-1zM627 415h1v1h-1zM129 416h1v1h-1zM181 416h1v1h-1zM193 416h1v1h-1zM228 416h1v1h-1zM233 416h1v1h-1zM245 416h1v1h-1zM274 416h1v1h-1zM279 416h1v1h-1zM283 416h1v1h-1zM285 416h1v1h-1zM288 416h2v1h-2zM341 416h3v1h-3zM346 416h1v1h-1zM381 416h1v1h-1zM418 416h1v1h-1zM420 416h7v1h-7zM448 416h8v1h-8zM535 416h3v1h-3zM540 416h1v1h-1zM627 416h1v1h-1zM129 417h1v1h-1zM139 417h1v1h-1zM181 417h1v1h-1zM191 417h2v1h-2zM229 417h1v1h-1zM233 417h1v1h-1zM274 417h1v1h-1zM279 417h1v1h-1zM283 417h1v1h-1zM285 417h1v1h-1zM290 417h1v1h-1zM295 417h1v1h-1zM336 417h1v1h-1zM345 417h1v1h-1zM417 417h1v1h-1zM422 417h2v1h-2zM427 417h21v1h-21zM453 417h1v1h-1zM482 417h1v1h-1zM540 417h3v1h-3zM569 417h1v1h-1zM137 418h2v1h-2zM155 418h1v1h-1zM207 418h1v1h-1zM229 418h1v1h-1zM241 418h1v1h-1zM259 418h1v1h-1zM274 418h1v1h-1zM280 418h3v1h-3zM291 418h1v1h-1zM293 418h2v1h-2zM334 418h2v1h-2zM345 418h1v1h-1zM347 418h3v1h-3zM377 418h1v1h-1zM416 418h1v1h-1zM433 418h1v1h-1zM453 418h1v1h-1zM482 418h1v1h-1zM543 418h1v1h-1zM569 418h1v1h-1zM155 419h1v1h-1zM207 419h1v1h-1zM230 419h1v1h-1zM240 419h1v1h-1zM259 419h1v1h-1zM292 419h2v1h-2zM339 419h3v1h-3zM345 419h5v1h-5zM353 419h2v1h-2zM376 419h1v1h-1zM415 419h1v1h-1zM418 419h1v1h-1zM434 419h2v1h-2zM482 419h1v1h-1zM511 419h1v1h-1zM547 419h3v1h-3zM569 419h1v1h-1zM598 419h1v1h-1zM155 420h1v1h-1zM186 420h2v1h-2zM207 420h1v1h-1zM231 420h1v1h-1zM239 420h1v1h-1zM259 420h1v1h-1zM294 420h1v1h-1zM338 420h1v1h-1zM342 420h1v1h-1zM345 420h2v1h-2zM355 420h1v1h-1zM375 420h1v1h-1zM414 420h1v1h-1zM417 420h1v1h-1zM439 420h2v1h-2zM511 420h1v1h-1zM553 420h1v1h-1zM598 420h1v1h-1zM627 420h1v1h-1zM129 421h1v1h-1zM132 421h2v1h-2zM181 421h1v1h-1zM185 421h1v1h-1zM231 421h1v1h-1zM233 421h1v1h-1zM285 421h1v1h-1zM288 421h2v1h-2zM295 421h1v1h-1zM329 421h2v1h-2zM342 421h1v1h-1zM345 421h1v1h-1zM359 421h3v1h-3zM413 421h1v1h-1zM416 421h1v1h-1zM441 421h1v1h-1zM511 421h1v1h-1zM540 421h1v1h-1zM554 421h2v1h-2zM598 421h1v1h-1zM627 421h1v1h-1zM129 422h1v1h-1zM131 422h1v1h-1zM181 422h1v1h-1zM232 422h4v1h-4zM285 422h1v1h-1zM287 422h1v1h-1zM296 422h2v1h-2zM328 422h1v1h-1zM342 422h1v1h-1zM345 422h4v1h-4zM365 422h1v1h-1zM370 422h2v1h-2zM412 422h1v1h-1zM445 422h3v1h-3zM453 422h1v1h-1zM540 422h1v1h-1zM559 422h3v1h-3zM627 422h1v1h-1zM129 423h1v1h-1zM181 423h1v1h-1zM232 423h2v1h-2zM285 423h2v1h-2zM298 423h1v1h-1zM341 423h1v1h-1zM345 423h1v1h-1zM349 423h1v1h-1zM366 423h2v1h-2zM369 423h1v1h-1zM411 423h2v1h-2zM451 423h1v1h-1zM453 423h1v1h-1zM482 423h1v1h-1zM540 423h1v1h-1zM569 423h1v1h-1zM155 424h1v1h-1zM179 424h2v1h-2zM207 424h1v1h-1zM233 424h1v1h-1zM259 424h1v1h-1zM283 424h1v1h-1zM287 424h1v1h-1zM299 424h2v1h-2zM324 424h1v1h-1zM333 424h3v1h-3zM340 424h1v1h-1zM344 424h1v1h-1zM349 424h1v1h-1zM371 424h3v1h-3zM410 424h1v1h-1zM452 424h2v1h-2zM482 424h1v1h-1zM565 424h3v1h-3zM569 424h1v1h-1zM155 425h1v1h-1zM207 425h1v1h-1zM229 425h1v1h-1zM234 425h1v1h-1zM259 425h1v1h-1zM281 425h2v1h-2zM291 425h3v1h-3zM301 425h1v1h-1zM322 425h2v1h-2zM339 425h1v1h-1zM344 425h2v1h-2zM349 425h1v1h-1zM365 425h1v1h-1zM409 425h1v1h-1zM451 425h2v1h-2zM457 425h3v1h-3zM482 425h1v1h-1zM511 425h1v1h-1zM569 425h1v1h-1zM571 425h2v1h-2zM598 425h1v1h-1zM155 426h1v1h-1zM175 426h1v1h-1zM207 426h1v1h-1zM227 426h2v1h-2zM234 426h1v1h-1zM248 426h1v1h-1zM254 426h4v1h-4zM259 426h1v1h-1zM297 426h2v1h-2zM302 426h2v1h-2zM338 426h5v1h-5zM344 426h1v1h-1zM346 426h3v1h-3zM363 426h2v1h-2zM368 426h3v1h-3zM375 426h5v1h-5zM406 426h1v1h-1zM408 426h1v1h-1zM463 426h1v1h-1zM511 426h1v1h-1zM573 426h1v1h-1zM598 426h1v1h-1zM627 426h1v1h-1zM129 427h1v1h-1zM174 427h1v1h-1zM181 427h1v1h-1zM233 427h1v1h-1zM235 427h1v1h-1zM247 427h2v1h-2zM254 427h1v1h-1zM299 427h1v1h-1zM304 427h2v1h-2zM344 427h1v1h-1zM367 427h1v1h-1zM371 427h1v1h-1zM374 427h1v1h-1zM378 427h1v1h-1zM383 427h2v1h-2zM405 427h1v1h-1zM407 427h1v1h-1zM447 427h1v1h-1zM464 427h2v1h-2zM511 427h1v1h-1zM540 427h1v1h-1zM577 427h3v1h-3zM598 427h1v1h-1zM627 427h1v1h-1zM129 428h1v1h-1zM173 428h1v1h-1zM181 428h1v1h-1zM233 428h1v1h-1zM236 428h1v1h-1zM246 428h1v1h-1zM248 428h1v1h-1zM253 428h1v1h-1zM276 428h2v1h-2zM303 428h5v1h-5zM317 428h2v1h-2zM343 428h1v1h-1zM371 428h1v1h-1zM374 428h1v1h-1zM378 428h1v1h-1zM385 428h1v1h-1zM404 428h3v1h-3zM446 428h1v1h-1zM469 428h2v1h-2zM540 428h1v1h-1zM583 428h1v1h-1zM627 428h1v1h-1zM129 429h1v1h-1zM181 429h1v1h-1zM222 429h2v1h-2zM233 429h1v1h-1zM237 429h1v1h-1zM248 429h1v1h-1zM253 429h4v1h-4zM275 429h1v1h-1zM308 429h2v1h-2zM316 429h1v1h-1zM343 429h1v1h-1zM358 429h2v1h-2zM371 429h1v1h-1zM374 429h1v1h-1zM378 429h1v1h-1zM389 429h3v1h-3zM404 429h1v1h-1zM445 429h1v1h-1zM471 429h1v1h-1zM482 429h1v1h-1zM540 429h1v1h-1zM569 429h1v1h-1zM584 429h2v1h-2zM155 430h1v1h-1zM168 430h2v1h-2zM207 430h1v1h-1zM221 430h1v1h-1zM237 430h1v1h-1zM248 430h1v1h-1zM257 430h1v1h-1zM259 430h1v1h-1zM309 430h3v1h-3zM343 430h1v1h-1zM357 430h1v1h-1zM370 430h1v1h-1zM374 430h1v1h-1zM378 430h1v1h-1zM395 430h1v1h-1zM399 430h2v1h-2zM402 430h2v1h-2zM475 430h3v1h-3zM482 430h1v1h-1zM569 430h1v1h-1zM589 430h3v1h-3zM155 431h1v1h-1zM167 431h1v1h-1zM207 431h1v1h-1zM238 431h1v1h-1zM248 431h1v1h-1zM257 431h1v1h-1zM259 431h1v1h-1zM271 431h1v1h-1zM311 431h2v1h-2zM315 431h3v1h-3zM342 431h1v1h-1zM362 431h3v1h-3zM369 431h1v1h-1zM374 431h1v1h-1zM378 431h1v1h-1zM396 431h3v1h-3zM401 431h1v1h-1zM440 431h2v1h-2zM481 431h2v1h-2zM511 431h1v1h-1zM569 431h1v1h-1zM598 431h1v1h-1zM155 432h1v1h-1zM207 432h1v1h-1zM217 432h1v1h-1zM239 432h1v1h-1zM248 432h1v1h-1zM253 432h1v1h-1zM257 432h1v1h-1zM259 432h1v1h-1zM269 432h2v1h-2zM310 432h2v1h-2zM313 432h3v1h-3zM342 432h1v1h-1zM353 432h1v1h-1zM368 432h1v1h-1zM374 432h1v1h-1zM378 432h1v1h-1zM399 432h5v1h-5zM439 432h1v1h-1zM480 432h2v1h-2zM483 432h1v1h-1zM511 432h1v1h-1zM595 432h4v1h-4zM627 432h1v1h-1zM129 433h1v1h-1zM163 433h1v1h-1zM181 433h1v1h-1zM215 433h2v1h-2zM233 433h1v1h-1zM240 433h1v1h-1zM248 433h1v1h-1zM254 433h3v1h-3zM316 433h2v1h-2zM321 433h3v1h-3zM342 433h1v1h-1zM351 433h2v1h-2zM367 433h5v1h-5zM375 433h3v1h-3zM394 433h1v1h-1zM397 433h2v1h-2zM407 433h1v1h-1zM487 433h3v1h-3zM511 433h1v1h-1zM540 433h1v1h-1zM598 433h1v1h-1zM601 433h2v1h-2zM627 433h1v1h-1zM129 434h1v1h-1zM162 434h1v1h-1zM181 434h1v1h-1zM233 434h1v1h-1zM241 434h1v1h-1zM318 434h2v1h-2zM327 434h2v1h-2zM341 434h1v1h-1zM392 434h2v1h-2zM395 434h2v1h-2zM398 434h1v1h-1zM404 434h6v1h-6zM435 434h1v1h-1zM476 434h1v1h-1zM493 434h1v1h-1zM540 434h1v1h-1zM603 434h1v1h-1zM627 434h1v1h-1zM129 435h1v1h-1zM161 435h1v1h-1zM181 435h1v1h-1zM233 435h1v1h-1zM242 435h1v1h-1zM264 435h2v1h-2zM305 435h2v1h-2zM320 435h3v1h-3zM329 435h1v1h-1zM341 435h1v1h-1zM393 435h2v1h-2zM397 435h2v1h-2zM404 435h1v1h-1zM413 435h2v1h-2zM434 435h1v1h-1zM475 435h1v1h-1zM494 435h2v1h-2zM540 435h1v1h-1zM569 435h1v1h-1zM607 435h3v1h-3zM155 436h1v1h-1zM207 436h1v1h-1zM210 436h2v1h-2zM243 436h1v1h-1zM259 436h1v1h-1zM263 436h1v1h-1zM304 436h1v1h-1zM323 436h3v1h-3zM333 436h3v1h-3zM340 436h1v1h-1zM346 436h2v1h-2zM390 436h3v1h-3zM396 436h1v1h-1zM398 436h1v1h-1zM403 436h1v1h-1zM415 436h1v1h-1zM433 436h1v1h-1zM474 436h1v1h-1zM499 436h2v1h-2zM569 436h1v1h-1zM613 436h1v1h-1zM155 437h3v1h-3zM207 437h1v1h-1zM209 437h1v1h-1zM244 437h1v1h-1zM259 437h1v1h-1zM326 437h3v1h-3zM339 437h2v1h-2zM345 437h1v1h-1zM387 437h3v1h-3zM398 437h1v1h-1zM403 437h4v1h-4zM419 437h3v1h-3zM501 437h1v1h-1zM511 437h1v1h-1zM569 437h1v1h-1zM598 437h1v1h-1zM614 437h2v1h-2zM155 438h1v1h-1zM207 438h1v1h-1zM245 438h1v1h-1zM259 438h2v1h-2zM300 438h1v1h-1zM329 438h3v1h-3zM339 438h3v1h-3zM385 438h3v1h-3zM398 438h1v1h-1zM407 438h1v1h-1zM425 438h1v1h-1zM428 438h2v1h-2zM469 438h2v1h-2zM505 438h3v1h-3zM511 438h1v1h-1zM598 438h1v1h-1zM619 438h3v1h-3zM627 438h1v1h-1zM129 439h1v1h-1zM181 439h1v1h-1zM205 439h1v1h-1zM233 439h1v1h-1zM246 439h1v1h-1zM257 439h2v1h-2zM261 439h1v1h-1zM298 439h2v1h-2zM332 439h4v1h-4zM339 439h1v1h-1zM341 439h1v1h-1zM345 439h3v1h-3zM381 439h4v1h-4zM391 439h3v1h-3zM398 439h1v1h-1zM407 439h1v1h-1zM426 439h2v1h-2zM468 439h1v1h-1zM511 439h2v1h-2zM540 439h1v1h-1zM598 439h1v1h-1zM625 439h1v1h-1zM627 439h1v1h-1zM129 440h1v1h-1zM151 440h1v1h-1zM181 440h1v1h-1zM203 440h2v1h-2zM233 440h1v1h-1zM247 440h1v1h-1zM265 440h3v1h-3zM336 440h5v1h-5zM377 440h4v1h-4zM382 440h1v1h-1zM398 440h1v1h-1zM403 440h1v1h-1zM407 440h1v1h-1zM431 440h3v1h-3zM509 440h2v1h-2zM513 440h1v1h-1zM540 440h1v1h-1zM626 440h2v1h-2zM129 441h1v1h-1zM149 441h2v1h-2zM181 441h1v1h-1zM221 441h3v1h-3zM228 441h3v1h-3zM233 441h1v1h-1zM248 441h1v1h-1zM253 441h1v1h-1zM271 441h2v1h-2zM338 441h1v1h-1zM341 441h6v1h-6zM351 441h3v1h-3zM371 441h6v1h-6zM380 441h2v1h-2zM398 441h1v1h-1zM404 441h3v1h-3zM423 441h1v1h-1zM437 441h1v1h-1zM464 441h1v1h-1zM517 441h3v1h-3zM540 441h1v1h-1zM569 441h1v1h-1zM155 442h1v1h-1zM207 442h1v1h-1zM220 442h1v1h-1zM224 442h1v1h-1zM227 442h1v1h-1zM231 442h1v1h-1zM249 442h2v1h-2zM252 442h1v1h-1zM273 442h1v1h-1zM293 442h2v1h-2zM337 442h1v1h-1zM347 442h24v1h-24zM421 442h2v1h-2zM427 442h1v1h-1zM433 442h3v1h-3zM438 442h2v1h-2zM463 442h1v1h-1zM505 442h1v1h-1zM523 442h1v1h-1zM569 442h1v1h-1zM155 443h1v1h-1zM198 443h2v1h-2zM207 443h1v1h-1zM224 443h1v1h-1zM227 443h1v1h-1zM231 443h1v1h-1zM251 443h1v1h-1zM277 443h3v1h-3zM292 443h1v1h-1zM334 443h3v1h-3zM359 443h1v1h-1zM426 443h2v1h-2zM432 443h1v1h-1zM436 443h1v1h-1zM443 443h2v1h-2zM462 443h1v1h-1zM504 443h1v1h-1zM524 443h2v1h-2zM569 443h1v1h-1zM598 443h1v1h-1zM144 444h2v1h-2zM155 444h1v1h-1zM197 444h1v1h-1zM207 444h1v1h-1zM224 444h1v1h-1zM227 444h1v1h-1zM231 444h1v1h-1zM252 444h1v1h-1zM283 444h1v1h-1zM333 444h1v1h-1zM335 444h1v1h-1zM363 444h3v1h-3zM375 444h2v1h-2zM425 444h1v1h-1zM427 444h1v1h-1zM432 444h1v1h-1zM436 444h1v1h-1zM445 444h1v1h-1zM503 444h1v1h-1zM529 444h2v1h-2zM598 444h1v1h-1zM627 444h1v1h-1zM129 445h1v1h-1zM143 445h1v1h-1zM181 445h1v1h-1zM223 445h1v1h-1zM227 445h1v1h-1zM231 445h1v1h-1zM233 445h1v1h-1zM246 445h2v1h-2zM253 445h1v1h-1zM284 445h2v1h-2zM288 445h1v1h-1zM335 445h1v1h-1zM369 445h1v1h-1zM374 445h1v1h-1zM416 445h2v1h-2zM427 445h1v1h-1zM432 445h1v1h-1zM436 445h1v1h-1zM449 445h3v1h-3zM457 445h2v1h-2zM531 445h1v1h-1zM540 445h1v1h-1zM598 445h1v1h-1zM627 445h1v1h-1zM129 446h1v1h-1zM181 446h1v1h-1zM193 446h1v1h-1zM222 446h1v1h-1zM227 446h1v1h-1zM231 446h1v1h-1zM233 446h1v1h-1zM245 446h1v1h-1zM254 446h1v1h-1zM286 446h2v1h-2zM289 446h3v1h-3zM329 446h1v1h-1zM334 446h1v1h-1zM370 446h2v1h-2zM415 446h1v1h-1zM427 446h1v1h-1zM432 446h1v1h-1zM436 446h1v1h-1zM455 446h2v1h-2zM498 446h2v1h-2zM535 446h3v1h-3zM540 446h1v1h-1zM627 446h1v1h-1zM129 447h1v1h-1zM139 447h1v1h-1zM181 447h1v1h-1zM191 447h2v1h-2zM221 447h1v1h-1zM227 447h1v1h-1zM231 447h1v1h-1zM233 447h1v1h-1zM255 447h2v1h-2zM327 447h2v1h-2zM333 447h1v1h-1zM370 447h1v1h-1zM375 447h3v1h-3zM420 447h3v1h-3zM427 447h1v1h-1zM432 447h1v1h-1zM436 447h1v1h-1zM457 447h1v1h-1zM497 447h1v1h-1zM540 447h3v1h-3zM569 447h1v1h-1zM137 448h2v1h-2zM155 448h1v1h-1zM207 448h1v1h-1zM220 448h5v1h-5zM228 448h3v1h-3zM241 448h1v1h-1zM257 448h1v1h-1zM282 448h1v1h-1zM295 448h3v1h-3zM332 448h1v1h-1zM368 448h2v1h-2zM381 448h1v1h-1zM411 448h1v1h-1zM427 448h1v1h-1zM432 448h1v1h-1zM436 448h1v1h-1zM452 448h1v1h-1zM461 448h3v1h-3zM538 448h2v1h-2zM543 448h1v1h-1zM569 448h1v1h-1zM155 449h1v1h-1zM207 449h1v1h-1zM240 449h1v1h-1zM258 449h2v1h-2zM281 449h1v1h-1zM301 449h2v1h-2zM331 449h1v1h-1zM382 449h2v1h-2zM409 449h2v1h-2zM427 449h1v1h-1zM433 449h3v1h-3zM450 449h2v1h-2zM467 449h1v1h-1zM493 449h1v1h-1zM547 449h3v1h-3zM569 449h1v1h-1zM598 449h1v1h-1zM155 450h1v1h-1zM186 450h2v1h-2zM207 450h1v1h-1zM239 450h1v1h-1zM260 450h1v1h-1zM280 450h1v1h-1zM303 450h1v1h-1zM322 450h2v1h-2zM330 450h1v1h-1zM387 450h2v1h-2zM455 450h4v1h-4zM468 450h2v1h-2zM492 450h1v1h-1zM534 450h1v1h-1zM553 450h1v1h-1zM598 450h1v1h-1zM627 450h1v1h-1zM129 451h1v1h-1zM132 451h2v1h-2zM181 451h1v1h-1zM185 451h1v1h-1zM233 451h1v1h-1zM261 451h2v1h-2zM307 451h3v1h-3zM321 451h1v1h-1zM329 451h1v1h-1zM363 451h2v1h-2zM389 451h1v1h-1zM455 451h1v1h-1zM473 451h2v1h-2zM491 451h1v1h-1zM533 451h1v1h-1zM554 451h2v1h-2zM598 451h1v1h-1zM627 451h1v1h-1zM129 452h1v1h-1zM131 452h1v1h-1zM181 452h1v1h-1zM233 452h3v1h-3zM263 452h1v1h-1zM275 452h2v1h-2zM313 452h1v1h-1zM328 452h1v1h-1zM362 452h1v1h-1zM393 452h3v1h-3zM404 452h2v1h-2zM445 452h2v1h-2zM454 452h1v1h-1zM475 452h1v1h-1zM532 452h1v1h-1zM559 452h3v1h-3zM627 452h1v1h-1zM129 453h1v1h-1zM181 453h1v1h-1zM233 453h2v1h-2zM264 453h2v1h-2zM274 453h1v1h-1zM314 453h2v1h-2zM317 453h1v1h-1zM327 453h1v1h-1zM399 453h1v1h-1zM403 453h1v1h-1zM444 453h1v1h-1zM454 453h4v1h-4zM479 453h3v1h-3zM486 453h2v1h-2zM569 453h1v1h-1zM155 454h1v1h-1zM179 454h2v1h-2zM207 454h1v1h-1zM235 454h1v1h-1zM266 454h2v1h-2zM315 454h2v1h-2zM319 454h3v1h-3zM326 454h1v1h-1zM358 454h1v1h-1zM400 454h2v1h-2zM458 454h1v1h-1zM485 454h2v1h-2zM527 454h2v1h-2zM565 454h3v1h-3zM569 454h1v1h-1zM155 455h1v1h-1zM207 455h1v1h-1zM229 455h1v1h-1zM239 455h3v1h-3zM268 455h3v1h-3zM324 455h2v1h-2zM356 455h2v1h-2zM399 455h1v1h-1zM405 455h3v1h-3zM440 455h1v1h-1zM449 455h3v1h-3zM458 455h1v1h-1zM487 455h1v1h-1zM526 455h1v1h-1zM569 455h1v1h-1zM571 455h2v1h-2zM598 455h1v1h-1zM155 456h1v1h-1zM175 456h1v1h-1zM195 456h3v1h-3zM202 456h4v1h-4zM207 456h1v1h-1zM227 456h2v1h-2zM245 456h2v1h-2zM269 456h3v1h-3zM311 456h1v1h-1zM323 456h1v1h-1zM325 456h3v1h-3zM397 456h2v1h-2zM411 456h1v1h-1zM438 456h2v1h-2zM454 456h1v1h-1zM458 456h1v1h-1zM481 456h1v1h-1zM491 456h3v1h-3zM567 456h2v1h-2zM573 456h1v1h-1zM598 456h1v1h-1zM627 456h1v1h-1zM129 457h1v1h-1zM174 457h1v1h-1zM181 457h1v1h-1zM194 457h1v1h-1zM198 457h1v1h-1zM202 457h1v1h-1zM247 457h1v1h-1zM268 457h1v1h-1zM272 457h2v1h-2zM310 457h1v1h-1zM321 457h2v1h-2zM331 457h2v1h-2zM412 457h2v1h-2zM455 457h3v1h-3zM479 457h4v1h-4zM497 457h1v1h-1zM522 457h1v1h-1zM577 457h3v1h-3zM598 457h1v1h-1zM627 457h1v1h-1zM129 458h1v1h-1zM173 458h1v1h-1zM181 458h1v1h-1zM198 458h1v1h-1zM201 458h1v1h-1zM251 458h3v1h-3zM274 458h3v1h-3zM309 458h1v1h-1zM319 458h2v1h-2zM333 458h1v1h-1zM351 458h2v1h-2zM417 458h2v1h-2zM479 458h1v1h-1zM483 458h1v1h-1zM498 458h2v1h-2zM521 458h1v1h-1zM563 458h1v1h-1zM583 458h1v1h-1zM627 458h1v1h-1zM129 459h1v1h-1zM181 459h1v1h-1zM198 459h1v1h-1zM201 459h4v1h-4zM222 459h2v1h-2zM257 459h1v1h-1zM263 459h2v1h-2zM277 459h3v1h-3zM316 459h3v1h-3zM337 459h3v1h-3zM350 459h1v1h-1zM392 459h2v1h-2zM419 459h1v1h-1zM433 459h2v1h-2zM479 459h1v1h-1zM483 459h1v1h-1zM503 459h2v1h-2zM520 459h1v1h-1zM562 459h1v1h-1zM584 459h2v1h-2zM155 460h1v1h-1zM168 460h2v1h-2zM197 460h1v1h-1zM205 460h1v1h-1zM207 460h1v1h-1zM221 460h1v1h-1zM258 460h2v1h-2zM262 460h1v1h-1zM280 460h3v1h-3zM304 460h2v1h-2zM313 460h3v1h-3zM343 460h1v1h-1zM391 460h1v1h-1zM423 460h3v1h-3zM432 460h1v1h-1zM474 460h2v1h-2zM479 460h1v1h-1zM483 460h1v1h-1zM505 460h1v1h-1zM561 460h1v1h-1zM589 460h3v1h-3zM155 461h1v1h-1zM167 461h1v1h-1zM196 461h1v1h-1zM205 461h1v1h-1zM207 461h1v1h-1zM263 461h3v1h-3zM283 461h5v1h-5zM303 461h1v1h-1zM309 461h4v1h-4zM344 461h3v1h-3zM429 461h2v1h-2zM473 461h1v1h-1zM479 461h1v1h-1zM483 461h1v1h-1zM509 461h3v1h-3zM515 461h2v1h-2zM598 461h1v1h-1zM155 462h1v1h-1zM195 462h1v1h-1zM201 462h1v1h-1zM205 462h1v1h-1zM207 462h1v1h-1zM217 462h1v1h-1zM258 462h1v1h-1zM288 462h21v1h-21zM344 462h2v1h-2zM349 462h3v1h-3zM387 462h1v1h-1zM428 462h1v1h-1zM431 462h1v1h-1zM479 462h1v1h-1zM483 462h1v1h-1zM514 462h3v1h-3zM556 462h2v1h-2zM595 462h4v1h-4zM627 462h1v1h-1zM129 463h1v1h-1zM163 463h1v1h-1zM181 463h1v1h-1zM194 463h5v1h-5zM202 463h3v1h-3zM215 463h2v1h-2zM256 463h2v1h-2zM269 463h3v1h-3zM299 463h1v1h-1zM355 463h1v1h-1zM385 463h2v1h-2zM426 463h2v1h-2zM435 463h3v1h-3zM469 463h1v1h-1zM479 463h1v1h-1zM483 463h1v1h-1zM517 463h1v1h-1zM555 463h1v1h-1zM598 463h1v1h-1zM601 463h2v1h-2zM627 463h1v1h-1zM129 464h1v1h-1zM162 464h1v1h-1zM181 464h1v1h-1zM275 464h2v1h-2zM298 464h1v1h-1zM340 464h1v1h-1zM356 464h2v1h-2zM441 464h1v1h-1zM467 464h2v1h-2zM480 464h3v1h-3zM510 464h1v1h-1zM521 464h3v1h-3zM596 464h2v1h-2zM603 464h1v1h-1zM627 464h1v1h-1zM129 465h1v1h-1zM161 465h1v1h-1zM181 465h1v1h-1zM277 465h1v1h-1zM297 465h1v1h-1zM339 465h1v1h-1zM361 465h2v1h-2zM442 465h2v1h-2zM508 465h5v1h-5zM527 465h1v1h-1zM551 465h1v1h-1zM607 465h3v1h-3zM155 466h1v1h-1zM207 466h1v1h-1zM210 466h2v1h-2zM251 466h2v1h-2zM281 466h3v1h-3zM338 466h1v1h-1zM363 466h1v1h-1zM380 466h2v1h-2zM421 466h2v1h-2zM447 466h2v1h-2zM509 466h1v1h-1zM528 466h2v1h-2zM550 466h1v1h-1zM592 466h1v1h-1zM613 466h1v1h-1zM155 467h3v1h-3zM207 467h1v1h-1zM209 467h1v1h-1zM250 467h1v1h-1zM287 467h1v1h-1zM292 467h2v1h-2zM367 467h3v1h-3zM379 467h1v1h-1zM420 467h1v1h-1zM449 467h1v1h-1zM462 467h2v1h-2zM508 467h1v1h-1zM533 467h3v1h-3zM549 467h1v1h-1zM591 467h1v1h-1zM614 467h2v1h-2zM155 468h1v1h-1zM207 468h2v1h-2zM288 468h2v1h-2zM291 468h1v1h-1zM333 468h2v1h-2zM373 468h1v1h-1zM453 468h3v1h-3zM461 468h1v1h-1zM503 468h2v1h-2zM508 468h4v1h-4zM590 468h1v1h-1zM619 468h3v1h-3zM627 468h1v1h-1zM129 469h1v1h-1zM181 469h1v1h-1zM205 469h1v1h-1zM209 469h1v1h-1zM246 469h1v1h-1zM293 469h3v1h-3zM332 469h1v1h-1zM374 469h2v1h-2zM416 469h1v1h-1zM459 469h2v1h-2zM502 469h1v1h-1zM512 469h1v1h-1zM539 469h3v1h-3zM544 469h2v1h-2zM625 469h1v1h-1zM627 469h1v1h-1zM129 470h1v1h-1zM151 470h1v1h-1zM181 470h1v1h-1zM203 470h2v1h-2zM213 470h3v1h-3zM244 470h2v1h-2zM287 470h1v1h-1zM373 470h2v1h-2zM379 470h3v1h-3zM414 470h2v1h-2zM457 470h1v1h-1zM461 470h1v1h-1zM512 470h1v1h-1zM543 470h1v1h-1zM545 470h2v1h-2zM585 470h2v1h-2zM626 470h2v1h-2zM129 471h1v1h-1zM149 471h2v1h-2zM169 471h3v1h-3zM176 471h3v1h-3zM181 471h1v1h-1zM219 471h2v1h-2zM285 471h2v1h-2zM299 471h3v1h-3zM328 471h1v1h-1zM385 471h1v1h-1zM455 471h2v1h-2zM465 471h3v1h-3zM498 471h1v1h-1zM508 471h1v1h-1zM512 471h1v1h-1zM547 471h1v1h-1zM584 471h1v1h-1zM625 471h2v1h-2zM155 472h1v1h-1zM168 472h1v1h-1zM172 472h1v1h-1zM175 472h1v1h-1zM179 472h1v1h-1zM221 472h1v1h-1zM305 472h2v1h-2zM327 472h1v1h-1zM369 472h1v1h-1zM386 472h2v1h-2zM471 472h1v1h-1zM496 472h2v1h-2zM509 472h3v1h-3zM539 472h1v1h-1zM551 472h3v1h-3zM155 473h1v1h-1zM172 473h1v1h-1zM175 473h1v1h-1zM179 473h1v1h-1zM198 473h2v1h-2zM225 473h3v1h-3zM239 473h2v1h-2zM307 473h1v1h-1zM326 473h1v1h-1zM368 473h1v1h-1zM391 473h2v1h-2zM409 473h2v1h-2zM472 473h2v1h-2zM537 473h3v1h-3zM545 473h3v1h-3zM557 473h1v1h-1zM580 473h1v1h-1zM621 473h1v1h-1zM144 474h2v1h-2zM155 474h1v1h-1zM170 474h2v1h-2zM175 474h1v1h-1zM179 474h1v1h-1zM197 474h1v1h-1zM231 474h1v1h-1zM238 474h1v1h-1zM280 474h2v1h-2zM311 474h3v1h-3zM367 474h1v1h-1zM393 474h1v1h-1zM408 474h1v1h-1zM450 474h2v1h-2zM477 474h2v1h-2zM538 474h2v1h-2zM544 474h1v1h-1zM548 474h1v1h-1zM558 474h2v1h-2zM578 474h2v1h-2zM620 474h1v1h-1zM129 475h1v1h-1zM143 475h1v1h-1zM172 475h1v1h-1zM175 475h1v1h-1zM179 475h1v1h-1zM181 475h1v1h-1zM232 475h2v1h-2zM279 475h1v1h-1zM317 475h1v1h-1zM321 475h2v1h-2zM397 475h3v1h-3zM449 475h1v1h-1zM479 475h1v1h-1zM491 475h2v1h-2zM537 475h1v1h-1zM539 475h1v1h-1zM544 475h1v1h-1zM548 475h1v1h-1zM563 475h3v1h-3zM619 475h1v1h-1zM129 476h1v1h-1zM172 476h1v1h-1zM175 476h1v1h-1zM179 476h1v1h-1zM181 476h1v1h-1zM193 476h1v1h-1zM234 476h1v1h-1zM237 476h3v1h-3zM318 476h3v1h-3zM362 476h2v1h-2zM403 476h2v1h-2zM483 476h3v1h-3zM490 476h1v1h-1zM532 476h2v1h-2zM539 476h1v1h-1zM544 476h1v1h-1zM548 476h1v1h-1zM129 477h1v1h-1zM139 477h1v1h-1zM168 477h1v1h-1zM172 477h1v1h-1zM175 477h1v1h-1zM179 477h1v1h-1zM181 477h1v1h-1zM191 477h2v1h-2zM232 477h2v1h-2zM275 477h1v1h-1zM323 477h3v1h-3zM361 477h1v1h-1zM402 477h2v1h-2zM405 477h1v1h-1zM445 477h1v1h-1zM489 477h2v1h-2zM531 477h1v1h-1zM539 477h1v1h-1zM544 477h1v1h-1zM548 477h1v1h-1zM569 477h3v1h-3zM573 477h2v1h-2zM614 477h2v1h-2zM137 478h2v1h-2zM155 478h1v1h-1zM169 478h3v1h-3zM176 478h3v1h-3zM243 478h3v1h-3zM273 478h2v1h-2zM316 478h1v1h-1zM329 478h1v1h-1zM409 478h3v1h-3zM443 478h2v1h-2zM486 478h1v1h-1zM491 478h1v1h-1zM539 478h1v1h-1zM544 478h1v1h-1zM548 478h1v1h-1zM572 478h1v1h-1zM575 478h2v1h-2zM613 478h1v1h-1zM155 479h1v1h-1zM249 479h2v1h-2zM314 479h2v1h-2zM330 479h2v1h-2zM357 479h1v1h-1zM398 479h1v1h-1zM415 479h1v1h-1zM484 479h2v1h-2zM495 479h3v1h-3zM527 479h1v1h-1zM539 479h1v1h-1zM544 479h1v1h-1zM548 479h1v1h-1zM577 479h1v1h-1zM155 480h1v1h-1zM186 480h2v1h-2zM227 480h2v1h-2zM251 480h1v1h-1zM335 480h2v1h-2zM356 480h1v1h-1zM397 480h1v1h-1zM416 480h2v1h-2zM501 480h1v1h-1zM525 480h2v1h-2zM539 480h1v1h-1zM545 480h3v1h-3zM568 480h1v1h-1zM581 480h3v1h-3zM609 480h1v1h-1zM129 481h1v1h-1zM132 481h2v1h-2zM181 481h1v1h-1zM185 481h1v1h-1zM226 481h1v1h-1zM255 481h3v1h-3zM268 481h2v1h-2zM337 481h1v1h-1zM355 481h1v1h-1zM396 481h1v1h-1zM421 481h2v1h-2zM438 481h2v1h-2zM502 481h2v1h-2zM566 481h3v1h-3zM574 481h4v1h-4zM587 481h1v1h-1zM608 481h1v1h-1zM129 482h1v1h-1zM131 482h1v1h-1zM181 482h1v1h-1zM261 482h1v1h-1zM267 482h1v1h-1zM309 482h2v1h-2zM341 482h3v1h-3zM423 482h1v1h-1zM437 482h1v1h-1zM479 482h2v1h-2zM507 482h3v1h-3zM567 482h2v1h-2zM574 482h1v1h-1zM588 482h2v1h-2zM607 482h1v1h-1zM129 483h1v1h-1zM181 483h2v1h-2zM222 483h1v1h-1zM262 483h2v1h-2zM308 483h1v1h-1zM347 483h1v1h-1zM350 483h2v1h-2zM391 483h2v1h-2zM427 483h3v1h-3zM478 483h1v1h-1zM520 483h2v1h-2zM566 483h1v1h-1zM568 483h1v1h-1zM573 483h1v1h-1zM593 483h3v1h-3zM155 484h1v1h-1zM179 484h2v1h-2zM183 484h1v1h-1zM220 484h2v1h-2zM263 484h1v1h-1zM267 484h3v1h-3zM348 484h2v1h-2zM390 484h1v1h-1zM433 484h2v1h-2zM513 484h3v1h-3zM519 484h1v1h-1zM561 484h2v1h-2zM568 484h1v1h-1zM573 484h4v1h-4zM599 484h1v1h-1zM602 484h2v1h-2zM155 485h1v1h-1zM187 485h3v1h-3zM261 485h2v1h-2zM304 485h1v1h-1zM353 485h3v1h-3zM431 485h2v1h-2zM435 485h1v1h-1zM474 485h1v1h-1zM519 485h2v1h-2zM560 485h1v1h-1zM568 485h1v1h-1zM577 485h1v1h-1zM600 485h2v1h-2zM143 486h3v1h-3zM150 486h4v1h-4zM155 486h1v1h-1zM175 486h1v1h-1zM193 486h2v1h-2zM273 486h3v1h-3zM302 486h2v1h-2zM345 486h1v1h-1zM359 486h1v1h-1zM386 486h1v1h-1zM439 486h3v1h-3zM472 486h2v1h-2zM515 486h1v1h-1zM521 486h1v1h-1zM568 486h1v1h-1zM577 486h1v1h-1zM129 487h1v1h-1zM142 487h1v1h-1zM146 487h1v1h-1zM150 487h1v1h-1zM174 487h1v1h-1zM195 487h1v1h-1zM215 487h2v1h-2zM279 487h2v1h-2zM343 487h2v1h-2zM360 487h2v1h-2zM385 487h1v1h-1zM427 487h1v1h-1zM445 487h1v1h-1zM513 487h2v1h-2zM525 487h3v1h-3zM556 487h1v1h-1zM568 487h1v1h-1zM573 487h1v1h-1zM577 487h1v1h-1zM597 487h1v1h-1zM129 488h1v1h-1zM146 488h1v1h-1zM149 488h1v1h-1zM173 488h1v1h-1zM199 488h3v1h-3zM214 488h1v1h-1zM256 488h2v1h-2zM281 488h1v1h-1zM365 488h2v1h-2zM384 488h1v1h-1zM426 488h1v1h-1zM446 488h2v1h-2zM531 488h1v1h-1zM554 488h2v1h-2zM568 488h1v1h-1zM574 488h3v1h-3zM595 488h2v1h-2zM129 489h1v1h-1zM144 489h2v1h-2zM149 489h4v1h-4zM205 489h1v1h-1zM255 489h1v1h-1zM285 489h3v1h-3zM297 489h2v1h-2zM367 489h1v1h-1zM425 489h1v1h-1zM451 489h2v1h-2zM467 489h2v1h-2zM532 489h2v1h-2zM596 489h3v1h-3zM603 489h3v1h-3zM146 490h1v1h-1zM153 490h1v1h-1zM155 490h1v1h-1zM168 490h2v1h-2zM206 490h2v1h-2zM210 490h1v1h-1zM291 490h1v1h-1zM296 490h1v1h-1zM338 490h2v1h-2zM371 490h3v1h-3zM379 490h2v1h-2zM453 490h1v1h-1zM466 490h1v1h-1zM508 490h2v1h-2zM537 490h3v1h-3zM550 490h1v1h-1zM595 490h1v1h-1zM599 490h1v1h-1zM602 490h1v1h-1zM606 490h1v1h-1zM146 491h1v1h-1zM153 491h1v1h-1zM155 491h1v1h-1zM167 491h1v1h-1zM208 491h2v1h-2zM211 491h3v1h-3zM251 491h1v1h-1zM292 491h2v1h-2zM337 491h1v1h-1zM377 491h2v1h-2zM420 491h2v1h-2zM457 491h3v1h-3zM507 491h1v1h-1zM549 491h1v1h-1zM590 491h2v1h-2zM599 491h1v1h-1zM602 491h1v1h-1zM606 491h1v1h-1zM142 492h1v1h-1zM146 492h1v1h-1zM149 492h1v1h-1zM153 492h1v1h-1zM155 492h1v1h-1zM249 492h2v1h-2zM292 492h1v1h-1zM297 492h3v1h-3zM379 492h1v1h-1zM419 492h1v1h-1zM462 492h3v1h-3zM543 492h3v1h-3zM548 492h1v1h-1zM589 492h1v1h-1zM599 492h1v1h-1zM602 492h1v1h-1zM606 492h1v1h-1zM129 493h1v1h-1zM143 493h3v1h-3zM150 493h3v1h-3zM163 493h1v1h-1zM204 493h1v1h-1zM217 493h3v1h-3zM290 493h2v1h-2zM303 493h1v1h-1zM333 493h1v1h-1zM374 493h1v1h-1zM383 493h3v1h-3zM460 493h2v1h-2zM465 493h1v1h-1zM503 493h1v1h-1zM549 493h2v1h-2zM598 493h1v1h-1zM602 493h1v1h-1zM606 493h1v1h-1zM129 494h1v1h-1zM162 494h1v1h-1zM203 494h1v1h-1zM223 494h2v1h-2zM304 494h2v1h-2zM331 494h2v1h-2zM372 494h2v1h-2zM389 494h1v1h-1zM415 494h1v1h-1zM469 494h3v1h-3zM501 494h2v1h-2zM543 494h2v1h-2zM551 494h1v1h-1zM585 494h1v1h-1zM597 494h1v1h-1zM602 494h1v1h-1zM606 494h1v1h-1zM129 495h1v1h-1zM161 495h1v1h-1zM202 495h1v1h-1zM225 495h1v1h-1zM244 495h2v1h-2zM309 495h2v1h-2zM390 495h2v1h-2zM414 495h1v1h-1zM456 495h1v1h-1zM475 495h1v1h-1zM542 495h1v1h-1zM555 495h3v1h-3zM583 495h2v1h-2zM596 495h1v1h-1zM602 495h1v1h-1zM606 495h1v1h-1zM155 496h1v1h-1zM229 496h3v1h-3zM243 496h1v1h-1zM285 496h2v1h-2zM311 496h1v1h-1zM395 496h2v1h-2zM413 496h1v1h-1zM455 496h1v1h-1zM476 496h2v1h-2zM561 496h1v1h-1zM595 496h5v1h-5zM603 496h3v1h-3zM625 496h3v1h-3zM632 496h4v1h-4zM155 497h3v1h-3zM197 497h2v1h-2zM235 497h1v1h-1zM284 497h1v1h-1zM315 497h3v1h-3zM326 497h2v1h-2zM367 497h2v1h-2zM397 497h1v1h-1zM454 497h1v1h-1zM481 497h3v1h-3zM496 497h2v1h-2zM538 497h1v1h-1zM562 497h2v1h-2zM624 497h1v1h-1zM628 497h1v1h-1zM632 497h1v1h-1zM155 498h2v1h-2zM196 498h1v1h-1zM236 498h2v1h-2zM239 498h1v1h-1zM321 498h1v1h-1zM325 498h1v1h-1zM366 498h1v1h-1zM401 498h3v1h-3zM408 498h2v1h-2zM495 498h1v1h-1zM536 498h2v1h-2zM567 498h3v1h-3zM578 498h2v1h-2zM628 498h1v1h-1zM631 498h1v1h-1zM129 499h1v1h-1zM157 499h1v1h-1zM237 499h2v1h-2zM241 499h3v1h-3zM280 499h1v1h-1zM322 499h2v1h-2zM407 499h2v1h-2zM449 499h2v1h-2zM487 499h3v1h-3zM573 499h1v1h-1zM577 499h1v1h-1zM628 499h1v1h-1zM631 499h4v1h-4zM129 500h1v1h-1zM151 500h1v1h-1zM161 500h3v1h-3zM192 500h1v1h-1zM278 500h2v1h-2zM321 500h1v1h-1zM327 500h3v1h-3zM362 500h1v1h-1zM409 500h1v1h-1zM448 500h1v1h-1zM491 500h1v1h-1zM493 500h2v1h-2zM574 500h1v1h-1zM627 500h1v1h-1zM635 500h1v1h-1zM119 501h1v1h-1zM124 501h3v1h-3zM129 501h1v1h-1zM149 501h2v1h-2zM167 501h2v1h-2zM191 501h1v1h-1zM233 501h1v1h-1zM247 501h3v1h-3zM319 501h2v1h-2zM333 501h1v1h-1zM360 501h2v1h-2zM403 501h1v1h-1zM413 501h3v1h-3zM489 501h2v1h-2zM495 501h1v1h-1zM531 501h2v1h-2zM573 501h1v1h-1zM626 501h1v1h-1zM635 501h1v1h-1zM118 502h2v1h-2zM123 502h1v1h-1zM127 502h1v1h-1zM169 502h1v1h-1zM190 502h1v1h-1zM232 502h1v1h-1zM253 502h2v1h-2zM334 502h2v1h-2zM401 502h2v1h-2zM419 502h1v1h-1zM444 502h1v1h-1zM499 502h3v1h-3zM530 502h1v1h-1zM571 502h2v1h-2zM625 502h1v1h-1zM631 502h1v1h-1zM635 502h1v1h-1zM117 503h1v1h-1zM119 503h1v1h-1zM123 503h1v1h-1zM127 503h1v1h-1zM173 503h3v1h-3zM231 503h1v1h-1zM255 503h1v1h-1zM273 503h2v1h-2zM339 503h2v1h-2zM420 503h2v1h-2zM443 503h1v1h-1zM485 503h1v1h-1zM505 503h1v1h-1zM624 503h5v1h-5zM632 503h3v1h-3zM117 504h1v1h-1zM119 504h1v1h-1zM123 504h1v1h-1zM127 504h1v1h-1zM144 504h2v1h-2zM179 504h1v1h-1zM185 504h2v1h-2zM259 504h3v1h-3zM272 504h1v1h-1zM314 504h2v1h-2zM341 504h1v1h-1zM355 504h2v1h-2zM425 504h2v1h-2zM442 504h1v1h-1zM484 504h1v1h-1zM506 504h2v1h-2zM526 504h1v1h-1zM116 505h1v1h-1zM119 505h1v1h-1zM123 505h1v1h-1zM127 505h1v1h-1zM129 505h1v1h-1zM143 505h1v1h-1zM180 505h2v1h-2zM184 505h1v1h-1zM226 505h2v1h-2zM265 505h1v1h-1zM313 505h1v1h-1zM345 505h3v1h-3zM354 505h1v1h-1zM396 505h2v1h-2zM427 505h1v1h-1zM483 505h1v1h-1zM511 505h3v1h-3zM524 505h2v1h-2zM566 505h2v1h-2zM116 506h5v1h-5zM123 506h1v1h-1zM127 506h1v1h-1zM129 506h1v1h-1zM185 506h3v1h-3zM225 506h1v1h-1zM266 506h3v1h-3zM351 506h2v1h-2zM395 506h1v1h-1zM431 506h3v1h-3zM437 506h2v1h-2zM565 506h1v1h-1zM119 507h1v1h-1zM123 507h1v1h-1zM127 507h1v1h-1zM129 507h1v1h-1zM139 507h1v1h-1zM180 507h1v1h-1zM266 507h2v1h-2zM271 507h3v1h-3zM309 507h1v1h-1zM350 507h1v1h-1zM353 507h1v1h-1zM436 507h3v1h-3zM478 507h2v1h-2zM517 507h3v1h-3zM119 508h1v1h-1zM124 508h3v1h-3zM137 508h2v1h-2zM178 508h2v1h-2zM191 508h3v1h-3zM221 508h1v1h-1zM277 508h1v1h-1zM307 508h2v1h-2zM348 508h2v1h-2zM357 508h3v1h-3zM391 508h1v1h-1zM439 508h1v1h-1zM477 508h1v1h-1zM519 508h2v1h-2zM523 508h2v1h-2zM561 508h1v1h-1zM197 509h2v1h-2zM220 509h1v1h-1zM262 509h1v1h-1zM278 509h2v1h-2zM363 509h1v1h-1zM389 509h2v1h-2zM432 509h1v1h-1zM443 509h3v1h-3zM518 509h1v1h-1zM525 509h1v1h-1zM559 509h2v1h-2zM199 510h1v1h-1zM219 510h1v1h-1zM261 510h1v1h-1zM283 510h2v1h-2zM364 510h2v1h-2zM430 510h2v1h-2zM449 510h1v1h-1zM473 510h1v1h-1zM529 510h3v1h-3zM129 511h1v1h-1zM132 511h2v1h-2zM173 511h2v1h-2zM203 511h3v1h-3zM260 511h1v1h-1zM285 511h1v1h-1zM302 511h2v1h-2zM343 511h2v1h-2zM369 511h2v1h-2zM450 511h2v1h-2zM472 511h1v1h-1zM514 511h1v1h-1zM535 511h1v1h-1zM129 512h1v1h-1zM131 512h1v1h-1zM172 512h1v1h-1zM209 512h1v1h-1zM214 512h2v1h-2zM289 512h3v1h-3zM301 512h1v1h-1zM342 512h1v1h-1zM371 512h1v1h-1zM384 512h2v1h-2zM455 512h3v1h-3zM471 512h1v1h-1zM512 512h2v1h-2zM536 512h2v1h-2zM554 512h2v1h-2zM129 513h2v1h-2zM210 513h2v1h-2zM213 513h1v1h-1zM255 513h2v1h-2zM295 513h1v1h-1zM375 513h3v1h-3zM383 513h1v1h-1zM425 513h2v1h-2zM541 513h3v1h-3zM553 513h1v1h-1zM131 514h1v1h-1zM168 514h1v1h-1zM215 514h3v1h-3zM254 514h1v1h-1zM296 514h2v1h-2zM338 514h1v1h-1zM381 514h2v1h-2zM424 514h1v1h-1zM461 514h3v1h-3zM466 514h2v1h-2zM508 514h1v1h-1zM547 514h1v1h-1zM135 515h3v1h-3zM166 515h2v1h-2zM209 515h1v1h-1zM295 515h2v1h-2zM301 515h3v1h-3zM336 515h2v1h-2zM379 515h1v1h-1zM383 515h1v1h-1zM465 515h1v1h-1zM467 515h2v1h-2zM507 515h1v1h-1zM548 515h2v1h-2zM141 516h2v1h-2zM207 516h2v1h-2zM221 516h3v1h-3zM250 516h1v1h-1zM307 516h1v1h-1zM377 516h2v1h-2zM387 516h3v1h-3zM420 516h1v1h-1zM469 516h1v1h-1zM506 516h1v1h-1zM547 516h2v1h-2zM143 517h1v1h-1zM227 517h2v1h-2zM249 517h1v1h-1zM291 517h1v1h-1zM308 517h2v1h-2zM393 517h1v1h-1zM418 517h2v1h-2zM461 517h1v1h-1zM473 517h3v1h-3zM147 518h3v1h-3zM161 518h2v1h-2zM229 518h1v1h-1zM248 518h1v1h-1zM290 518h1v1h-1zM313 518h2v1h-2zM331 518h2v1h-2zM394 518h2v1h-2zM459 518h2v1h-2zM479 518h1v1h-1zM501 518h2v1h-2zM543 518h1v1h-1zM153 519h1v1h-1zM160 519h1v1h-1zM202 519h2v1h-2zM233 519h3v1h-3zM289 519h1v1h-1zM315 519h1v1h-1zM330 519h1v1h-1zM372 519h2v1h-2zM399 519h2v1h-2zM480 519h2v1h-2zM500 519h1v1h-1zM542 519h1v1h-1zM154 520h2v1h-2zM201 520h1v1h-1zM239 520h1v1h-1zM243 520h2v1h-2zM319 520h3v1h-3zM371 520h1v1h-1zM401 520h1v1h-1zM413 520h2v1h-2zM485 520h3v1h-3zM541 520h1v1h-1zM159 521h3v1h-3zM240 521h3v1h-3zM284 521h2v1h-2zM325 521h2v1h-2zM405 521h3v1h-3zM412 521h1v1h-1zM454 521h2v1h-2zM496 521h1v1h-1zM197 522h1v1h-1zM245 522h3v1h-3zM283 522h1v1h-1zM324 522h2v1h-2zM327 522h1v1h-1zM367 522h1v1h-1zM411 522h2v1h-2zM453 522h1v1h-1zM491 522h5v1h-5zM536 522h2v1h-2zM165 523h3v1h-3zM195 523h2v1h-2zM238 523h1v1h-1zM251 523h1v1h-1zM331 523h3v1h-3zM365 523h2v1h-2zM408 523h1v1h-1zM413 523h1v1h-1zM497 523h2v1h-2zM535 523h1v1h-1zM171 524h2v1h-2zM236 524h2v1h-2zM252 524h2v1h-2zM279 524h1v1h-1zM320 524h1v1h-1zM337 524h1v1h-1zM406 524h2v1h-2zM417 524h3v1h-3zM449 524h1v1h-1zM499 524h1v1h-1zM173 525h1v1h-1zM257 525h2v1h-2zM278 525h1v1h-1zM319 525h1v1h-1zM338 525h2v1h-2zM423 525h1v1h-1zM447 525h2v1h-2zM489 525h2v1h-2zM503 525h3v1h-3zM531 525h1v1h-1zM177 526h3v1h-3zM190 526h2v1h-2zM259 526h1v1h-1zM277 526h1v1h-1zM318 526h1v1h-1zM343 526h2v1h-2zM360 526h2v1h-2zM424 526h2v1h-2zM488 526h1v1h-1zM509 526h1v1h-1zM530 526h1v1h-1zM183 527h1v1h-1zM189 527h1v1h-1zM231 527h2v1h-2zM263 527h3v1h-3zM345 527h1v1h-1zM359 527h1v1h-1zM401 527h2v1h-2zM429 527h3v1h-3zM510 527h2v1h-2zM529 527h1v1h-1zM184 528h2v1h-2zM230 528h1v1h-1zM269 528h1v1h-1zM272 528h2v1h-2zM313 528h2v1h-2zM349 528h3v1h-3zM400 528h1v1h-1zM442 528h2v1h-2zM484 528h1v1h-1zM515 528h3v1h-3zM189 529h3v1h-3zM270 529h2v1h-2zM312 529h1v1h-1zM355 529h2v1h-2zM435 529h3v1h-3zM441 529h1v1h-1zM482 529h2v1h-2zM521 529h1v1h-1zM524 529h2v1h-2zM226 530h1v1h-1zM275 530h3v1h-3zM353 530h2v1h-2zM357 530h1v1h-1zM396 530h1v1h-1zM441 530h2v1h-2zM522 530h2v1h-2zM195 531h3v1h-3zM224 531h2v1h-2zM267 531h1v1h-1zM281 531h1v1h-1zM308 531h1v1h-1zM361 531h3v1h-3zM394 531h2v1h-2zM437 531h1v1h-1zM443 531h1v1h-1zM201 532h2v1h-2zM265 532h2v1h-2zM282 532h2v1h-2zM307 532h1v1h-1zM349 532h1v1h-1zM367 532h1v1h-1zM435 532h2v1h-2zM447 532h3v1h-3zM477 532h2v1h-2zM519 532h1v1h-1zM203 533h1v1h-1zM287 533h2v1h-2zM306 533h1v1h-1zM348 533h1v1h-1zM368 533h2v1h-2zM453 533h1v1h-1zM476 533h1v1h-1zM517 533h2v1h-2zM207 534h3v1h-3zM219 534h2v1h-2zM289 534h1v1h-1zM347 534h1v1h-1zM373 534h2v1h-2zM389 534h2v1h-2zM454 534h2v1h-2zM213 535h1v1h-1zM218 535h1v1h-1zM260 535h2v1h-2zM293 535h3v1h-3zM301 535h2v1h-2zM375 535h1v1h-1zM388 535h1v1h-1zM430 535h2v1h-2zM459 535h3v1h-3zM472 535h1v1h-1zM214 536h2v1h-2zM259 536h1v1h-1zM299 536h2v1h-2zM342 536h2v1h-2zM379 536h3v1h-3zM429 536h1v1h-1zM470 536h2v1h-2zM512 536h2v1h-2zM219 537h3v1h-3zM301 537h1v1h-1zM341 537h1v1h-1zM384 537h3v1h-3zM465 537h3v1h-3zM511 537h1v1h-1zM225 538h1v1h-1zM255 538h1v1h-1zM296 538h1v1h-1zM305 538h3v1h-3zM382 538h2v1h-2zM387 538h1v1h-1zM425 538h1v1h-1zM471 538h2v1h-2zM226 539h2v1h-2zM253 539h2v1h-2zM294 539h2v1h-2zM311 539h1v1h-1zM337 539h1v1h-1zM391 539h3v1h-3zM423 539h2v1h-2zM465 539h2v1h-2zM473 539h1v1h-1zM507 539h1v1h-1zM231 540h2v1h-2zM312 540h2v1h-2zM336 540h1v1h-1zM378 540h1v1h-1zM397 540h1v1h-1zM464 540h1v1h-1zM477 540h3v1h-3zM505 540h2v1h-2zM233 541h1v1h-1zM317 541h2v1h-2zM335 541h1v1h-1zM377 541h1v1h-1zM398 541h2v1h-2zM483 541h1v1h-1zM237 542h3v1h-3zM248 542h2v1h-2zM289 542h2v1h-2zM319 542h1v1h-1zM376 542h1v1h-1zM403 542h3v1h-3zM418 542h2v1h-2zM460 542h1v1h-1zM484 542h2v1h-2zM243 543h1v1h-1zM247 543h1v1h-1zM288 543h1v1h-1zM323 543h3v1h-3zM330 543h2v1h-2zM417 543h1v1h-1zM458 543h2v1h-2zM489 543h3v1h-3zM500 543h2v1h-2zM244 544h2v1h-2zM329 544h2v1h-2zM371 544h2v1h-2zM409 544h3v1h-3zM495 544h1v1h-1zM499 544h1v1h-1zM249 545h3v1h-3zM284 545h1v1h-1zM331 545h1v1h-1zM370 545h1v1h-1zM413 545h1v1h-1zM415 545h2v1h-2zM454 545h1v1h-1zM496 545h1v1h-1zM255 546h1v1h-1zM282 546h2v1h-2zM325 546h1v1h-1zM335 546h3v1h-3zM411 546h2v1h-2zM417 546h1v1h-1zM453 546h1v1h-1zM495 546h1v1h-1zM256 547h2v1h-2zM323 547h2v1h-2zM341 547h1v1h-1zM366 547h1v1h-1zM421 547h3v1h-3zM452 547h1v1h-1zM493 547h2v1h-2zM261 548h2v1h-2zM342 548h2v1h-2zM365 548h1v1h-1zM407 548h1v1h-1zM427 548h1v1h-1zM263 549h1v1h-1zM277 549h2v1h-2zM347 549h2v1h-2zM364 549h1v1h-1zM406 549h1v1h-1zM428 549h2v1h-2zM447 549h2v1h-2zM267 550h3v1h-3zM276 550h1v1h-1zM318 550h2v1h-2zM349 550h1v1h-1zM405 550h1v1h-1zM433 550h3v1h-3zM446 550h1v1h-1zM488 550h2v1h-2zM273 551h2v1h-2zM317 551h1v1h-1zM353 551h3v1h-3zM359 551h2v1h-2zM487 551h1v1h-1zM275 552h1v1h-1zM358 552h3v1h-3zM400 552h2v1h-2zM439 552h4v1h-4zM279 553h3v1h-3zM313 553h1v1h-1zM361 553h1v1h-1zM399 553h1v1h-1zM440 553h2v1h-2zM445 553h2v1h-2zM483 553h1v1h-1zM285 554h1v1h-1zM311 554h2v1h-2zM354 554h1v1h-1zM365 554h3v1h-3zM447 554h1v1h-1zM481 554h2v1h-2zM286 555h2v1h-2zM352 555h2v1h-2zM371 555h1v1h-1zM395 555h1v1h-1zM451 555h3v1h-3zM291 556h2v1h-2zM372 556h2v1h-2zM394 556h1v1h-1zM435 556h2v1h-2zM457 556h1v1h-1zM293 557h1v1h-1zM306 557h2v1h-2zM377 557h3v1h-3zM393 557h1v1h-1zM434 557h1v1h-1zM458 557h2v1h-2zM476 557h2v1h-2zM297 558h3v1h-3zM305 558h1v1h-1zM347 558h2v1h-2zM463 558h3v1h-3zM475 558h1v1h-1zM303 559h2v1h-2zM346 559h1v1h-1zM383 559h3v1h-3zM388 559h2v1h-2zM430 559h1v1h-1zM469 559h1v1h-1zM305 560h1v1h-1zM387 560h1v1h-1zM389 560h2v1h-2zM428 560h2v1h-2zM470 560h2v1h-2zM309 561h3v1h-3zM342 561h1v1h-1zM391 561h1v1h-1zM469 561h2v1h-2zM315 562h1v1h-1zM340 562h2v1h-2zM383 562h1v1h-1zM395 562h3v1h-3zM316 563h2v1h-2zM381 563h2v1h-2zM401 563h1v1h-1zM423 563h2v1h-2zM465 563h1v1h-1zM321 564h2v1h-2zM402 564h2v1h-2zM422 564h1v1h-1zM464 564h1v1h-1zM323 565h1v1h-1zM335 565h2v1h-2zM407 565h3v1h-3zM463 565h1v1h-1zM327 566h3v1h-3zM334 566h1v1h-1zM376 566h2v1h-2zM418 566h1v1h-1zM333 567h2v1h-2zM375 567h1v1h-1zM413 567h5v1h-5zM458 567h2v1h-2zM335 568h1v1h-1zM419 568h2v1h-2zM457 568h1v1h-1zM339 569h3v1h-3zM371 569h1v1h-1zM412 569h1v1h-1zM421 569h1v1h-1zM345 570h1v1h-1zM369 570h2v1h-2zM411 570h1v1h-1zM425 570h3v1h-3zM453 570h1v1h-1zM346 571h2v1h-2zM410 571h1v1h-1zM431 571h1v1h-1zM452 571h1v1h-1zM351 572h3v1h-3zM432 572h2v1h-2zM451 572h1v1h-1zM364 573h2v1h-2zM405 573h2v1h-2zM437 573h3v1h-3zM357 574h3v1h-3zM363 574h1v1h-1zM404 574h1v1h-1zM443 574h1v1h-1zM446 574h2v1h-2zM363 575h2v1h-2zM444 575h2v1h-2zM365 576h1v1h-1zM400 576h1v1h-1zM369 577h3v1h-3zM398 577h2v1h-2zM441 577h1v1h-1zM375 578h1v1h-1zM439 578h2v1h-2zM376 579h2v1h-2zM381 580h3v1h-3zM393 580h2v1h-2zM392 581h1v1h-1zM434 581h2v1h-2zM387 582h3v1h-3zM433 582h1v1h-1zM393 583h2v1h-2zM395 584h1v1h-1zM429 584h1v1h-1zM399 585h3v1h-3zM427 585h2v1h-2zM405 586h1v1h-1zM406 587h2v1h-2zM411 588h3v1h-3zM422 588h2v1h-2zM417 589h1v1h-1zM421 589h1v1h-1zM418 590h1v1h-1z"/></svg>
</body></html>
